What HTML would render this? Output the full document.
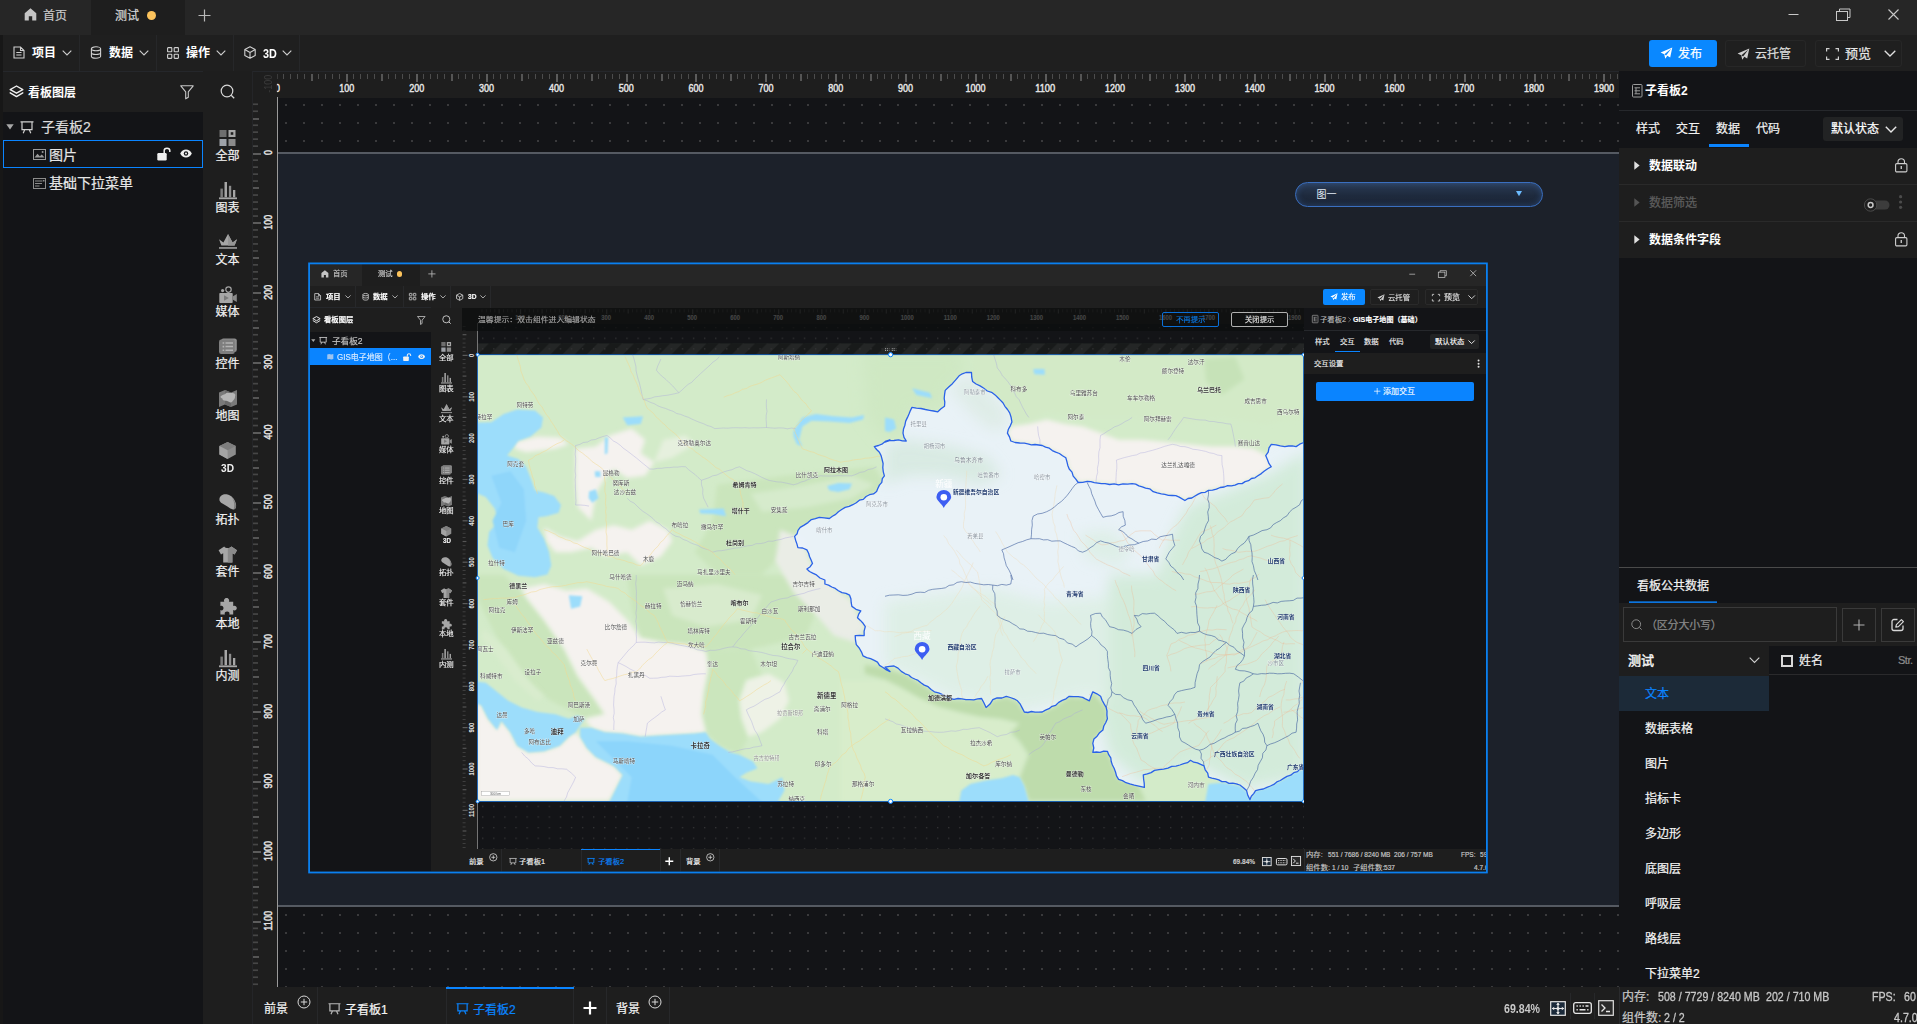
<!DOCTYPE html>
<html lang="zh-CN">
<head>
<meta charset="utf-8">
<title>测试</title>
<style>
*{box-sizing:border-box;margin:0;padding:0}
html,body{width:1917px;height:1024px;overflow:hidden;background:#131417}
body{font-family:"Liberation Sans","Noto Sans CJK SC",sans-serif;font-size:12px;color:#fff;position:relative;line-height:1}
.abs{position:absolute}
.t{position:absolute;white-space:nowrap;line-height:1;-webkit-text-stroke:.22px currentColor}
.b{font-weight:bold;-webkit-text-stroke:0 !important}
svg{position:absolute;overflow:visible}
.num{font-family:"Liberation Sans",sans-serif;font-weight:bold;transform-origin:0 50%;}
/* ---------- app chrome (shared by outer and nested) ---------- */
.tabbar{position:absolute;left:0;top:0;height:35px;background:#262626}
.toolbar{position:absolute;left:0;top:35px;height:36px;background:#1f1f1f}
.sep{position:absolute;top:35px;width:1px;height:36px;background:#262729}
</style>
</head>
<body>
<!-- ===== title/tab bar ===== -->
<div class="tabbar" style="width:1917px"></div>
<div class="abs" style="left:91px;top:0;width:94px;height:35px;background:#1e1e1e"></div>
<svg style="left:24px;top:8px" width="13" height="13" viewBox="0 0 13 13"><path d="M6.5 0.3 L12.3 5.2 V12.6 H8.2 V8.2 H4.8 V12.6 H0.7 V5.2 Z" fill="#c4c4c4"/></svg>
<div class="t" style="left:43px;top:10px;color:#c9c9c9">首页</div>
<div class="t" style="left:115px;top:10px;color:#d6d6d6">测试</div>
<div class="abs" style="left:147px;top:11px;width:9px;height:9px;border-radius:50%;background:#fcc35c"></div>
<svg style="left:198px;top:9px" width="13" height="13" viewBox="0 0 13 13"><path d="M6.5 0.5V12.5M0.5 6.5H12.5" stroke="#b8b8b8" stroke-width="1.2" fill="none"/></svg>
<!-- window controls -->
<svg style="left:1788px;top:9px" width="12" height="12" viewBox="0 0 12 12"><path d="M0.5 5.5H10.5" stroke="#c8c8c8" stroke-width="1"/></svg>
<svg style="left:1836px;top:8px" width="15" height="14" viewBox="0 0 15 14"><path d="M3.5 3.5V1H14V9.5H11.5" stroke="#c8c8c8" stroke-width="1" fill="none"/><rect x="0.5" y="3.5" width="11" height="9" stroke="#c8c8c8" stroke-width="1" fill="none"/></svg>
<svg style="left:1888px;top:9px" width="12" height="12" viewBox="0 0 12 12"><path d="M0.5 0.5L10.5 10.5M10.5 0.5L0.5 10.5" stroke="#c8c8c8" stroke-width="1.1"/></svg>

<!-- ===== toolbar ===== -->
<div class="toolbar" style="width:1917px"></div>
<div class="abs" style="left:0;top:35px;width:3px;height:989px;background:#171717"></div>
<div class="sep" style="left:79px"></div><div class="sep" style="left:156px"></div><div class="sep" style="left:233px"></div><div class="sep" style="left:299px"></div>
<div class="abs" style="left:3px;top:71px;width:200px;height:1px;background:#25272b"></div>
<!-- 项目 -->
<svg style="left:13px;top:46px" width="12" height="13" viewBox="0 0 12 13"><path d="M1 1H7.5L11 4.5V12H1Z M7.5 1V4.5H11" stroke="#d0d0d0" stroke-width="1.1" fill="none"/><path d="M3.3 6.5H8.5M3.3 9H8.5" stroke="#d0d0d0" stroke-width="1"/></svg>
<div class="t b" style="left:32px;top:47px">项目</div>
<svg style="left:62px;top:50px" width="10" height="6" viewBox="0 0 10 6"><path d="M0.7 0.7L5 5L9.3 0.7" stroke="#cfcfcf" stroke-width="1.1" fill="none"/></svg>
<!-- 数据 -->
<svg style="left:90px;top:46px" width="12" height="13" viewBox="0 0 12 13"><ellipse cx="6" cy="2.8" rx="4.6" ry="2" stroke="#d0d0d0" stroke-width="1.1" fill="none"/><path d="M1.4 2.8V10.2C1.4 11.3 3.5 12.2 6 12.2S10.6 11.3 10.6 10.2V2.8M1.4 6.5C1.4 7.6 3.5 8.5 6 8.5S10.6 7.6 10.6 6.5" stroke="#d0d0d0" stroke-width="1.1" fill="none"/></svg>
<div class="t b" style="left:109px;top:47px">数据</div>
<svg style="left:139px;top:50px" width="10" height="6" viewBox="0 0 10 6"><path d="M0.7 0.7L5 5L9.3 0.7" stroke="#cfcfcf" stroke-width="1.1" fill="none"/></svg>
<!-- 操作 -->
<svg style="left:167px;top:47px" width="12" height="12" viewBox="0 0 12 12"><g stroke="#d0d0d0" stroke-width="1.1" fill="none"><rect x="0.6" y="0.6" width="4.2" height="4.2" rx="0.6"/><rect x="7.2" y="0.6" width="4.2" height="4.2" rx="0.6"/><rect x="0.6" y="7.2" width="4.2" height="4.2" rx="0.6"/><rect x="7.2" y="7.2" width="4.2" height="4.2" rx="0.6"/></g></svg>
<div class="t b" style="left:186px;top:47px">操作</div>
<svg style="left:216px;top:50px" width="10" height="6" viewBox="0 0 10 6"><path d="M0.7 0.7L5 5L9.3 0.7" stroke="#cfcfcf" stroke-width="1.1" fill="none"/></svg>
<!-- 3D -->
<svg style="left:244px;top:46px" width="12" height="13" viewBox="0 0 12 13"><path d="M6 0.8L11.2 3.6V9.4L6 12.2L0.8 9.4V3.6Z M0.8 3.6L6 6.5L11.2 3.6 M6 6.5V12.2" stroke="#d0d0d0" stroke-width="1.1" fill="none" stroke-linejoin="round"/></svg>
<div class="t b" style="left:263px;top:48px;font-size:12px;transform:scaleX(.9);transform-origin:0 0">3D</div>
<svg style="left:282px;top:50px" width="10" height="6" viewBox="0 0 10 6"><path d="M0.7 0.7L5 5L9.3 0.7" stroke="#cfcfcf" stroke-width="1.1" fill="none"/></svg>
<!-- right buttons -->
<div class="abs" style="left:1649px;top:40px;width:68px;height:27px;border-radius:3px;background:#0a88ff"></div>
<svg style="left:1660px;top:47px" width="13" height="13" viewBox="0 0 13 13"><path d="M12.3 0.6L0.6 5.6L4.2 7.2L5.3 11.8L7.3 8.8L10.2 10.4Z" fill="#fff"/><path d="M4.4 7.2L11.4 1.6L6.1 8.4" fill="#0a88ff"/></svg>
<div class="t" style="left:1678px;top:48px;color:#fff">发布</div>
<div class="abs" style="left:1725px;top:40px;width:81px;height:27px;border-radius:3px;border:1px solid #272727"></div>
<svg style="left:1737px;top:48px" width="13" height="13" viewBox="0 0 13 13"><path d="M12.3 0.6L0.6 5.6L4.2 7.2L5.3 11.8L7.3 8.8L10.2 10.4Z" fill="#d0d0d0"/><path d="M4.4 7.2L11.4 1.6L6.1 8.4" fill="#1f1f1f"/></svg>
<div class="t" style="left:1755px;top:48px;color:#dcdcdc">云托管</div>
<div class="abs" style="left:1815px;top:40px;width:87px;height:27px;border-radius:3px;border:1px solid #272727"></div>
<svg style="left:1826px;top:48px" width="13" height="12" viewBox="0 0 13 12"><path d="M0.6 3.5V0.6H3.5M9.5 0.6H12.4V3.5M12.4 8.5V11.4H9.5M3.5 11.4H0.6V8.5" stroke="#d0d0d0" stroke-width="1.2" fill="none"/></svg>
<div class="t" style="left:1845px;top:47px;color:#e8e8e8;font-size:13px">预览</div>
<svg style="left:1884px;top:50px" width="12" height="7" viewBox="0 0 12 7"><path d="M0.7 0.7L6 6L11.3 0.7" stroke="#e0e0e0" stroke-width="1.3" fill="none"/></svg>
<!-- ===== left: layer panel ===== -->
<div class="abs" style="left:3px;top:72px;width:200px;height:40px;background:#1e1e1e"></div>
<div class="abs" style="left:3px;top:112px;width:200px;height:912px;background:#131417"></div>
<svg style="left:9px;top:85px" width="15" height="13" viewBox="0 0 15 13"><path d="M7.5 1L13.8 4.6L7.5 8.2L1.2 4.6Z" stroke="#f0f0f0" stroke-width="1.4" fill="none" stroke-linejoin="round"/><path d="M1.2 7.8L7.5 11.6L13.8 7.8" stroke="#f0f0f0" stroke-width="1.4" fill="none" stroke-linejoin="round" stroke-linecap="round"/></svg>
<div class="t b" style="left:28px;top:87px">看板图层</div>
<svg style="left:180px;top:85px" width="14" height="15" viewBox="0 0 14 15"><path d="M0.8 0.8H13.2L8.3 6.8V12.2L5.7 13.8V6.8Z" stroke="#c8c8c8" stroke-width="1.1" fill="none" stroke-linejoin="round"/></svg>
<!-- tree -->
<svg style="left:6px;top:124px" width="8" height="6" viewBox="0 0 8 6"><path d="M0.3 0.3H7.7L4 5.4Z" fill="#a8a8a8"/></svg>
<svg style="left:20px;top:121px" width="14" height="13" viewBox="0 0 14 13"><path d="M0.5 0.8H13.5M2 0.8V8.6H12V0.8M4.8 8.6L3.2 12.2M9.2 8.6L10.8 12.2" stroke="#cfcfcf" stroke-width="1.2" fill="none"/></svg>
<div class="t" style="left:41px;top:120px;font-size:14px;color:#dcdcdc">子看板2</div>
<div class="abs" style="left:3px;top:140px;width:200px;height:28px;border:1px solid #0a84ff"></div>
<svg style="left:33px;top:149px" width="13" height="11" viewBox="0 0 13 11"><rect x="0.5" y="0.5" width="12" height="10" stroke="#9a9a9a" fill="none"/><path d="M1.5 8.5L4.5 4.8L6.8 7.2L8.8 5.4L11.5 8.5Z" fill="#9a9a9a"/><circle cx="9.6" cy="3" r="1" fill="#9a9a9a"/></svg>
<div class="t" style="left:49px;top:148px;font-size:14px;color:#e6e6e6">图片</div>
<svg style="left:157px;top:147px" width="15" height="14" viewBox="0 0 15 14"><rect x="0.3" y="6" width="9.4" height="7.4" rx="1.2" fill="#f0f0f0"/><path d="M7.2 6V3.6C7.2 0.4 12.8 0.4 12.8 3.6V5" stroke="#f0f0f0" stroke-width="1.5" fill="none"/></svg>
<svg style="left:180px;top:149px" width="12" height="9" viewBox="0 0 12 9"><path d="M0.2 4.5C2.5 -0.9 9.5 -0.9 11.8 4.5C9.5 9.9 2.5 9.9 0.2 4.5Z" fill="#f0f0f0"/><circle cx="6" cy="4.5" r="2.2" fill="#131417"/><circle cx="6" cy="4.5" r="1" fill="#f0f0f0"/></svg>
<svg style="left:33px;top:178px" width="13" height="11" viewBox="0 0 13 11"><rect x="0.5" y="0.5" width="12" height="10" stroke="#8c8c8c" fill="none"/><path d="M2 3H9.5M2 5.5H9M2 8H6.5" stroke="#8c8c8c"/><rect x="10" y="2" width="1.5" height="1.5" fill="#8c8c8c"/></svg>
<div class="t" style="left:49px;top:176px;font-size:14px;color:#e6e6e6">基础下拉菜单</div>

<!-- ===== component column ===== -->
<div class="abs" style="left:203px;top:71px;width:49px;height:953px;background:#1e1e1e"></div>
<svg style="left:220px;top:84px" width="16" height="16" viewBox="0 0 16 16"><circle cx="7" cy="7" r="5.8" stroke="#d8d8d8" stroke-width="1.2" fill="none"/><path d="M11.2 11.2L14.2 14.2" stroke="#d8d8d8" stroke-width="1.3"/></svg>
<!-- component icons -->
<svg style="left:218.8px;top:130px" width="18" height="17" viewBox="0 0 18 17"><rect x="0.5" y="0" width="7" height="7" fill="#6e6e6e"/><rect x="9.5" y="0" width="7" height="7" fill="#a6a6a6"/><rect x="11.7" y="2.2" width="2.6" height="2.6" fill="#1e1e1e"/><rect x="0.5" y="9" width="7" height="7" fill="#9ea2a8"/><rect x="9.5" y="9" width="7" height="7" fill="#8a8a8a"/></svg>
<div class="t" style="left:215.5px;top:150px;color:#f0f0f0">全部</div>
<svg style="left:218.8px;top:182px" width="18" height="17" viewBox="0 0 18 17"><rect x="1.4" y="6.6" width="2.5" height="8.6" fill="#7c7c7c"/><rect x="5.5" y="0" width="2.5" height="15.2" fill="#a6a6a6"/><rect x="9.9" y="3.8" width="2.3" height="11.4" fill="#8e8e8e"/><rect x="14" y="8" width="2.3" height="7.2" fill="#a6a6a6"/><rect x="0" y="15.4" width="18" height="1.8" fill="#a6a6a6"/></svg>
<div class="t" style="left:215.5px;top:202px;color:#f0f0f0">图表</div>
<svg style="left:218.8px;top:234px" width="18" height="17" viewBox="0 0 18 17"><path d="M0 5.2L4.4 8.4L9 0L13.6 8.4L18 5.2L15.6 11.6H2.4Z" fill="#a6a6a6"/><path d="M9 0L13.6 8.4L18 5.2L15.6 11.6H9Z" fill="#959595"/><rect x="0" y="13" width="18" height="1.9" fill="#8a8a8a"/></svg>
<div class="t" style="left:215.5px;top:254px;color:#f0f0f0">文本</div>
<svg style="left:218.8px;top:286px" width="18" height="17" viewBox="0 0 18 17"><circle cx="3.6" cy="4.6" r="1.6" fill="#a6a6a6"/><circle cx="9.5" cy="3.6" r="2.7" fill="none" stroke="#a6a6a6" stroke-width="1.2"/><rect x="0.3" y="7" width="13.4" height="10" rx="0.8" fill="#a6a6a6"/><path d="M14 10.2L17.8 8V16L14 13.8Z" fill="#8a8a8a"/><path d="M5 9.2L9.8 12L5 14.8Z" fill="#7a7a7a"/></svg>
<div class="t" style="left:215.5px;top:306px;color:#f0f0f0">媒体</div>
<svg style="left:218.8px;top:338px" width="18" height="17" viewBox="0 0 18 17"><rect x="2.2" y="0.4" width="15.6" height="13.6" rx="2.2" fill="#8e8e8e"/><rect x="0" y="1.6" width="15.8" height="14.4" rx="2.2" fill="#7e7e7e"/><path d="M6.5 5H14M6.5 8.6H14M6.5 12.2H14" stroke="#b4b4b4" stroke-width="1.5"/><path d="M3.6 5H5.2M3.6 8.6H5.2M3.6 12.2H5.2" stroke="#b4b4b4" stroke-width="1.6"/></svg>
<div class="t" style="left:215.5px;top:358px;color:#f0f0f0">控件</div>
<svg style="left:218.8px;top:390px" width="18" height="17" viewBox="0 0 18 17"><path d="M0 2.4L6 0L12 2.4L18 0V14.6L12 17L6 14.6L0 17Z" fill="#7a7a7a"/><path d="M6 0L12 2.4V17L6 14.6Z" fill="#6a6a6a"/><path d="M1.5 6.5C3 4.5 5.5 4.8 7 3.2C9 2 11 3.4 13 3C14.5 2.6 16 3.6 16.4 5C15.6 6.4 16.6 8 15 9.4C13.6 10.4 13.4 12.4 11.4 12.4C9.6 12.2 8.6 10.6 6.8 10.8C5 11 3.4 10.2 3.4 8.6C2.4 8.2 1.4 7.6 1.5 6.5Z" fill="#b6b6b6"/></svg>
<div class="t" style="left:215.5px;top:410px;color:#f0f0f0">地图</div>
<svg style="left:218.8px;top:442px" width="18" height="17" viewBox="0 0 18 17"><path d="M8.6 0L16.8 4V12.6L8.6 17L0.4 12.6V4Z" fill="#8c8c8c"/><path d="M8.6 0L16.8 4L8.6 8.2L0.4 4Z" fill="#7e7e7e"/><path d="M0.4 4L8.6 8.2V17L0.4 12.6Z" fill="#a4a4a4"/></svg>
<div class="t b" style="left:221px;top:462.5px;font-size:11px;color:#f0f0f0;transform:scaleX(.92);transform-origin:0 0">3D</div>
<svg style="left:218.8px;top:494px" width="18" height="17" viewBox="0 0 18 17"><path d="M0.4 5C0.8 1.6 4.6 -0.4 8.6 0.6C12.6 1.6 15.6 5 16.8 9.4C17.6 12.4 17 15 14.6 15.4C12.4 15.6 10.6 14 8.4 12.6L3.4 9.6C1.4 8.4 0.2 7 0.4 5Z" fill="#a6a6a6"/><path d="M12.6 3.6C14.8 5.6 16.2 8 16.8 10.4C17.4 13 16.8 15 14.6 15.4C16 12 15.4 7 12.6 3.6Z" fill="#7c7c7c"/></svg>
<div class="t" style="left:215.5px;top:514px;color:#f0f0f0">拓扑</div>
<svg style="left:218.8px;top:546px" width="18" height="17" viewBox="0 0 18 17"><path d="M5.2 0.4C6.6 2.4 11 2.4 12.4 0.4L18 4.2L15.6 8.4L13.4 7.2V16.4H4.2V7.2L2 8.4L-0.4 4.2Z" fill="#a6a6a6"/><path d="M8.8 1.9C10.4 1.9 11.8 1.3 12.4 0.4L18 4.2L15.6 8.4L13.4 7.2V16.4H8.8Z" fill="#8a8a8a"/></svg>
<div class="t" style="left:215.5px;top:566px;color:#f0f0f0">套件</div>
<svg style="left:218.8px;top:598px" width="18" height="17" viewBox="0 0 18 17"><path d="M5.3 3.8C4.3 1.8 5.8 0 7.6 0S10.9 1.8 9.9 3.8H14.2V8.1C16 7.1 17.8 8.4 17.8 10.1S16 13.1 14.2 12.1V16.6H10.3C11.1 14.9 9.8 13.6 8.1 13.6S5.1 14.9 5.9 16.6H1.4V12.1C3.1 13.1 4.5 11.8 4.5 10.1S3.1 7.1 1.4 8.1V3.8Z" fill="#a6a6a6"/></svg>
<div class="t" style="left:215.5px;top:618px;color:#f0f0f0">本地</div>
<svg style="left:218.8px;top:650px" width="18" height="17" viewBox="0 0 18 17"><rect x="1.4" y="6.6" width="2.5" height="8.6" fill="#7c7c7c"/><rect x="5.5" y="0" width="2.5" height="15.2" fill="#a6a6a6"/><rect x="9.9" y="3.8" width="2.3" height="11.4" fill="#8e8e8e"/><rect x="14" y="8" width="2.3" height="7.2" fill="#a6a6a6"/><rect x="0" y="15.4" width="18" height="1.8" fill="#a6a6a6"/></svg>
<div class="t" style="left:215.5px;top:670px;color:#f0f0f0">内测</div>
<!-- ===== canvas + rulers ===== -->
<div class="abs" style="left:278px;top:98px;width:1341px;height:889px;background:#131417"></div>
<svg style="left:278px;top:98px" width="1341" height="889"><defs><pattern id="dots" x="7" y="6" width="18" height="18" patternUnits="userSpaceOnUse"><rect x="0" y="0" width="2" height="2" fill="#3a3a3c"/></pattern></defs><rect x="0" y="0" width="1341" height="54" fill="url(#dots)"/><rect x="0" y="810" width="1341" height="79" fill="url(#dots)"/></svg>
<div class="abs" style="left:278px;top:152px;width:1341px;height:755px;background:#1c212a;border-top:2px solid #555a62;border-bottom:2px solid #555a62"></div>
<div class="abs" style="left:252px;top:72px;width:1367px;height:26px;background:#1e1e1e"></div>
<div class="abs" style="left:252px;top:72px;width:26px;height:915px;background:#1e1e1e"></div>
<div class="abs" style="left:252px;top:71px;width:1367px;height:1px;background:#25272b"></div>
<div class="abs" style="left:252px;top:71px;width:1px;height:916px;background:#242528"></div>
<svg style="left:0;top:0" width="1917" height="1024"><rect x="283" y="74" width="1" height="5" fill="#4c4c4c"/><rect x="290" y="74" width="1" height="5" fill="#4c4c4c"/><rect x="297" y="74" width="1" height="5" fill="#4c4c4c"/><rect x="304" y="74" width="1" height="5" fill="#4c4c4c"/><rect x="311" y="74" width="2" height="7" fill="#555"/><rect x="318" y="74" width="1" height="5" fill="#4c4c4c"/><rect x="325" y="74" width="1" height="5" fill="#4c4c4c"/><rect x="332" y="74" width="1" height="5" fill="#4c4c4c"/><rect x="339" y="74" width="1" height="5" fill="#4c4c4c"/><rect x="346" y="74" width="2" height="8" fill="#5c5c5c"/><rect x="353" y="74" width="1" height="5" fill="#4c4c4c"/><rect x="360" y="74" width="1" height="5" fill="#4c4c4c"/><rect x="367" y="74" width="1" height="5" fill="#4c4c4c"/><rect x="374" y="74" width="1" height="5" fill="#4c4c4c"/><rect x="381" y="74" width="2" height="7" fill="#555"/><rect x="388" y="74" width="1" height="5" fill="#4c4c4c"/><rect x="395" y="74" width="1" height="5" fill="#4c4c4c"/><rect x="402" y="74" width="1" height="5" fill="#4c4c4c"/><rect x="409" y="74" width="1" height="5" fill="#4c4c4c"/><rect x="416" y="74" width="2" height="8" fill="#5c5c5c"/><rect x="423" y="74" width="1" height="5" fill="#4c4c4c"/><rect x="430" y="74" width="1" height="5" fill="#4c4c4c"/><rect x="437" y="74" width="1" height="5" fill="#4c4c4c"/><rect x="444" y="74" width="1" height="5" fill="#4c4c4c"/><rect x="451" y="74" width="2" height="7" fill="#555"/><rect x="458" y="74" width="1" height="5" fill="#4c4c4c"/><rect x="465" y="74" width="1" height="5" fill="#4c4c4c"/><rect x="472" y="74" width="1" height="5" fill="#4c4c4c"/><rect x="479" y="74" width="1" height="5" fill="#4c4c4c"/><rect x="486" y="74" width="2" height="8" fill="#5c5c5c"/><rect x="493" y="74" width="1" height="5" fill="#4c4c4c"/><rect x="500" y="74" width="1" height="5" fill="#4c4c4c"/><rect x="507" y="74" width="1" height="5" fill="#4c4c4c"/><rect x="514" y="74" width="1" height="5" fill="#4c4c4c"/><rect x="521" y="74" width="2" height="7" fill="#555"/><rect x="528" y="74" width="1" height="5" fill="#4c4c4c"/><rect x="535" y="74" width="1" height="5" fill="#4c4c4c"/><rect x="542" y="74" width="1" height="5" fill="#4c4c4c"/><rect x="549" y="74" width="1" height="5" fill="#4c4c4c"/><rect x="556" y="74" width="2" height="8" fill="#5c5c5c"/><rect x="563" y="74" width="1" height="5" fill="#4c4c4c"/><rect x="570" y="74" width="1" height="5" fill="#4c4c4c"/><rect x="577" y="74" width="1" height="5" fill="#4c4c4c"/><rect x="584" y="74" width="1" height="5" fill="#4c4c4c"/><rect x="591" y="74" width="2" height="7" fill="#555"/><rect x="598" y="74" width="1" height="5" fill="#4c4c4c"/><rect x="605" y="74" width="1" height="5" fill="#4c4c4c"/><rect x="612" y="74" width="1" height="5" fill="#4c4c4c"/><rect x="619" y="74" width="1" height="5" fill="#4c4c4c"/><rect x="626" y="74" width="2" height="8" fill="#5c5c5c"/><rect x="633" y="74" width="1" height="5" fill="#4c4c4c"/><rect x="640" y="74" width="1" height="5" fill="#4c4c4c"/><rect x="647" y="74" width="1" height="5" fill="#4c4c4c"/><rect x="654" y="74" width="1" height="5" fill="#4c4c4c"/><rect x="661" y="74" width="2" height="7" fill="#555"/><rect x="668" y="74" width="1" height="5" fill="#4c4c4c"/><rect x="674" y="74" width="1" height="5" fill="#4c4c4c"/><rect x="681" y="74" width="1" height="5" fill="#4c4c4c"/><rect x="688" y="74" width="1" height="5" fill="#4c4c4c"/><rect x="695" y="74" width="2" height="8" fill="#5c5c5c"/><rect x="702" y="74" width="1" height="5" fill="#4c4c4c"/><rect x="709" y="74" width="1" height="5" fill="#4c4c4c"/><rect x="716" y="74" width="1" height="5" fill="#4c4c4c"/><rect x="723" y="74" width="1" height="5" fill="#4c4c4c"/><rect x="730" y="74" width="2" height="7" fill="#555"/><rect x="737" y="74" width="1" height="5" fill="#4c4c4c"/><rect x="744" y="74" width="1" height="5" fill="#4c4c4c"/><rect x="751" y="74" width="1" height="5" fill="#4c4c4c"/><rect x="758" y="74" width="1" height="5" fill="#4c4c4c"/><rect x="765" y="74" width="2" height="8" fill="#5c5c5c"/><rect x="772" y="74" width="1" height="5" fill="#4c4c4c"/><rect x="779" y="74" width="1" height="5" fill="#4c4c4c"/><rect x="786" y="74" width="1" height="5" fill="#4c4c4c"/><rect x="793" y="74" width="1" height="5" fill="#4c4c4c"/><rect x="800" y="74" width="2" height="7" fill="#555"/><rect x="807" y="74" width="1" height="5" fill="#4c4c4c"/><rect x="814" y="74" width="1" height="5" fill="#4c4c4c"/><rect x="821" y="74" width="1" height="5" fill="#4c4c4c"/><rect x="828" y="74" width="1" height="5" fill="#4c4c4c"/><rect x="835" y="74" width="2" height="8" fill="#5c5c5c"/><rect x="842" y="74" width="1" height="5" fill="#4c4c4c"/><rect x="849" y="74" width="1" height="5" fill="#4c4c4c"/><rect x="856" y="74" width="1" height="5" fill="#4c4c4c"/><rect x="863" y="74" width="1" height="5" fill="#4c4c4c"/><rect x="870" y="74" width="2" height="7" fill="#555"/><rect x="877" y="74" width="1" height="5" fill="#4c4c4c"/><rect x="884" y="74" width="1" height="5" fill="#4c4c4c"/><rect x="891" y="74" width="1" height="5" fill="#4c4c4c"/><rect x="898" y="74" width="1" height="5" fill="#4c4c4c"/><rect x="905" y="74" width="2" height="8" fill="#5c5c5c"/><rect x="912" y="74" width="1" height="5" fill="#4c4c4c"/><rect x="919" y="74" width="1" height="5" fill="#4c4c4c"/><rect x="926" y="74" width="1" height="5" fill="#4c4c4c"/><rect x="933" y="74" width="1" height="5" fill="#4c4c4c"/><rect x="940" y="74" width="2" height="7" fill="#555"/><rect x="947" y="74" width="1" height="5" fill="#4c4c4c"/><rect x="954" y="74" width="1" height="5" fill="#4c4c4c"/><rect x="961" y="74" width="1" height="5" fill="#4c4c4c"/><rect x="968" y="74" width="1" height="5" fill="#4c4c4c"/><rect x="975" y="74" width="2" height="8" fill="#5c5c5c"/><rect x="982" y="74" width="1" height="5" fill="#4c4c4c"/><rect x="989" y="74" width="1" height="5" fill="#4c4c4c"/><rect x="996" y="74" width="1" height="5" fill="#4c4c4c"/><rect x="1003" y="74" width="1" height="5" fill="#4c4c4c"/><rect x="1010" y="74" width="2" height="7" fill="#555"/><rect x="1017" y="74" width="1" height="5" fill="#4c4c4c"/><rect x="1024" y="74" width="1" height="5" fill="#4c4c4c"/><rect x="1031" y="74" width="1" height="5" fill="#4c4c4c"/><rect x="1038" y="74" width="1" height="5" fill="#4c4c4c"/><rect x="1045" y="74" width="2" height="8" fill="#5c5c5c"/><rect x="1052" y="74" width="1" height="5" fill="#4c4c4c"/><rect x="1059" y="74" width="1" height="5" fill="#4c4c4c"/><rect x="1066" y="74" width="1" height="5" fill="#4c4c4c"/><rect x="1073" y="74" width="1" height="5" fill="#4c4c4c"/><rect x="1080" y="74" width="2" height="7" fill="#555"/><rect x="1087" y="74" width="1" height="5" fill="#4c4c4c"/><rect x="1094" y="74" width="1" height="5" fill="#4c4c4c"/><rect x="1101" y="74" width="1" height="5" fill="#4c4c4c"/><rect x="1107" y="74" width="1" height="5" fill="#4c4c4c"/><rect x="1114" y="74" width="2" height="8" fill="#5c5c5c"/><rect x="1121" y="74" width="1" height="5" fill="#4c4c4c"/><rect x="1128" y="74" width="1" height="5" fill="#4c4c4c"/><rect x="1135" y="74" width="1" height="5" fill="#4c4c4c"/><rect x="1142" y="74" width="1" height="5" fill="#4c4c4c"/><rect x="1149" y="74" width="2" height="7" fill="#555"/><rect x="1156" y="74" width="1" height="5" fill="#4c4c4c"/><rect x="1163" y="74" width="1" height="5" fill="#4c4c4c"/><rect x="1170" y="74" width="1" height="5" fill="#4c4c4c"/><rect x="1177" y="74" width="1" height="5" fill="#4c4c4c"/><rect x="1184" y="74" width="2" height="8" fill="#5c5c5c"/><rect x="1191" y="74" width="1" height="5" fill="#4c4c4c"/><rect x="1198" y="74" width="1" height="5" fill="#4c4c4c"/><rect x="1205" y="74" width="1" height="5" fill="#4c4c4c"/><rect x="1212" y="74" width="1" height="5" fill="#4c4c4c"/><rect x="1219" y="74" width="2" height="7" fill="#555"/><rect x="1226" y="74" width="1" height="5" fill="#4c4c4c"/><rect x="1233" y="74" width="1" height="5" fill="#4c4c4c"/><rect x="1240" y="74" width="1" height="5" fill="#4c4c4c"/><rect x="1247" y="74" width="1" height="5" fill="#4c4c4c"/><rect x="1254" y="74" width="2" height="8" fill="#5c5c5c"/><rect x="1261" y="74" width="1" height="5" fill="#4c4c4c"/><rect x="1268" y="74" width="1" height="5" fill="#4c4c4c"/><rect x="1275" y="74" width="1" height="5" fill="#4c4c4c"/><rect x="1282" y="74" width="1" height="5" fill="#4c4c4c"/><rect x="1289" y="74" width="2" height="7" fill="#555"/><rect x="1296" y="74" width="1" height="5" fill="#4c4c4c"/><rect x="1303" y="74" width="1" height="5" fill="#4c4c4c"/><rect x="1310" y="74" width="1" height="5" fill="#4c4c4c"/><rect x="1317" y="74" width="1" height="5" fill="#4c4c4c"/><rect x="1324" y="74" width="2" height="8" fill="#5c5c5c"/><rect x="1331" y="74" width="1" height="5" fill="#4c4c4c"/><rect x="1338" y="74" width="1" height="5" fill="#4c4c4c"/><rect x="1345" y="74" width="1" height="5" fill="#4c4c4c"/><rect x="1352" y="74" width="1" height="5" fill="#4c4c4c"/><rect x="1359" y="74" width="2" height="7" fill="#555"/><rect x="1366" y="74" width="1" height="5" fill="#4c4c4c"/><rect x="1373" y="74" width="1" height="5" fill="#4c4c4c"/><rect x="1380" y="74" width="1" height="5" fill="#4c4c4c"/><rect x="1387" y="74" width="1" height="5" fill="#4c4c4c"/><rect x="1394" y="74" width="2" height="8" fill="#5c5c5c"/><rect x="1401" y="74" width="1" height="5" fill="#4c4c4c"/><rect x="1408" y="74" width="1" height="5" fill="#4c4c4c"/><rect x="1415" y="74" width="1" height="5" fill="#4c4c4c"/><rect x="1422" y="74" width="1" height="5" fill="#4c4c4c"/><rect x="1429" y="74" width="2" height="7" fill="#555"/><rect x="1436" y="74" width="1" height="5" fill="#4c4c4c"/><rect x="1443" y="74" width="1" height="5" fill="#4c4c4c"/><rect x="1450" y="74" width="1" height="5" fill="#4c4c4c"/><rect x="1457" y="74" width="1" height="5" fill="#4c4c4c"/><rect x="1464" y="74" width="2" height="8" fill="#5c5c5c"/><rect x="1471" y="74" width="1" height="5" fill="#4c4c4c"/><rect x="1478" y="74" width="1" height="5" fill="#4c4c4c"/><rect x="1485" y="74" width="1" height="5" fill="#4c4c4c"/><rect x="1492" y="74" width="1" height="5" fill="#4c4c4c"/><rect x="1499" y="74" width="2" height="7" fill="#555"/><rect x="1506" y="74" width="1" height="5" fill="#4c4c4c"/><rect x="1513" y="74" width="1" height="5" fill="#4c4c4c"/><rect x="1520" y="74" width="1" height="5" fill="#4c4c4c"/><rect x="1527" y="74" width="1" height="5" fill="#4c4c4c"/><rect x="1534" y="74" width="2" height="8" fill="#5c5c5c"/><rect x="1541" y="74" width="1" height="5" fill="#4c4c4c"/><rect x="1547" y="74" width="1" height="5" fill="#4c4c4c"/><rect x="1554" y="74" width="1" height="5" fill="#4c4c4c"/><rect x="1561" y="74" width="1" height="5" fill="#4c4c4c"/><rect x="1568" y="74" width="2" height="7" fill="#555"/><rect x="1575" y="74" width="1" height="5" fill="#4c4c4c"/><rect x="1582" y="74" width="1" height="5" fill="#4c4c4c"/><rect x="1589" y="74" width="1" height="5" fill="#4c4c4c"/><rect x="1596" y="74" width="1" height="5" fill="#4c4c4c"/><rect x="1603" y="74" width="2" height="8" fill="#5c5c5c"/><rect x="1610" y="74" width="1" height="5" fill="#4c4c4c"/><rect x="1617" y="74" width="1" height="5" fill="#4c4c4c"/><rect x="277" y="74" width="1" height="5" fill="#3a3a3a"/><rect x="253" y="103.4" width="5" height="1.7" fill="#464646"/><rect x="253" y="110.4" width="5" height="1.7" fill="#464646"/><rect x="253" y="118" width="6" height="2" fill="#555"/><rect x="253" y="124.4" width="5" height="1.7" fill="#464646"/><rect x="253" y="131.3" width="5" height="1.7" fill="#464646"/><rect x="253" y="138.3" width="5" height="1.7" fill="#464646"/><rect x="253" y="145.3" width="5" height="1.7" fill="#464646"/><rect x="253" y="153" width="8" height="2" fill="#5c5c5c"/><rect x="253" y="159.3" width="5" height="1.7" fill="#464646"/><rect x="253" y="166.3" width="5" height="1.7" fill="#464646"/><rect x="253" y="173.3" width="5" height="1.7" fill="#464646"/><rect x="253" y="180.2" width="5" height="1.7" fill="#464646"/><rect x="253" y="187" width="6" height="2" fill="#555"/><rect x="253" y="194.2" width="5" height="1.7" fill="#464646"/><rect x="253" y="201.2" width="5" height="1.7" fill="#464646"/><rect x="253" y="208.2" width="5" height="1.7" fill="#464646"/><rect x="253" y="215.2" width="5" height="1.7" fill="#464646"/><rect x="253" y="222" width="8" height="2" fill="#5c5c5c"/><rect x="253" y="229.1" width="5" height="1.7" fill="#464646"/><rect x="253" y="236.1" width="5" height="1.7" fill="#464646"/><rect x="253" y="243.1" width="5" height="1.7" fill="#464646"/><rect x="253" y="250.1" width="5" height="1.7" fill="#464646"/><rect x="253" y="257" width="6" height="2" fill="#555"/><rect x="253" y="264.0" width="5" height="1.7" fill="#464646"/><rect x="253" y="271.0" width="5" height="1.7" fill="#464646"/><rect x="253" y="278.0" width="5" height="1.7" fill="#464646"/><rect x="253" y="285.0" width="5" height="1.7" fill="#464646"/><rect x="253" y="292" width="8" height="2" fill="#5c5c5c"/><rect x="253" y="299.0" width="5" height="1.7" fill="#464646"/><rect x="253" y="305.9" width="5" height="1.7" fill="#464646"/><rect x="253" y="312.9" width="5" height="1.7" fill="#464646"/><rect x="253" y="319.9" width="5" height="1.7" fill="#464646"/><rect x="253" y="327" width="6" height="2" fill="#555"/><rect x="253" y="333.9" width="5" height="1.7" fill="#464646"/><rect x="253" y="340.9" width="5" height="1.7" fill="#464646"/><rect x="253" y="347.9" width="5" height="1.7" fill="#464646"/><rect x="253" y="354.8" width="5" height="1.7" fill="#464646"/><rect x="253" y="362" width="8" height="2" fill="#5c5c5c"/><rect x="253" y="368.8" width="5" height="1.7" fill="#464646"/><rect x="253" y="375.8" width="5" height="1.7" fill="#464646"/><rect x="253" y="382.8" width="5" height="1.7" fill="#464646"/><rect x="253" y="389.8" width="5" height="1.7" fill="#464646"/><rect x="253" y="397" width="6" height="2" fill="#555"/><rect x="253" y="403.7" width="5" height="1.7" fill="#464646"/><rect x="253" y="410.7" width="5" height="1.7" fill="#464646"/><rect x="253" y="417.7" width="5" height="1.7" fill="#464646"/><rect x="253" y="424.7" width="5" height="1.7" fill="#464646"/><rect x="253" y="432" width="8" height="2" fill="#5c5c5c"/><rect x="253" y="438.6" width="5" height="1.7" fill="#464646"/><rect x="253" y="445.6" width="5" height="1.7" fill="#464646"/><rect x="253" y="452.6" width="5" height="1.7" fill="#464646"/><rect x="253" y="459.6" width="5" height="1.7" fill="#464646"/><rect x="253" y="467" width="6" height="2" fill="#555"/><rect x="253" y="473.6" width="5" height="1.7" fill="#464646"/><rect x="253" y="480.5" width="5" height="1.7" fill="#464646"/><rect x="253" y="487.5" width="5" height="1.7" fill="#464646"/><rect x="253" y="494.5" width="5" height="1.7" fill="#464646"/><rect x="253" y="502" width="8" height="2" fill="#5c5c5c"/><rect x="253" y="508.5" width="5" height="1.7" fill="#464646"/><rect x="253" y="515.5" width="5" height="1.7" fill="#464646"/><rect x="253" y="522.5" width="5" height="1.7" fill="#464646"/><rect x="253" y="529.4" width="5" height="1.7" fill="#464646"/><rect x="253" y="537" width="6" height="2" fill="#555"/><rect x="253" y="543.4" width="5" height="1.7" fill="#464646"/><rect x="253" y="550.4" width="5" height="1.7" fill="#464646"/><rect x="253" y="557.4" width="5" height="1.7" fill="#464646"/><rect x="253" y="564.4" width="5" height="1.7" fill="#464646"/><rect x="253" y="572" width="8" height="2" fill="#5c5c5c"/><rect x="253" y="578.3" width="5" height="1.7" fill="#464646"/><rect x="253" y="585.3" width="5" height="1.7" fill="#464646"/><rect x="253" y="592.3" width="5" height="1.7" fill="#464646"/><rect x="253" y="599.3" width="5" height="1.7" fill="#464646"/><rect x="253" y="606" width="6" height="2" fill="#555"/><rect x="253" y="613.2" width="5" height="1.7" fill="#464646"/><rect x="253" y="620.2" width="5" height="1.7" fill="#464646"/><rect x="253" y="627.2" width="5" height="1.7" fill="#464646"/><rect x="253" y="634.2" width="5" height="1.7" fill="#464646"/><rect x="253" y="641" width="8" height="2" fill="#5c5c5c"/><rect x="253" y="648.2" width="5" height="1.7" fill="#464646"/><rect x="253" y="655.1" width="5" height="1.7" fill="#464646"/><rect x="253" y="662.1" width="5" height="1.7" fill="#464646"/><rect x="253" y="669.1" width="5" height="1.7" fill="#464646"/><rect x="253" y="676" width="6" height="2" fill="#555"/><rect x="253" y="683.1" width="5" height="1.7" fill="#464646"/><rect x="253" y="690.1" width="5" height="1.7" fill="#464646"/><rect x="253" y="697.1" width="5" height="1.7" fill="#464646"/><rect x="253" y="704.0" width="5" height="1.7" fill="#464646"/><rect x="253" y="711" width="8" height="2" fill="#5c5c5c"/><rect x="253" y="718.0" width="5" height="1.7" fill="#464646"/><rect x="253" y="725.0" width="5" height="1.7" fill="#464646"/><rect x="253" y="732.0" width="5" height="1.7" fill="#464646"/><rect x="253" y="739.0" width="5" height="1.7" fill="#464646"/><rect x="253" y="746" width="6" height="2" fill="#555"/><rect x="253" y="752.9" width="5" height="1.7" fill="#464646"/><rect x="253" y="759.9" width="5" height="1.7" fill="#464646"/><rect x="253" y="766.9" width="5" height="1.7" fill="#464646"/><rect x="253" y="773.9" width="5" height="1.7" fill="#464646"/><rect x="253" y="781" width="8" height="2" fill="#5c5c5c"/><rect x="253" y="787.8" width="5" height="1.7" fill="#464646"/><rect x="253" y="794.8" width="5" height="1.7" fill="#464646"/><rect x="253" y="801.8" width="5" height="1.7" fill="#464646"/><rect x="253" y="808.8" width="5" height="1.7" fill="#464646"/><rect x="253" y="816" width="6" height="2" fill="#555"/><rect x="253" y="822.8" width="5" height="1.7" fill="#464646"/><rect x="253" y="829.7" width="5" height="1.7" fill="#464646"/><rect x="253" y="836.7" width="5" height="1.7" fill="#464646"/><rect x="253" y="843.7" width="5" height="1.7" fill="#464646"/><rect x="253" y="851" width="8" height="2" fill="#5c5c5c"/><rect x="253" y="857.7" width="5" height="1.7" fill="#464646"/><rect x="253" y="864.7" width="5" height="1.7" fill="#464646"/><rect x="253" y="871.7" width="5" height="1.7" fill="#464646"/><rect x="253" y="878.6" width="5" height="1.7" fill="#464646"/><rect x="253" y="886" width="6" height="2" fill="#555"/><rect x="253" y="892.6" width="5" height="1.7" fill="#464646"/><rect x="253" y="899.6" width="5" height="1.7" fill="#464646"/><rect x="253" y="906.6" width="5" height="1.7" fill="#464646"/><rect x="253" y="913.6" width="5" height="1.7" fill="#464646"/><rect x="253" y="921" width="8" height="2" fill="#5c5c5c"/><rect x="253" y="927.5" width="5" height="1.7" fill="#464646"/><rect x="253" y="934.5" width="5" height="1.7" fill="#464646"/><rect x="253" y="941.5" width="5" height="1.7" fill="#464646"/><rect x="253" y="948.5" width="5" height="1.7" fill="#464646"/><rect x="253" y="956" width="6" height="2" fill="#555"/><rect x="253" y="962.4" width="5" height="1.7" fill="#464646"/><rect x="253" y="969.4" width="5" height="1.7" fill="#464646"/><rect x="253" y="976.4" width="5" height="1.7" fill="#464646"/><rect x="253" y="983.4" width="5" height="1.7" fill="#464646"/><rect x="277" y="97" width="1" height="890" fill="#9a9a9a"/><g font-family="Liberation Sans, sans-serif" font-weight="normal" font-size="11.3" fill="#e6e6e6" stroke="#e6e6e6" stroke-width="0.45" text-anchor="middle"><text x="346.8" y="92" textLength="15.0" lengthAdjust="spacingAndGlyphs">100</text><text x="416.7" y="92" textLength="15.0" lengthAdjust="spacingAndGlyphs">200</text><text x="486.5" y="92" textLength="15.0" lengthAdjust="spacingAndGlyphs">300</text><text x="556.4" y="92" textLength="15.0" lengthAdjust="spacingAndGlyphs">400</text><text x="626.2" y="92" textLength="15.0" lengthAdjust="spacingAndGlyphs">500</text><text x="696.0" y="92" textLength="15.0" lengthAdjust="spacingAndGlyphs">600</text><text x="765.9" y="92" textLength="15.0" lengthAdjust="spacingAndGlyphs">700</text><text x="835.7" y="92" textLength="15.0" lengthAdjust="spacingAndGlyphs">800</text><text x="905.6" y="92" textLength="15.0" lengthAdjust="spacingAndGlyphs">900</text><text x="975.4" y="92" textLength="20.0" lengthAdjust="spacingAndGlyphs">1000</text><text x="1045.2" y="92" textLength="20.0" lengthAdjust="spacingAndGlyphs">1100</text><text x="1115.1" y="92" textLength="20.0" lengthAdjust="spacingAndGlyphs">1200</text><text x="1184.9" y="92" textLength="20.0" lengthAdjust="spacingAndGlyphs">1300</text><text x="1254.8" y="92" textLength="20.0" lengthAdjust="spacingAndGlyphs">1400</text><text x="1324.6" y="92" textLength="20.0" lengthAdjust="spacingAndGlyphs">1500</text><text x="1394.4" y="92" textLength="20.0" lengthAdjust="spacingAndGlyphs">1600</text><text x="1464.3" y="92" textLength="20.0" lengthAdjust="spacingAndGlyphs">1700</text><text x="1534.1" y="92" textLength="20.0" lengthAdjust="spacingAndGlyphs">1800</text><text x="1604.0" y="92" textLength="20.0" lengthAdjust="spacingAndGlyphs">1900</text><text x="277.5" y="92" textLength="5.3" lengthAdjust="spacingAndGlyphs" style="clip-path:inset(0 0 0 2.5px)">0</text><text transform="translate(272.3,152.5) rotate(-90)" textLength="5.0" lengthAdjust="spacingAndGlyphs">0</text><text transform="translate(272.3,222.3) rotate(-90)" textLength="15.0" lengthAdjust="spacingAndGlyphs">100</text><text transform="translate(272.3,292.2) rotate(-90)" textLength="15.0" lengthAdjust="spacingAndGlyphs">200</text><text transform="translate(272.3,362.0) rotate(-90)" textLength="15.0" lengthAdjust="spacingAndGlyphs">300</text><text transform="translate(272.3,431.9) rotate(-90)" textLength="15.0" lengthAdjust="spacingAndGlyphs">400</text><text transform="translate(272.3,501.7) rotate(-90)" textLength="15.0" lengthAdjust="spacingAndGlyphs">500</text><text transform="translate(272.3,571.5) rotate(-90)" textLength="15.0" lengthAdjust="spacingAndGlyphs">600</text><text transform="translate(272.3,641.4) rotate(-90)" textLength="15.0" lengthAdjust="spacingAndGlyphs">700</text><text transform="translate(272.3,711.2) rotate(-90)" textLength="15.0" lengthAdjust="spacingAndGlyphs">800</text><text transform="translate(272.3,781.1) rotate(-90)" textLength="15.0" lengthAdjust="spacingAndGlyphs">900</text><text transform="translate(272.3,850.9) rotate(-90)" textLength="20.0" lengthAdjust="spacingAndGlyphs">1000</text><text transform="translate(272.3,920.7) rotate(-90)" textLength="20.0" lengthAdjust="spacingAndGlyphs">1100</text><text transform="translate(272,83.7) rotate(-90)" fill="#555" stroke="none" textLength="18" lengthAdjust="spacingAndGlyphs" opacity=".5">-100</text></g></svg>
<!-- ===== board content: dropdown component ===== -->
<div class="abs" style="left:1295px;top:182px;width:248px;height:25px;border-radius:13px;border:1px solid #3a6fc0;background:linear-gradient(180deg,#2a3b55 0%,#1e2a3d 55%,#1b2535 100%);box-shadow:inset 0 0 6px rgba(70,130,220,.35)"></div>
<div class="t" style="left:1316.5px;top:190px;font-size:10px;color:#e4ecf6;-webkit-text-stroke:0">图一</div>
<svg style="left:1516.3px;top:191.4px" width="6" height="5.2" viewBox="0 0 7 6"><path d="M0 0H7L3.5 6Z" fill="#6cbcff"/></svg>
<!-- ===== right panel ===== -->
<div class="abs" style="left:1619px;top:72px;width:298px;height:952px;background:#131417"></div>
<div class="abs" style="left:1619px;top:110px;width:298px;height:1px;background:#26282c"></div>
<svg style="left:1632px;top:84px" width="11" height="14" viewBox="0 0 11 14"><rect x="0.5" y="0.5" width="9.5" height="12.5" rx="1" stroke="#9c9c9c" fill="none"/><path d="M2.5 3.8H8M2.5 6.8H8M2.5 9.8H8M4 3.8V9.8" stroke="#9c9c9c" stroke-width="1"/></svg>
<div class="t b" style="left:1645px;top:85px">子看板2</div>
<div class="t" style="left:1636px;top:123px;color:#f2f2f2">样式</div>
<div class="t" style="left:1676px;top:123px;color:#f2f2f2">交互</div>
<div class="t" style="left:1716px;top:123px;color:#f2f2f2">数据</div>
<div class="t" style="left:1756px;top:123px;color:#f2f2f2">代码</div>
<div class="abs" style="left:1709px;top:144px;width:40px;height:3px;background:#0a84ff"></div>
<div class="abs" style="left:1823px;top:117px;width:80px;height:24px;border-radius:3px;background:#222324"></div>
<div class="t" style="left:1831px;top:123px;color:#fff">默认状态</div>
<svg style="left:1885px;top:126px" width="12" height="7" viewBox="0 0 12 7"><path d="M0.8 0.8L6 6L11.2 0.8" stroke="#e8e8e8" stroke-width="1.4" fill="none"/></svg>
<!-- sections -->
<div class="abs" style="left:1619px;top:148px;width:298px;height:110px;background:#1e1e1e"></div>
<div class="abs" style="left:1619px;top:184px;width:298px;height:1px;background:#2a2a2a"></div>
<div class="abs" style="left:1619px;top:221px;width:298px;height:1px;background:#2a2a2a"></div>
<svg style="left:1634px;top:161px" width="6" height="9" viewBox="0 0 6 9"><path d="M0.3 0.3V8.7L5.6 4.5Z" fill="#e0e0e0"/></svg>
<div class="t b" style="left:1649px;top:160px">数据联动</div>
<svg style="left:1634px;top:198px" width="6" height="9" viewBox="0 0 6 9"><path d="M0.3 0.3V8.7L5.6 4.5Z" fill="#555"/></svg>
<div class="t" style="left:1649px;top:197px;color:#5e5e5e">数据筛选</div>
<svg style="left:1634px;top:235px" width="6" height="9" viewBox="0 0 6 9"><path d="M0.3 0.3V8.7L5.6 4.5Z" fill="#e0e0e0"/></svg>
<div class="t b" style="left:1649px;top:234px">数据条件字段</div>
<svg style="left:1895px;top:158px" width="13" height="15" viewBox="0 0 13 15"><rect x="0.6" y="5.6" width="11.3" height="8.3" rx="1.2" stroke="#cfcfcf" stroke-width="1.1" fill="none"/><path d="M3 5.6V3.8C3 -0.3 9.5 -0.3 9.5 3.8V5.6" stroke="#cfcfcf" stroke-width="1.1" fill="none"/><rect x="5.6" y="8" width="1.3" height="3" fill="#cfcfcf"/></svg>
<svg style="left:1895px;top:232px" width="13" height="15" viewBox="0 0 13 15"><rect x="0.6" y="5.6" width="11.3" height="8.3" rx="1.2" stroke="#cfcfcf" stroke-width="1.1" fill="none"/><path d="M3 5.6V3.8C3 -0.3 9.5 -0.3 9.5 3.8V5.6" stroke="#cfcfcf" stroke-width="1.1" fill="none"/><rect x="5.6" y="8" width="1.3" height="3" fill="#cfcfcf"/></svg>
<svg style="left:1863px;top:197px" width="28" height="16" viewBox="0 0 28 16"><rect x="6" y="3.5" width="20.5" height="9" rx="4.5" fill="#3c3c3c"/><circle cx="7.6" cy="8" r="6.2" fill="#1e1e1e" stroke="#4a4a4a" stroke-width="1"/><circle cx="7.6" cy="8" r="2.4" fill="none" stroke="#c8c8c8" stroke-width="1.5"/></svg>

<svg style="left:1898px;top:194px" width="5" height="16" viewBox="0 0 5 16"><circle cx="2.6" cy="2.7" r="1.6" fill="#4c4c4c"/><circle cx="2.6" cy="8" r="1.6" fill="#4c4c4c"/><circle cx="2.6" cy="13.3" r="1.6" fill="#4c4c4c"/></svg>

<!-- lower: public data -->
<div class="abs" style="left:1619px;top:567px;width:298px;height:1px;background:#4a4a4a"></div>
<div class="t" style="left:1637px;top:580px;color:#f2f2f2">看板公共数据</div>
<div class="abs" style="left:1629px;top:601px;width:88px;height:2px;background:linear-gradient(rgba(10,132,255,.45),#0a84ff)"></div>
<div class="abs" style="left:1619px;top:603px;width:298px;height:43px;background:#1e1e1e"></div>
<div class="abs" style="left:1623px;top:607px;width:214px;height:35px;border:1px solid #3a3a3a;background:#1e1e1e"></div>
<svg style="left:1631px;top:619px" width="12" height="12" viewBox="0 0 12 12"><circle cx="5.2" cy="5.2" r="4.4" stroke="#8a8a8a" stroke-width="1" fill="none"/><path d="M8.4 8.4L10.6 10.6" stroke="#8a8a8a" stroke-width="1"/></svg>
<div class="t" style="left:1646px;top:620px;color:#8a8a8a;font-size:11px;letter-spacing:-.2px">（区分大小写）</div>
<div class="abs" style="left:1842px;top:608px;width:34px;height:34px;border:1px solid #3a3a3a"></div>
<svg style="left:1853px;top:619px" width="12" height="12" viewBox="0 0 12 12"><path d="M6 0.5V11.5M0.5 6H11.5" stroke="#b0b0b0" stroke-width="1.1"/></svg>
<div class="abs" style="left:1881px;top:608px;width:34px;height:34px;border:1px solid #3a3a3a"></div>
<svg style="left:1891px;top:618px" width="14" height="14" viewBox="0 0 14 14"><path d="M6.5 1.5H3C1.9 1.5 1 2.4 1 3.5V10.5C1 11.6 1.9 12.5 3 12.5H10C11.1 12.5 12 11.6 12 10.5V7.5" stroke="#d8d8d8" stroke-width="1.3" fill="none"/><path d="M4.8 9.2L5.4 6.6L10.4 1.6L12.4 3.6L7.4 8.6Z" stroke="#d8d8d8" stroke-width="1.2" fill="none" stroke-linejoin="round"/></svg>
<div class="abs" style="left:1619px;top:646px;width:150px;height:30px;background:#1e1e1e"></div>
<div class="t" style="left:1628px;top:654px;font-size:13px;color:#f4f4f4;-webkit-text-stroke:.45px #f4f4f4">测试</div>
<svg style="left:1749px;top:657px" width="11" height="7" viewBox="0 0 11 7"><path d="M0.7 0.7L5.5 5.5L10.3 0.7" stroke="#d0d0d0" stroke-width="1.1" fill="none"/></svg>
<div class="abs" style="left:1769px;top:674px;width:148px;height:1px;background:#2a2a2c"></div>
<div class="abs" style="left:1781px;top:655px;width:12px;height:12px;border:2px solid #d8d8d8"></div>
<div class="t" style="left:1799px;top:655px;color:#eee">姓名</div>
<div class="t" style="left:1898px;top:655px;color:#8c8c8c;font-size:11px;letter-spacing:-.5px">Str.</div>
<div class="abs" style="left:1619px;top:676px;width:150px;height:35px;background:#1c2a38"></div>
<div class="t" style="left:1645px;top:688px;color:#0a84ff">文本</div>
<div class="t" style="left:1645px;top:723px;color:#f4f4f4">数据表格</div>
<div class="t" style="left:1645px;top:758px;color:#f4f4f4">图片</div>
<div class="t" style="left:1645px;top:793px;color:#f4f4f4">指标卡</div>
<div class="t" style="left:1645px;top:828px;color:#f4f4f4">多边形</div>
<div class="t" style="left:1645px;top:863px;color:#f4f4f4">底图层</div>
<div class="t" style="left:1645px;top:898px;color:#f4f4f4">呼吸层</div>
<div class="t" style="left:1645px;top:933px;color:#f4f4f4">路线层</div>
<div class="t" style="left:1645px;top:968px;color:#f4f4f4">下拉菜单2</div>
<!-- ===== bottom bar ===== -->
<div class="abs" style="left:253px;top:987px;width:1664px;height:37px;background:#1e1e1e"></div>
<div class="abs" style="left:252px;top:987px;width:1px;height:37px;background:#242528"></div>
<div class="abs" style="left:317px;top:987px;width:1px;height:37px;background:#27282a"></div>
<div class="abs" style="left:446px;top:987px;width:1px;height:37px;background:#27282a"></div>
<div class="abs" style="left:573px;top:987px;width:1px;height:37px;background:#27282a"></div>
<div class="abs" style="left:606px;top:987px;width:1px;height:37px;background:#27282a"></div>
<div class="abs" style="left:669px;top:987px;width:1px;height:37px;background:#27282a"></div>
<div class="abs" style="left:446px;top:987px;width:128px;height:2px;background:#0a84ff"></div>
<div class="t" style="left:264px;top:1003px;color:#f4f4f4">前景</div>
<svg style="left:297px;top:995px" width="14" height="14" viewBox="0 0 14 14"><circle cx="7" cy="7" r="6" stroke="#d8d8d8" stroke-width="1" fill="none"/><path d="M7 3.8V10.2M3.8 7H10.2" stroke="#d8d8d8" stroke-width="1"/></svg>
<svg style="left:328px;top:1003px" width="13" height="12" viewBox="0 0 14 13"><path d="M0.5 0.8H13.5M2 0.8V8.6H12V0.8M4.8 8.6L3.2 12.2M9.2 8.6L10.8 12.2" stroke="#b8b8b8" stroke-width="1.3" fill="none"/></svg>
<div class="t" style="left:345px;top:1004px;color:#f4f4f4">子看板1</div>
<svg style="left:456px;top:1003px" width="13" height="12" viewBox="0 0 14 13"><path d="M0.5 0.8H13.5M2 0.8V8.6H12V0.8M4.8 8.6L3.2 12.2M9.2 8.6L10.8 12.2" stroke="#0a84ff" stroke-width="1.3" fill="none"/></svg>
<div class="t" style="left:473px;top:1004px;color:#0a84ff">子看板2</div>
<svg style="left:583px;top:1001px" width="14" height="14" viewBox="0 0 14 14"><path d="M7 0.5V13.5M0.5 7H13.5" stroke="#fff" stroke-width="2.2"/></svg>
<div class="t" style="left:616px;top:1003px;color:#f4f4f4">背景</div>
<svg style="left:648px;top:995px" width="14" height="14" viewBox="0 0 14 14"><circle cx="7" cy="7" r="6" stroke="#d8d8d8" stroke-width="1" fill="none"/><path d="M7 3.8V10.2M3.8 7H10.2" stroke="#d8d8d8" stroke-width="1"/></svg>
<!-- zoom / tools -->
<div class="t b" style="left:1504px;top:1003px;color:#c8c8c8;transform:scaleX(.885);transform-origin:0 0">69.84%</div>
<div class="abs" style="left:1570px;top:993px;width:1px;height:26px;background:#27282a"></div>
<div class="abs" style="left:1594px;top:993px;width:1px;height:26px;background:#27282a"></div>
<svg style="left:1550px;top:1001px" width="16" height="15" viewBox="0 0 16 15"><rect x="0.7" y="0.7" width="14.6" height="13.6" stroke="#e8e8e8" stroke-width="1.2" fill="#1b2a3a"/><path d="M8 2V13M2.2 7.5H13.8" stroke="#e8e8e8" stroke-width="1.2"/><path d="M8 1.6L9.8 4H6.2ZM8 13.4L9.8 11H6.2ZM1.8 7.5L4.2 5.7V9.3ZM14.2 7.5L11.8 5.7V9.3Z" fill="#e8e8e8"/><circle cx="8" cy="7.5" r="1.6" fill="#e8e8e8"/></svg>
<svg style="left:1573px;top:1002px" width="19" height="12" viewBox="0 0 19 12"><rect x="0.7" y="0.7" width="17.6" height="10.6" rx="2" stroke="#e8e8e8" stroke-width="1.3" fill="none"/><path d="M3.5 4H4.8M6.5 4H7.8M9.5 4H10.8M12.5 4H15.5M3.5 7.8H4.8M6.5 7.8H12.5M14.2 7.8H15.5" stroke="#e8e8e8" stroke-width="1.4"/></svg>
<svg style="left:1598px;top:1000px" width="16" height="16" viewBox="0 0 16 16"><rect x="0.7" y="0.7" width="14.6" height="14.6" stroke="#e0e0e0" stroke-width="1.2" fill="#2a2a2a"/><path d="M3.5 4.5L7 8L3.5 11.5M8 11.5H12" stroke="#e8e8e8" stroke-width="1.3" fill="none"/></svg>
<!-- status -->
<div class="abs" style="left:1619px;top:987px;width:1px;height:37px;background:#2a2b2d"></div>
<div class="t" style="left:1622px;top:991px;color:#c8c8c8">内存:</div>
<div class="t st" style="left:1658px;top:991px;color:#c8c8c8;transform:scaleX(.887);transform-origin:0 0;-webkit-text-stroke:.3px #c8c8c8">508 / 7729 / 8240 MB</div>
<div class="t st" style="left:1765.5px;top:991px;color:#c8c8c8;transform:scaleX(.887);transform-origin:0 0;-webkit-text-stroke:.3px #c8c8c8">202 / 710 MB</div>
<div class="t st" style="left:1872px;top:991px;color:#c8c8c8;transform:scaleX(.887);transform-origin:0 0;-webkit-text-stroke:.3px #c8c8c8">FPS:</div>
<div class="t st" style="left:1904px;top:991px;color:#c8c8c8;transform:scaleX(.887);transform-origin:0 0;-webkit-text-stroke:.3px #c8c8c8">60</div>
<div class="t" style="left:1622px;top:1012px;color:#c8c8c8">组件数:</div>
<div class="t st" style="left:1664px;top:1012px;color:#c8c8c8;transform:scaleX(.887);transform-origin:0 0;-webkit-text-stroke:.3px #c8c8c8">2 / 2</div>
<div class="t st" style="left:1894px;top:1012px;color:#c8c8c8;transform:scaleX(.887);transform-origin:0 0;-webkit-text-stroke:.3px #c8c8c8">4.7.0</div>
<!-- ===== nested screenshot (picture component) ===== -->
<div class="abs" style="left:0;top:0;width:1917px;height:1024px;clip-path:inset(264px 431px 152.5px 310px)">
<div class="abs" style="left:310.0px;top:264.0px;width:1176.0px;height:608.0px;background:#131417;"></div>
<div class="abs" style="left:310.0px;top:264.0px;width:1176.0px;height:21.9px;background:#262626;"></div>
<div class="abs" style="left:362.0px;top:264.0px;width:58.0px;height:21.9px;background:#1e1e1e;"></div>
<div class="abs" style="left:310.0px;top:285.9px;width:1176.0px;height:21.8px;background:#1f1f1f;"></div>
<div class="abs" style="left:310.0px;top:307.7px;width:121.2px;height:24.1px;background:#1e1e1e;"></div>
<div class="abs" style="left:431.2px;top:307.7px;width:30.7px;height:564.3px;background:#1e1e1e;"></div>
<svg style="left:321.3px;top:270.0px" width="7.8" height="7.8" viewBox="0 0 13 13"><path d="M6.5 0.3 L12.3 5.2 V12.6 H8.2 V8.2 H4.8 V12.6 H0.7 V5.2 Z" fill="#c4c4c4"/></svg>
<div class="t" style="left:333.0px;top:270.4px;font-size:12px;color:#c9c9c9;transform:scale(0.6135,0.597);transform-origin:0 0;">首页</div>
<div class="t" style="left:377.6px;top:270.4px;font-size:12px;color:#d6d6d6;transform:scale(0.6135,0.597);transform-origin:0 0;">测试</div>
<div class="abs" style="left:396.9px;top:271.4px;width:5.6px;height:5.6px;border-radius:50%;background:#fcc35c"></div>
<svg style="left:428.4px;top:270.3px" width="7.8" height="7.8" viewBox="0 0 13 13"><path d="M6.5 0.5V12.5M0.5 6.5H12.5" stroke="#b8b8b8" stroke-width="1.4" fill="none"/></svg>
<svg style="left:1408.5px;top:271.0px" width="7.0" height="7.0" viewBox="0 0 12 12"><path d="M0.5 5.5H10.5" stroke="#c8c8c8" stroke-width="1.2"/></svg>
<svg style="left:1438.0px;top:269.6px" width="9.0" height="8.5" viewBox="0 0 15 14"><path d="M3.5 3.5V1H14V9.5H11.5" stroke="#c8c8c8" stroke-width="1.2" fill="none"/><rect x="0.5" y="3.5" width="11" height="9" stroke="#c8c8c8" stroke-width="1.2" fill="none"/></svg>
<svg style="left:1470.0px;top:270.3px" width="7.0" height="7.0" viewBox="0 0 12 12"><path d="M0.5 0.5L10.5 10.5M10.5 0.5L0.5 10.5" stroke="#c8c8c8" stroke-width="1.3"/></svg>
<div class="abs" style="left:355.0px;top:285.9px;width:0.7px;height:21.8px;background:#27282a;"></div>
<div class="abs" style="left:402.5px;top:285.9px;width:0.7px;height:21.8px;background:#27282a;"></div>
<div class="abs" style="left:450.0px;top:285.9px;width:0.7px;height:21.8px;background:#27282a;"></div>
<div class="abs" style="left:490.4px;top:285.9px;width:0.7px;height:21.8px;background:#27282a;"></div>
<div class="abs" style="left:310.0px;top:307.4px;width:121.2px;height:0.6px;background:#25272b;"></div>
<svg style="left:314.2px;top:293.0px" width="7.3" height="7.6" viewBox="0 0 12 13"><path d="M1 1H7.5L11 4.5V12H1Z M7.5 1V4.5H11" stroke="#d0d0d0" stroke-width="1.4" fill="none"/><path d="M3.3 6.5H8.5M3.3 9H8.5" stroke="#d0d0d0" stroke-width="1.2"/></svg>
<div class="t" style="left:326.3px;top:293.2px;font-size:12px;color:#fff;font-weight:bold;transform:scale(0.6135,0.597);transform-origin:0 0;">项目</div>
<svg style="left:345.0px;top:295.2px" width="6.0" height="3.6" viewBox="0 0 10 6"><path d="M0.7 0.7L5 5L9.3 0.7" stroke="#cfcfcf" stroke-width="1.3" fill="none"/></svg>
<svg style="left:362.0px;top:293.0px" width="7.2" height="7.6" viewBox="0 0 12 13"><ellipse cx="6" cy="2.8" rx="4.6" ry="2" stroke="#d0d0d0" stroke-width="1.4" fill="none"/><path d="M1.4 2.8V10.2C1.4 11.3 3.5 12.2 6 12.2S10.6 11.3 10.6 10.2V2.8M1.4 6.5C1.4 7.6 3.5 8.5 6 8.5S10.6 7.6 10.6 6.5" stroke="#d0d0d0" stroke-width="1.4" fill="none"/></svg>
<div class="t" style="left:373.3px;top:293.2px;font-size:12px;color:#fff;font-weight:bold;transform:scale(0.6135,0.597);transform-origin:0 0;">数据</div>
<svg style="left:392.0px;top:295.2px" width="6.0" height="3.6" viewBox="0 0 10 6"><path d="M0.7 0.7L5 5L9.3 0.7" stroke="#cfcfcf" stroke-width="1.3" fill="none"/></svg>
<svg style="left:409.2px;top:293.3px" width="7.2" height="7.2" viewBox="0 0 12 12"><g stroke="#d0d0d0" stroke-width="1.4" fill="none"><rect x="0.6" y="0.6" width="4.2" height="4.2" rx="0.6"/><rect x="7.2" y="0.6" width="4.2" height="4.2" rx="0.6"/><rect x="0.6" y="7.2" width="4.2" height="4.2" rx="0.6"/><rect x="7.2" y="7.2" width="4.2" height="4.2" rx="0.6"/></g></svg>
<div class="t" style="left:420.8px;top:293.2px;font-size:12px;color:#fff;font-weight:bold;transform:scale(0.6135,0.597);transform-origin:0 0;">操作</div>
<svg style="left:440.0px;top:295.2px" width="6.0" height="3.6" viewBox="0 0 10 6"><path d="M0.7 0.7L5 5L9.3 0.7" stroke="#cfcfcf" stroke-width="1.3" fill="none"/></svg>
<svg style="left:456.0px;top:293.0px" width="7.3" height="7.8" viewBox="0 0 12 13"><path d="M6 0.8L11.2 3.6V9.4L6 12.2L0.8 9.4V3.6Z M0.8 3.6L6 6.5L11.2 3.6 M6 6.5V12.2" stroke="#d0d0d0" stroke-width="1.4" fill="none" stroke-linejoin="round"/></svg>
<div class="t" style="left:468.3px;top:293.2px;font-size:12px;color:#fff;font-weight:bold;transform:scale(0.5522,0.597);transform-origin:0 0;">3D</div>
<svg style="left:480.0px;top:295.2px" width="6.0" height="3.6" viewBox="0 0 10 6"><path d="M0.7 0.7L5 5L9.3 0.7" stroke="#cfcfcf" stroke-width="1.3" fill="none"/></svg>
<div class="abs" style="left:1322.8px;top:289.0px;width:41.8px;height:15.8px;background:#0a88ff;border-radius:2px"></div>
<svg style="left:1329.5px;top:293.0px" width="8.0" height="8.0" viewBox="0 0 13 13"><path d="M12.3 0.6L0.6 5.6L4.2 7.2L5.3 11.8L7.3 8.8L10.2 10.4Z" fill="#fff"/><path d="M4.4 7.2L11.4 1.6L6.1 8.4" fill="#0a88ff"/></svg>
<div class="t" style="left:1340.5px;top:293.4px;font-size:12px;color:#fff;transform:scale(0.6135,0.597);transform-origin:0 0;">发布</div>
<div class="abs" style="left:1369.7px;top:289px;width:49.8px;height:15.8px;border:0.7px solid #2a2a2a;border-radius:2px"></div>
<svg style="left:1377.0px;top:293.5px" width="8.0" height="8.0" viewBox="0 0 13 13"><path d="M12.3 0.6L0.6 5.6L4.2 7.2L5.3 11.8L7.3 8.8L10.2 10.4Z" fill="#d0d0d0"/><path d="M4.4 7.2L11.4 1.6L6.1 8.4" fill="#1f1f1f"/></svg>
<div class="t" style="left:1388.0px;top:293.7px;font-size:12px;color:#dcdcdc;transform:scale(0.6135,0.597);transform-origin:0 0;">云托管</div>
<div class="abs" style="left:1425.4px;top:289px;width:52.9px;height:15.8px;border:0.7px solid #2a2a2a;border-radius:2px"></div>
<svg style="left:1432.0px;top:293.6px" width="8.0" height="7.4" viewBox="0 0 13 12"><path d="M0.6 3.5V0.6H3.5M9.5 0.6H12.4V3.5M12.4 8.5V11.4H9.5M3.5 11.4H0.6V8.5" stroke="#d0d0d0" stroke-width="1.4" fill="none"/></svg>
<div class="t" style="left:1443.5px;top:293.4px;font-size:13px;color:#e8e8e8;transform:scale(0.6135,0.597);transform-origin:0 0;">预览</div>
<svg style="left:1467.5px;top:295.0px" width="7.4" height="4.3" viewBox="0 0 12 7"><path d="M0.7 0.7L6 6L11.3 0.7" stroke="#e0e0e0" stroke-width="1.5" fill="none"/></svg>
<svg style="left:311.6px;top:315.6px" width="9.0" height="7.6" viewBox="0 0 15 13"><path d="M7.5 1L13.8 4.6L7.5 8.2L1.2 4.6Z" stroke="#f0f0f0" stroke-width="1.6" fill="none" stroke-linejoin="round"/><path d="M1.2 7.8L7.5 11.6L13.8 7.8" stroke="#f0f0f0" stroke-width="1.6" fill="none" stroke-linejoin="round"/></svg>
<div class="t" style="left:323.5px;top:316.0px;font-size:12px;color:#fff;font-weight:bold;transform:scale(0.6135,0.597);transform-origin:0 0;">看板图层</div>
<svg style="left:417.0px;top:315.6px" width="8.6" height="9.2" viewBox="0 0 14 15"><path d="M0.8 0.8H13.2L8.3 6.8V12.2L5.7 13.8V6.8Z" stroke="#c8c8c8" stroke-width="1.3" fill="none" stroke-linejoin="round"/></svg>
<svg style="left:442.2px;top:314.6px" width="9.8" height="9.8" viewBox="0 0 16 16"><circle cx="7" cy="7" r="5.8" stroke="#d8d8d8" stroke-width="1.4" fill="none"/><path d="M11.2 11.2L14.2 14.2" stroke="#d8d8d8" stroke-width="1.5"/></svg>
<svg style="left:310.6px;top:338.6px" width="4.6" height="3.4" viewBox="0 0 8 6"><path d="M0.3 0.3H7.7L4 5.4Z" fill="#a8a8a8"/></svg>
<svg style="left:318.6px;top:337.0px" width="8.4" height="7.8" viewBox="0 0 14 13"><path d="M0.5 0.8H13.5M2 0.8V8.6H12V0.8M4.8 8.6L3.2 12.2M9.2 8.6L10.8 12.2" stroke="#cfcfcf" stroke-width="1.4" fill="none"/></svg>
<div class="t" style="left:332.0px;top:336.8px;font-size:14px;color:#c8c8c8;transform:scale(0.6135,0.597);transform-origin:0 0;">子看板2</div>
<div class="abs" style="left:310.0px;top:347.8px;width:121.2px;height:16.8px;background:#0a84ff;"></div>
<svg style="left:326.5px;top:354.3px" width="6.6" height="5.6" viewBox="0 0 13 11"><path d="M0.5 1L4.5 0L8.5 1L12.5 0V10L8.5 11L4.5 10L0.5 11Z" fill="#9ec4f0"/></svg>
<div class="t" style="left:337.0px;top:353.1px;font-size:14px;color:#dcecff;transform:scale(0.5706,0.597);transform-origin:0 0;">GIS电子地图（...</div>
<svg style="left:403.0px;top:352.8px" width="9.0" height="8.4" viewBox="0 0 15 14"><rect x="0.3" y="6" width="9.4" height="7.4" rx="1.2" fill="#f0f0f0"/><path d="M7.2 6V3.6C7.2 0.4 12.8 0.4 12.8 3.6V5" stroke="#f0f0f0" stroke-width="1.7" fill="none"/></svg>
<svg style="left:417.6px;top:354.2px" width="7.2" height="5.4" viewBox="0 0 12 9"><path d="M0.2 4.5C2.5 -0.9 9.5 -0.9 11.8 4.5C9.5 9.9 2.5 9.9 0.2 4.5Z" fill="#f0f0f0"/><circle cx="6" cy="4.5" r="2.2" fill="#0a84ff"/><circle cx="6" cy="4.5" r="1" fill="#f0f0f0"/></svg>
<svg style="left:441.2px;top:342.2px" width="11.0" height="10.4" viewBox="0 0 18 17"><rect x="0.5" y="0" width="7" height="7" fill="#6e6e6e"/><rect x="9.5" y="0" width="7" height="7" fill="#a6a6a6"/><rect x="11.7" y="2.2" width="2.6" height="2.6" fill="#1e1e1e"/><rect x="0.5" y="9" width="7" height="7" fill="#9ea2a8"/><rect x="9.5" y="9" width="7" height="7" fill="#8a8a8a"/></svg>
<div class="t" style="left:439.0px;top:353.8px;font-size:12px;color:#f0f0f0;transform:scale(0.6135,0.597);transform-origin:0 0;">全部</div>
<svg style="left:441.2px;top:372.9px" width="11.0" height="10.4" viewBox="0 0 18 17"><rect x="1.4" y="6.6" width="2.5" height="8.6" fill="#7c7c7c"/><rect x="5.5" y="0" width="2.5" height="15.2" fill="#a6a6a6"/><rect x="9.9" y="3.8" width="2.3" height="11.4" fill="#8e8e8e"/><rect x="14" y="8" width="2.3" height="7.2" fill="#a6a6a6"/><rect x="0" y="15.4" width="18" height="1.8" fill="#a6a6a6"/></svg>
<div class="t" style="left:439.0px;top:384.5px;font-size:12px;color:#f0f0f0;transform:scale(0.6135,0.597);transform-origin:0 0;">图表</div>
<svg style="left:441.2px;top:403.6px" width="11.0" height="10.4" viewBox="0 0 18 17"><path d="M0 5.2L4.4 8.4L9 0L13.6 8.4L18 5.2L15.6 11.6H2.4Z" fill="#a6a6a6"/><path d="M9 0L13.6 8.4L18 5.2L15.6 11.6H9Z" fill="#959595"/><rect x="0" y="13" width="18" height="1.9" fill="#8a8a8a"/></svg>
<div class="t" style="left:439.0px;top:415.2px;font-size:12px;color:#f0f0f0;transform:scale(0.6135,0.597);transform-origin:0 0;">文本</div>
<svg style="left:441.2px;top:434.3px" width="11.0" height="10.4" viewBox="0 0 18 17"><circle cx="3.6" cy="4.6" r="1.6" fill="#a6a6a6"/><circle cx="9.5" cy="3.6" r="2.7" fill="none" stroke="#a6a6a6" stroke-width="1.2"/><rect x="0.3" y="7" width="13.4" height="10" rx="0.8" fill="#a6a6a6"/><path d="M14 10.2L17.8 8V16L14 13.8Z" fill="#8a8a8a"/><path d="M5 9.2L9.8 12L5 14.8Z" fill="#7a7a7a"/></svg>
<div class="t" style="left:439.0px;top:445.9px;font-size:12px;color:#f0f0f0;transform:scale(0.6135,0.597);transform-origin:0 0;">媒体</div>
<svg style="left:441.2px;top:465.0px" width="11.0" height="10.4" viewBox="0 0 18 17"><rect x="2.2" y="0.4" width="15.6" height="13.6" rx="2.2" fill="#8e8e8e"/><rect x="0" y="1.6" width="15.8" height="14.4" rx="2.2" fill="#7e7e7e"/><path d="M6.5 5H14M6.5 8.6H14M6.5 12.2H14" stroke="#b4b4b4" stroke-width="1.5"/><path d="M3.6 5H5.2M3.6 8.6H5.2M3.6 12.2H5.2" stroke="#b4b4b4" stroke-width="1.6"/></svg>
<div class="t" style="left:439.0px;top:476.6px;font-size:12px;color:#f0f0f0;transform:scale(0.6135,0.597);transform-origin:0 0;">控件</div>
<svg style="left:441.2px;top:495.7px" width="11.0" height="10.4" viewBox="0 0 18 17"><path d="M0 2.4L6 0L12 2.4L18 0V14.6L12 17L6 14.6L0 17Z" fill="#7a7a7a"/><path d="M6 0L12 2.4V17L6 14.6Z" fill="#6a6a6a"/><path d="M1.5 6.5C3 4.5 5.5 4.8 7 3.2C9 2 11 3.4 13 3C14.5 2.6 16 3.6 16.4 5C15.6 6.4 16.6 8 15 9.4C13.6 10.4 13.4 12.4 11.4 12.4C9.6 12.2 8.6 10.6 6.8 10.8C5 11 3.4 10.2 3.4 8.6C2.4 8.2 1.4 7.6 1.5 6.5Z" fill="#b6b6b6"/></svg>
<div class="t" style="left:439.0px;top:507.3px;font-size:12px;color:#f0f0f0;transform:scale(0.6135,0.597);transform-origin:0 0;">地图</div>
<svg style="left:441.2px;top:526.4px" width="11.0" height="10.4" viewBox="0 0 18 17"><path d="M8.6 0L16.8 4V12.6L8.6 17L0.4 12.6V4Z" fill="#8c8c8c"/><path d="M8.6 0L16.8 4L8.6 8.2L0.4 4Z" fill="#7e7e7e"/><path d="M0.4 4L8.6 8.2V17L0.4 12.6Z" fill="#a4a4a4"/></svg>
<div class="t" style="left:442.6px;top:538.3px;font-size:11px;color:#f0f0f0;font-weight:bold;transform:scale(0.5644,0.597);transform-origin:0 0;">3D</div>
<svg style="left:441.2px;top:557.1px" width="11.0" height="10.4" viewBox="0 0 18 17"><path d="M0.4 5C0.8 1.6 4.6 -0.4 8.6 0.6C12.6 1.6 15.6 5 16.8 9.4C17.6 12.4 17 15 14.6 15.4C12.4 15.6 10.6 14 8.4 12.6L3.4 9.6C1.4 8.4 0.2 7 0.4 5Z" fill="#a6a6a6"/><path d="M12.6 3.6C14.8 5.6 16.2 8 16.8 10.4C17.4 13 16.8 15 14.6 15.4C16 12 15.4 7 12.6 3.6Z" fill="#7c7c7c"/></svg>
<div class="t" style="left:439.0px;top:568.7px;font-size:12px;color:#f0f0f0;transform:scale(0.6135,0.597);transform-origin:0 0;">拓扑</div>
<svg style="left:441.2px;top:587.8px" width="11.0" height="10.4" viewBox="0 0 18 17"><path d="M5.2 0.4C6.6 2.4 11 2.4 12.4 0.4L18 4.2L15.6 8.4L13.4 7.2V16.4H4.2V7.2L2 8.4L-0.4 4.2Z" fill="#a6a6a6"/><path d="M8.8 1.9C10.4 1.9 11.8 1.3 12.4 0.4L18 4.2L15.6 8.4L13.4 7.2V16.4H8.8Z" fill="#8a8a8a"/></svg>
<div class="t" style="left:439.0px;top:599.4px;font-size:12px;color:#f0f0f0;transform:scale(0.6135,0.597);transform-origin:0 0;">套件</div>
<svg style="left:441.2px;top:618.5px" width="11.0" height="10.4" viewBox="0 0 18 17"><path d="M5.3 3.8C4.3 1.8 5.8 0 7.6 0S10.9 1.8 9.9 3.8H14.2V8.1C16 7.1 17.8 8.4 17.8 10.1S16 13.1 14.2 12.1V16.6H10.3C11.1 14.9 9.8 13.6 8.1 13.6S5.1 14.9 5.9 16.6H1.4V12.1C3.1 13.1 4.5 11.8 4.5 10.1S3.1 7.1 1.4 8.1V3.8Z" fill="#a6a6a6"/></svg>
<div class="t" style="left:439.0px;top:630.1px;font-size:12px;color:#f0f0f0;transform:scale(0.6135,0.597);transform-origin:0 0;">本地</div>
<svg style="left:441.2px;top:649.2px" width="11.0" height="10.4" viewBox="0 0 18 17"><rect x="1.4" y="6.6" width="2.5" height="8.6" fill="#7c7c7c"/><rect x="5.5" y="0" width="2.5" height="15.2" fill="#a6a6a6"/><rect x="9.9" y="3.8" width="2.3" height="11.4" fill="#8e8e8e"/><rect x="14" y="8" width="2.3" height="7.2" fill="#a6a6a6"/><rect x="0" y="15.4" width="18" height="1.8" fill="#a6a6a6"/></svg>
<div class="t" style="left:439.0px;top:660.8px;font-size:12px;color:#f0f0f0;transform:scale(0.6135,0.597);transform-origin:0 0;">内测</div>
<div class="abs" style="left:461.9px;top:307.7px;width:842.1px;height:541.5px;background:#131417;"></div>
<svg style="left:477.6px;top:307.7px" width="826.4" height="541.5"><defs><pattern id="dots2" x="4.07" y="8.34" width="11.095" height="10.638" patternUnits="userSpaceOnUse"><rect x="0" y="0" width="1.3" height="1.3" fill="#343436"/></pattern><pattern id="strp" x="11.4" y="35.3" width="24.2" height="11.6" patternUnits="userSpaceOnUse"><path d="M0 11.6L11.6 0H23.7L12.1 11.6Z" fill="#242626"/><path d="M-12.1 11.6L-0.5 0H0V11.6Z" fill="#242626"/><path d="M24.2 11.6V11.1L24.2 11.6Z" fill="#242626"/></pattern></defs><rect x="0" y="35.3" width="826.4" height="11.6" fill="#181a1a"/><rect x="0" y="35.3" width="826.4" height="11.6" fill="url(#strp)"/><rect x="0" y="0" width="826.4" height="541.5" fill="url(#dots2)"/></svg>
<div class="abs" style="left:461.9px;top:307.7px;width:842.1px;height:15.9px;background:#1e1e1e;"></div>
<div class="abs" style="left:461.9px;top:307.7px;width:15.7px;height:541.5px;background:#1e1e1e;"></div>
<svg style="left:0;top:0" width="1917" height="1024"><rect x="481.6" y="309.3" width="0.7" height="3" fill="#4c4c4c"/><rect x="485.9" y="309.3" width="0.7" height="3" fill="#4c4c4c"/><rect x="490.2" y="309.3" width="0.7" height="3" fill="#4c4c4c"/><rect x="494.5" y="309.3" width="0.7" height="3" fill="#4c4c4c"/><rect x="498.5" y="309.3" width="1.2" height="4.2" fill="#555"/><rect x="503.1" y="309.3" width="0.7" height="3" fill="#4c4c4c"/><rect x="507.4" y="309.3" width="0.7" height="3" fill="#4c4c4c"/><rect x="511.7" y="309.3" width="0.7" height="3" fill="#4c4c4c"/><rect x="516.0" y="309.3" width="0.7" height="3" fill="#4c4c4c"/><rect x="520.0" y="309.3" width="1.2" height="4.8" fill="#5c5c5c"/><rect x="524.6" y="309.3" width="0.7" height="3" fill="#4c4c4c"/><rect x="528.9" y="309.3" width="0.7" height="3" fill="#4c4c4c"/><rect x="533.2" y="309.3" width="0.7" height="3" fill="#4c4c4c"/><rect x="537.5" y="309.3" width="0.7" height="3" fill="#4c4c4c"/><rect x="541.5" y="309.3" width="1.2" height="4.2" fill="#555"/><rect x="546.1" y="309.3" width="0.7" height="3" fill="#4c4c4c"/><rect x="550.4" y="309.3" width="0.7" height="3" fill="#4c4c4c"/><rect x="554.7" y="309.3" width="0.7" height="3" fill="#4c4c4c"/><rect x="559.0" y="309.3" width="0.7" height="3" fill="#4c4c4c"/><rect x="563.0" y="309.3" width="1.2" height="4.8" fill="#5c5c5c"/><rect x="567.6" y="309.3" width="0.7" height="3" fill="#4c4c4c"/><rect x="571.9" y="309.3" width="0.7" height="3" fill="#4c4c4c"/><rect x="576.2" y="309.3" width="0.7" height="3" fill="#4c4c4c"/><rect x="580.5" y="309.3" width="0.7" height="3" fill="#4c4c4c"/><rect x="584.6" y="309.3" width="1.2" height="4.2" fill="#555"/><rect x="589.2" y="309.3" width="0.7" height="3" fill="#4c4c4c"/><rect x="593.5" y="309.3" width="0.7" height="3" fill="#4c4c4c"/><rect x="597.8" y="309.3" width="0.7" height="3" fill="#4c4c4c"/><rect x="602.1" y="309.3" width="0.7" height="3" fill="#4c4c4c"/><rect x="606.1" y="309.3" width="1.2" height="4.8" fill="#5c5c5c"/><rect x="610.7" y="309.3" width="0.7" height="3" fill="#4c4c4c"/><rect x="615.0" y="309.3" width="0.7" height="3" fill="#4c4c4c"/><rect x="619.3" y="309.3" width="0.7" height="3" fill="#4c4c4c"/><rect x="623.6" y="309.3" width="0.7" height="3" fill="#4c4c4c"/><rect x="627.6" y="309.3" width="1.2" height="4.2" fill="#555"/><rect x="632.2" y="309.3" width="0.7" height="3" fill="#4c4c4c"/><rect x="636.5" y="309.3" width="0.7" height="3" fill="#4c4c4c"/><rect x="640.8" y="309.3" width="0.7" height="3" fill="#4c4c4c"/><rect x="645.1" y="309.3" width="0.7" height="3" fill="#4c4c4c"/><rect x="649.1" y="309.3" width="1.2" height="4.8" fill="#5c5c5c"/><rect x="653.7" y="309.3" width="0.7" height="3" fill="#4c4c4c"/><rect x="658.0" y="309.3" width="0.7" height="3" fill="#4c4c4c"/><rect x="662.3" y="309.3" width="0.7" height="3" fill="#4c4c4c"/><rect x="666.6" y="309.3" width="0.7" height="3" fill="#4c4c4c"/><rect x="670.6" y="309.3" width="1.2" height="4.2" fill="#555"/><rect x="675.2" y="309.3" width="0.7" height="3" fill="#4c4c4c"/><rect x="679.5" y="309.3" width="0.7" height="3" fill="#4c4c4c"/><rect x="683.8" y="309.3" width="0.7" height="3" fill="#4c4c4c"/><rect x="688.1" y="309.3" width="0.7" height="3" fill="#4c4c4c"/><rect x="692.1" y="309.3" width="1.2" height="4.8" fill="#5c5c5c"/><rect x="696.7" y="309.3" width="0.7" height="3" fill="#4c4c4c"/><rect x="701.0" y="309.3" width="0.7" height="3" fill="#4c4c4c"/><rect x="705.3" y="309.3" width="0.7" height="3" fill="#4c4c4c"/><rect x="709.6" y="309.3" width="0.7" height="3" fill="#4c4c4c"/><rect x="713.6" y="309.3" width="1.2" height="4.2" fill="#555"/><rect x="718.2" y="309.3" width="0.7" height="3" fill="#4c4c4c"/><rect x="722.5" y="309.3" width="0.7" height="3" fill="#4c4c4c"/><rect x="726.8" y="309.3" width="0.7" height="3" fill="#4c4c4c"/><rect x="731.1" y="309.3" width="0.7" height="3" fill="#4c4c4c"/><rect x="735.1" y="309.3" width="1.2" height="4.8" fill="#5c5c5c"/><rect x="739.7" y="309.3" width="0.7" height="3" fill="#4c4c4c"/><rect x="744.0" y="309.3" width="0.7" height="3" fill="#4c4c4c"/><rect x="748.3" y="309.3" width="0.7" height="3" fill="#4c4c4c"/><rect x="752.6" y="309.3" width="0.7" height="3" fill="#4c4c4c"/><rect x="756.6" y="309.3" width="1.2" height="4.2" fill="#555"/><rect x="761.2" y="309.3" width="0.7" height="3" fill="#4c4c4c"/><rect x="765.5" y="309.3" width="0.7" height="3" fill="#4c4c4c"/><rect x="769.8" y="309.3" width="0.7" height="3" fill="#4c4c4c"/><rect x="774.1" y="309.3" width="0.7" height="3" fill="#4c4c4c"/><rect x="778.1" y="309.3" width="1.2" height="4.8" fill="#5c5c5c"/><rect x="782.7" y="309.3" width="0.7" height="3" fill="#4c4c4c"/><rect x="787.0" y="309.3" width="0.7" height="3" fill="#4c4c4c"/><rect x="791.3" y="309.3" width="0.7" height="3" fill="#4c4c4c"/><rect x="795.6" y="309.3" width="0.7" height="3" fill="#4c4c4c"/><rect x="799.6" y="309.3" width="1.2" height="4.2" fill="#555"/><rect x="804.3" y="309.3" width="0.7" height="3" fill="#4c4c4c"/><rect x="808.6" y="309.3" width="0.7" height="3" fill="#4c4c4c"/><rect x="812.9" y="309.3" width="0.7" height="3" fill="#4c4c4c"/><rect x="817.2" y="309.3" width="0.7" height="3" fill="#4c4c4c"/><rect x="821.2" y="309.3" width="1.2" height="4.8" fill="#5c5c5c"/><rect x="825.8" y="309.3" width="0.7" height="3" fill="#4c4c4c"/><rect x="830.1" y="309.3" width="0.7" height="3" fill="#4c4c4c"/><rect x="834.4" y="309.3" width="0.7" height="3" fill="#4c4c4c"/><rect x="838.7" y="309.3" width="0.7" height="3" fill="#4c4c4c"/><rect x="842.7" y="309.3" width="1.2" height="4.2" fill="#555"/><rect x="847.3" y="309.3" width="0.7" height="3" fill="#4c4c4c"/><rect x="851.6" y="309.3" width="0.7" height="3" fill="#4c4c4c"/><rect x="855.9" y="309.3" width="0.7" height="3" fill="#4c4c4c"/><rect x="860.2" y="309.3" width="0.7" height="3" fill="#4c4c4c"/><rect x="864.2" y="309.3" width="1.2" height="4.8" fill="#5c5c5c"/><rect x="868.8" y="309.3" width="0.7" height="3" fill="#4c4c4c"/><rect x="873.1" y="309.3" width="0.7" height="3" fill="#4c4c4c"/><rect x="877.4" y="309.3" width="0.7" height="3" fill="#4c4c4c"/><rect x="881.7" y="309.3" width="0.7" height="3" fill="#4c4c4c"/><rect x="885.7" y="309.3" width="1.2" height="4.2" fill="#555"/><rect x="890.3" y="309.3" width="0.7" height="3" fill="#4c4c4c"/><rect x="894.6" y="309.3" width="0.7" height="3" fill="#4c4c4c"/><rect x="898.9" y="309.3" width="0.7" height="3" fill="#4c4c4c"/><rect x="903.2" y="309.3" width="0.7" height="3" fill="#4c4c4c"/><rect x="907.2" y="309.3" width="1.2" height="4.8" fill="#5c5c5c"/><rect x="911.8" y="309.3" width="0.7" height="3" fill="#4c4c4c"/><rect x="916.1" y="309.3" width="0.7" height="3" fill="#4c4c4c"/><rect x="920.4" y="309.3" width="0.7" height="3" fill="#4c4c4c"/><rect x="924.7" y="309.3" width="0.7" height="3" fill="#4c4c4c"/><rect x="928.7" y="309.3" width="1.2" height="4.2" fill="#555"/><rect x="933.3" y="309.3" width="0.7" height="3" fill="#4c4c4c"/><rect x="937.6" y="309.3" width="0.7" height="3" fill="#4c4c4c"/><rect x="941.9" y="309.3" width="0.7" height="3" fill="#4c4c4c"/><rect x="946.2" y="309.3" width="0.7" height="3" fill="#4c4c4c"/><rect x="950.2" y="309.3" width="1.2" height="4.8" fill="#5c5c5c"/><rect x="954.8" y="309.3" width="0.7" height="3" fill="#4c4c4c"/><rect x="959.1" y="309.3" width="0.7" height="3" fill="#4c4c4c"/><rect x="963.4" y="309.3" width="0.7" height="3" fill="#4c4c4c"/><rect x="967.7" y="309.3" width="0.7" height="3" fill="#4c4c4c"/><rect x="971.7" y="309.3" width="1.2" height="4.2" fill="#555"/><rect x="976.3" y="309.3" width="0.7" height="3" fill="#4c4c4c"/><rect x="980.6" y="309.3" width="0.7" height="3" fill="#4c4c4c"/><rect x="984.9" y="309.3" width="0.7" height="3" fill="#4c4c4c"/><rect x="989.2" y="309.3" width="0.7" height="3" fill="#4c4c4c"/><rect x="993.2" y="309.3" width="1.2" height="4.8" fill="#5c5c5c"/><rect x="997.8" y="309.3" width="0.7" height="3" fill="#4c4c4c"/><rect x="1002.1" y="309.3" width="0.7" height="3" fill="#4c4c4c"/><rect x="1006.4" y="309.3" width="0.7" height="3" fill="#4c4c4c"/><rect x="1010.7" y="309.3" width="0.7" height="3" fill="#4c4c4c"/><rect x="1014.8" y="309.3" width="1.2" height="4.2" fill="#555"/><rect x="1019.4" y="309.3" width="0.7" height="3" fill="#4c4c4c"/><rect x="1023.7" y="309.3" width="0.7" height="3" fill="#4c4c4c"/><rect x="1028.0" y="309.3" width="0.7" height="3" fill="#4c4c4c"/><rect x="1032.3" y="309.3" width="0.7" height="3" fill="#4c4c4c"/><rect x="1036.3" y="309.3" width="1.2" height="4.8" fill="#5c5c5c"/><rect x="1040.9" y="309.3" width="0.7" height="3" fill="#4c4c4c"/><rect x="1045.2" y="309.3" width="0.7" height="3" fill="#4c4c4c"/><rect x="1049.5" y="309.3" width="0.7" height="3" fill="#4c4c4c"/><rect x="1053.8" y="309.3" width="0.7" height="3" fill="#4c4c4c"/><rect x="1057.8" y="309.3" width="1.2" height="4.2" fill="#555"/><rect x="1062.4" y="309.3" width="0.7" height="3" fill="#4c4c4c"/><rect x="1066.7" y="309.3" width="0.7" height="3" fill="#4c4c4c"/><rect x="1071.0" y="309.3" width="0.7" height="3" fill="#4c4c4c"/><rect x="1075.3" y="309.3" width="0.7" height="3" fill="#4c4c4c"/><rect x="1079.3" y="309.3" width="1.2" height="4.8" fill="#5c5c5c"/><rect x="1083.9" y="309.3" width="0.7" height="3" fill="#4c4c4c"/><rect x="1088.2" y="309.3" width="0.7" height="3" fill="#4c4c4c"/><rect x="1092.5" y="309.3" width="0.7" height="3" fill="#4c4c4c"/><rect x="1096.8" y="309.3" width="0.7" height="3" fill="#4c4c4c"/><rect x="1100.8" y="309.3" width="1.2" height="4.2" fill="#555"/><rect x="1105.4" y="309.3" width="0.7" height="3" fill="#4c4c4c"/><rect x="1109.7" y="309.3" width="0.7" height="3" fill="#4c4c4c"/><rect x="1114.0" y="309.3" width="0.7" height="3" fill="#4c4c4c"/><rect x="1118.3" y="309.3" width="0.7" height="3" fill="#4c4c4c"/><rect x="1122.3" y="309.3" width="1.2" height="4.8" fill="#5c5c5c"/><rect x="1126.9" y="309.3" width="0.7" height="3" fill="#4c4c4c"/><rect x="1131.2" y="309.3" width="0.7" height="3" fill="#4c4c4c"/><rect x="1135.5" y="309.3" width="0.7" height="3" fill="#4c4c4c"/><rect x="1139.8" y="309.3" width="0.7" height="3" fill="#4c4c4c"/><rect x="1143.8" y="309.3" width="1.2" height="4.2" fill="#555"/><rect x="1148.4" y="309.3" width="0.7" height="3" fill="#4c4c4c"/><rect x="1152.7" y="309.3" width="0.7" height="3" fill="#4c4c4c"/><rect x="1157.0" y="309.3" width="0.7" height="3" fill="#4c4c4c"/><rect x="1161.3" y="309.3" width="0.7" height="3" fill="#4c4c4c"/><rect x="1165.3" y="309.3" width="1.2" height="4.8" fill="#5c5c5c"/><rect x="1169.9" y="309.3" width="0.7" height="3" fill="#4c4c4c"/><rect x="1174.2" y="309.3" width="0.7" height="3" fill="#4c4c4c"/><rect x="1178.5" y="309.3" width="0.7" height="3" fill="#4c4c4c"/><rect x="1182.8" y="309.3" width="0.7" height="3" fill="#4c4c4c"/><rect x="1186.8" y="309.3" width="1.2" height="4.2" fill="#555"/><rect x="1191.4" y="309.3" width="0.7" height="3" fill="#4c4c4c"/><rect x="1195.7" y="309.3" width="0.7" height="3" fill="#4c4c4c"/><rect x="1200.0" y="309.3" width="0.7" height="3" fill="#4c4c4c"/><rect x="1204.3" y="309.3" width="0.7" height="3" fill="#4c4c4c"/><rect x="1208.3" y="309.3" width="1.2" height="4.8" fill="#5c5c5c"/><rect x="1212.9" y="309.3" width="0.7" height="3" fill="#4c4c4c"/><rect x="1217.2" y="309.3" width="0.7" height="3" fill="#4c4c4c"/><rect x="1221.5" y="309.3" width="0.7" height="3" fill="#4c4c4c"/><rect x="1225.8" y="309.3" width="0.7" height="3" fill="#4c4c4c"/><rect x="1229.9" y="309.3" width="1.2" height="4.2" fill="#555"/><rect x="1234.5" y="309.3" width="0.7" height="3" fill="#4c4c4c"/><rect x="1238.8" y="309.3" width="0.7" height="3" fill="#4c4c4c"/><rect x="1243.1" y="309.3" width="0.7" height="3" fill="#4c4c4c"/><rect x="1247.4" y="309.3" width="0.7" height="3" fill="#4c4c4c"/><rect x="1251.4" y="309.3" width="1.2" height="4.8" fill="#5c5c5c"/><rect x="1256.0" y="309.3" width="0.7" height="3" fill="#4c4c4c"/><rect x="1260.3" y="309.3" width="0.7" height="3" fill="#4c4c4c"/><rect x="1264.6" y="309.3" width="0.7" height="3" fill="#4c4c4c"/><rect x="1268.9" y="309.3" width="0.7" height="3" fill="#4c4c4c"/><rect x="1272.9" y="309.3" width="1.2" height="4.2" fill="#555"/><rect x="1277.5" y="309.3" width="0.7" height="3" fill="#4c4c4c"/><rect x="1281.8" y="309.3" width="0.7" height="3" fill="#4c4c4c"/><rect x="1286.1" y="309.3" width="0.7" height="3" fill="#4c4c4c"/><rect x="1290.4" y="309.3" width="0.7" height="3" fill="#4c4c4c"/><rect x="1294.4" y="309.3" width="1.2" height="4.8" fill="#5c5c5c"/><rect x="1299.0" y="309.3" width="0.7" height="3" fill="#4c4c4c"/><rect x="462.6" y="326.1" width="3" height="0.7" fill="#4c4c4c"/><rect x="462.6" y="330.3" width="3" height="0.7" fill="#4c4c4c"/><rect x="462.6" y="334.1" width="3.8" height="1.2" fill="#555"/><rect x="462.6" y="338.6" width="3" height="0.7" fill="#4c4c4c"/><rect x="462.6" y="342.7" width="3" height="0.7" fill="#4c4c4c"/><rect x="462.6" y="346.8" width="3" height="0.7" fill="#4c4c4c"/><rect x="462.6" y="351.0" width="3" height="0.7" fill="#4c4c4c"/><rect x="462.6" y="354.8" width="5" height="1.2" fill="#5c5c5c"/><rect x="462.6" y="359.2" width="3" height="0.7" fill="#4c4c4c"/><rect x="462.6" y="363.4" width="3" height="0.7" fill="#4c4c4c"/><rect x="462.6" y="367.5" width="3" height="0.7" fill="#4c4c4c"/><rect x="462.6" y="371.6" width="3" height="0.7" fill="#4c4c4c"/><rect x="462.6" y="375.5" width="3.8" height="1.2" fill="#555"/><rect x="462.6" y="379.9" width="3" height="0.7" fill="#4c4c4c"/><rect x="462.6" y="384.1" width="3" height="0.7" fill="#4c4c4c"/><rect x="462.6" y="388.2" width="3" height="0.7" fill="#4c4c4c"/><rect x="462.6" y="392.3" width="3" height="0.7" fill="#4c4c4c"/><rect x="462.6" y="396.2" width="5" height="1.2" fill="#5c5c5c"/><rect x="462.6" y="400.6" width="3" height="0.7" fill="#4c4c4c"/><rect x="462.6" y="404.7" width="3" height="0.7" fill="#4c4c4c"/><rect x="462.6" y="408.9" width="3" height="0.7" fill="#4c4c4c"/><rect x="462.6" y="413.0" width="3" height="0.7" fill="#4c4c4c"/><rect x="462.6" y="416.8" width="3.8" height="1.2" fill="#555"/><rect x="462.6" y="421.3" width="3" height="0.7" fill="#4c4c4c"/><rect x="462.6" y="425.4" width="3" height="0.7" fill="#4c4c4c"/><rect x="462.6" y="429.5" width="3" height="0.7" fill="#4c4c4c"/><rect x="462.6" y="433.7" width="3" height="0.7" fill="#4c4c4c"/><rect x="462.6" y="437.5" width="5" height="1.2" fill="#5c5c5c"/><rect x="462.6" y="442.0" width="3" height="0.7" fill="#4c4c4c"/><rect x="462.6" y="446.1" width="3" height="0.7" fill="#4c4c4c"/><rect x="462.6" y="450.2" width="3" height="0.7" fill="#4c4c4c"/><rect x="462.6" y="454.4" width="3" height="0.7" fill="#4c4c4c"/><rect x="462.6" y="458.2" width="3.8" height="1.2" fill="#555"/><rect x="462.6" y="462.6" width="3" height="0.7" fill="#4c4c4c"/><rect x="462.6" y="466.8" width="3" height="0.7" fill="#4c4c4c"/><rect x="462.6" y="470.9" width="3" height="0.7" fill="#4c4c4c"/><rect x="462.6" y="475.0" width="3" height="0.7" fill="#4c4c4c"/><rect x="462.6" y="478.9" width="5" height="1.2" fill="#5c5c5c"/><rect x="462.6" y="483.3" width="3" height="0.7" fill="#4c4c4c"/><rect x="462.6" y="487.5" width="3" height="0.7" fill="#4c4c4c"/><rect x="462.6" y="491.6" width="3" height="0.7" fill="#4c4c4c"/><rect x="462.6" y="495.7" width="3" height="0.7" fill="#4c4c4c"/><rect x="462.6" y="499.6" width="3.8" height="1.2" fill="#555"/><rect x="462.6" y="504.0" width="3" height="0.7" fill="#4c4c4c"/><rect x="462.6" y="508.1" width="3" height="0.7" fill="#4c4c4c"/><rect x="462.6" y="512.3" width="3" height="0.7" fill="#4c4c4c"/><rect x="462.6" y="516.4" width="3" height="0.7" fill="#4c4c4c"/><rect x="462.6" y="520.2" width="5" height="1.2" fill="#5c5c5c"/><rect x="462.6" y="524.7" width="3" height="0.7" fill="#4c4c4c"/><rect x="462.6" y="528.8" width="3" height="0.7" fill="#4c4c4c"/><rect x="462.6" y="532.9" width="3" height="0.7" fill="#4c4c4c"/><rect x="462.6" y="537.1" width="3" height="0.7" fill="#4c4c4c"/><rect x="462.6" y="540.9" width="3.8" height="1.2" fill="#555"/><rect x="462.6" y="545.4" width="3" height="0.7" fill="#4c4c4c"/><rect x="462.6" y="549.5" width="3" height="0.7" fill="#4c4c4c"/><rect x="462.6" y="553.6" width="3" height="0.7" fill="#4c4c4c"/><rect x="462.6" y="557.8" width="3" height="0.7" fill="#4c4c4c"/><rect x="462.6" y="561.6" width="5" height="1.2" fill="#5c5c5c"/><rect x="462.6" y="566.0" width="3" height="0.7" fill="#4c4c4c"/><rect x="462.6" y="570.2" width="3" height="0.7" fill="#4c4c4c"/><rect x="462.6" y="574.3" width="3" height="0.7" fill="#4c4c4c"/><rect x="462.6" y="578.4" width="3" height="0.7" fill="#4c4c4c"/><rect x="462.6" y="582.3" width="3.8" height="1.2" fill="#555"/><rect x="462.6" y="586.7" width="3" height="0.7" fill="#4c4c4c"/><rect x="462.6" y="590.9" width="3" height="0.7" fill="#4c4c4c"/><rect x="462.6" y="595.0" width="3" height="0.7" fill="#4c4c4c"/><rect x="462.6" y="599.1" width="3" height="0.7" fill="#4c4c4c"/><rect x="462.6" y="603.0" width="5" height="1.2" fill="#5c5c5c"/><rect x="462.6" y="607.4" width="3" height="0.7" fill="#4c4c4c"/><rect x="462.6" y="611.5" width="3" height="0.7" fill="#4c4c4c"/><rect x="462.6" y="615.7" width="3" height="0.7" fill="#4c4c4c"/><rect x="462.6" y="619.8" width="3" height="0.7" fill="#4c4c4c"/><rect x="462.6" y="623.6" width="3.8" height="1.2" fill="#555"/><rect x="462.6" y="628.1" width="3" height="0.7" fill="#4c4c4c"/><rect x="462.6" y="632.2" width="3" height="0.7" fill="#4c4c4c"/><rect x="462.6" y="636.3" width="3" height="0.7" fill="#4c4c4c"/><rect x="462.6" y="640.5" width="3" height="0.7" fill="#4c4c4c"/><rect x="462.6" y="644.3" width="5" height="1.2" fill="#5c5c5c"/><rect x="462.6" y="648.8" width="3" height="0.7" fill="#4c4c4c"/><rect x="462.6" y="652.9" width="3" height="0.7" fill="#4c4c4c"/><rect x="462.6" y="657.0" width="3" height="0.7" fill="#4c4c4c"/><rect x="462.6" y="661.2" width="3" height="0.7" fill="#4c4c4c"/><rect x="462.6" y="665.0" width="3.8" height="1.2" fill="#555"/><rect x="462.6" y="669.4" width="3" height="0.7" fill="#4c4c4c"/><rect x="462.6" y="673.6" width="3" height="0.7" fill="#4c4c4c"/><rect x="462.6" y="677.7" width="3" height="0.7" fill="#4c4c4c"/><rect x="462.6" y="681.8" width="3" height="0.7" fill="#4c4c4c"/><rect x="462.6" y="685.7" width="5" height="1.2" fill="#5c5c5c"/><rect x="462.6" y="690.1" width="3" height="0.7" fill="#4c4c4c"/><rect x="462.6" y="694.3" width="3" height="0.7" fill="#4c4c4c"/><rect x="462.6" y="698.4" width="3" height="0.7" fill="#4c4c4c"/><rect x="462.6" y="702.5" width="3" height="0.7" fill="#4c4c4c"/><rect x="462.6" y="706.4" width="3.8" height="1.2" fill="#555"/><rect x="462.6" y="710.8" width="3" height="0.7" fill="#4c4c4c"/><rect x="462.6" y="714.9" width="3" height="0.7" fill="#4c4c4c"/><rect x="462.6" y="719.1" width="3" height="0.7" fill="#4c4c4c"/><rect x="462.6" y="723.2" width="3" height="0.7" fill="#4c4c4c"/><rect x="462.6" y="727.0" width="5" height="1.2" fill="#5c5c5c"/><rect x="462.6" y="731.5" width="3" height="0.7" fill="#4c4c4c"/><rect x="462.6" y="735.6" width="3" height="0.7" fill="#4c4c4c"/><rect x="462.6" y="739.7" width="3" height="0.7" fill="#4c4c4c"/><rect x="462.6" y="743.9" width="3" height="0.7" fill="#4c4c4c"/><rect x="462.6" y="747.7" width="3.8" height="1.2" fill="#555"/><rect x="462.6" y="752.2" width="3" height="0.7" fill="#4c4c4c"/><rect x="462.6" y="756.3" width="3" height="0.7" fill="#4c4c4c"/><rect x="462.6" y="760.4" width="3" height="0.7" fill="#4c4c4c"/><rect x="462.6" y="764.6" width="3" height="0.7" fill="#4c4c4c"/><rect x="462.6" y="768.4" width="5" height="1.2" fill="#5c5c5c"/><rect x="462.6" y="772.8" width="3" height="0.7" fill="#4c4c4c"/><rect x="462.6" y="777.0" width="3" height="0.7" fill="#4c4c4c"/><rect x="462.6" y="781.1" width="3" height="0.7" fill="#4c4c4c"/><rect x="462.6" y="785.2" width="3" height="0.7" fill="#4c4c4c"/><rect x="462.6" y="789.1" width="3.8" height="1.2" fill="#555"/><rect x="462.6" y="793.5" width="3" height="0.7" fill="#4c4c4c"/><rect x="462.6" y="797.7" width="3" height="0.7" fill="#4c4c4c"/><rect x="462.6" y="801.8" width="3" height="0.7" fill="#4c4c4c"/><rect x="462.6" y="805.9" width="3" height="0.7" fill="#4c4c4c"/><rect x="462.6" y="809.8" width="5" height="1.2" fill="#5c5c5c"/><rect x="462.6" y="814.2" width="3" height="0.7" fill="#4c4c4c"/><rect x="462.6" y="818.3" width="3" height="0.7" fill="#4c4c4c"/><rect x="462.6" y="822.5" width="3" height="0.7" fill="#4c4c4c"/><rect x="462.6" y="826.6" width="3" height="0.7" fill="#4c4c4c"/><rect x="462.6" y="830.4" width="3.8" height="1.2" fill="#555"/><rect x="462.6" y="834.9" width="3" height="0.7" fill="#4c4c4c"/><rect x="462.6" y="839.0" width="3" height="0.7" fill="#4c4c4c"/><rect x="462.6" y="843.1" width="3" height="0.7" fill="#4c4c4c"/><rect x="462.6" y="847.3" width="3" height="0.7" fill="#4c4c4c"/><rect x="477.2" y="323" width="0.7" height="526" fill="#9a9a9a"/><g font-family="Liberation Sans, sans-serif" font-weight="bold" font-size="6.8" fill="#e6e6e6" text-anchor="middle"><text x="520.1" y="320.2" textLength="9.8" lengthAdjust="spacingAndGlyphs">100</text><text x="563.1" y="320.2" textLength="9.8" lengthAdjust="spacingAndGlyphs">200</text><text x="606.2" y="320.2" textLength="9.8" lengthAdjust="spacingAndGlyphs">300</text><text x="649.2" y="320.2" textLength="9.8" lengthAdjust="spacingAndGlyphs">400</text><text x="692.2" y="320.2" textLength="9.8" lengthAdjust="spacingAndGlyphs">500</text><text x="735.2" y="320.2" textLength="9.8" lengthAdjust="spacingAndGlyphs">600</text><text x="778.2" y="320.2" textLength="9.8" lengthAdjust="spacingAndGlyphs">700</text><text x="821.3" y="320.2" textLength="9.8" lengthAdjust="spacingAndGlyphs">800</text><text x="864.3" y="320.2" textLength="9.8" lengthAdjust="spacingAndGlyphs">900</text><text x="907.3" y="320.2" textLength="13.0" lengthAdjust="spacingAndGlyphs">1000</text><text x="950.3" y="320.2" textLength="13.0" lengthAdjust="spacingAndGlyphs">1100</text><text x="993.3" y="320.2" textLength="13.0" lengthAdjust="spacingAndGlyphs">1200</text><text x="1036.4" y="320.2" textLength="13.0" lengthAdjust="spacingAndGlyphs">1300</text><text x="1079.4" y="320.2" textLength="13.0" lengthAdjust="spacingAndGlyphs">1400</text><text x="1122.4" y="320.2" textLength="13.0" lengthAdjust="spacingAndGlyphs">1500</text><text x="1165.4" y="320.2" textLength="13.0" lengthAdjust="spacingAndGlyphs">1600</text><text x="1208.4" y="320.2" textLength="13.0" lengthAdjust="spacingAndGlyphs">1700</text><text x="1251.5" y="320.2" textLength="13.0" lengthAdjust="spacingAndGlyphs">1800</text><text x="1294.5" y="320.2" textLength="13.0" lengthAdjust="spacingAndGlyphs">1900</text><text transform="translate(474.2,355.4) rotate(-90)" textLength="3.2" lengthAdjust="spacingAndGlyphs">0</text><text transform="translate(474.2,396.8) rotate(-90)" textLength="9.8" lengthAdjust="spacingAndGlyphs">100</text><text transform="translate(474.2,438.1) rotate(-90)" textLength="9.8" lengthAdjust="spacingAndGlyphs">200</text><text transform="translate(474.2,479.5) rotate(-90)" textLength="9.8" lengthAdjust="spacingAndGlyphs">300</text><text transform="translate(474.2,520.8) rotate(-90)" textLength="9.8" lengthAdjust="spacingAndGlyphs">400</text><text transform="translate(474.2,562.2) rotate(-90)" textLength="9.8" lengthAdjust="spacingAndGlyphs">500</text><text transform="translate(474.2,603.6) rotate(-90)" textLength="9.8" lengthAdjust="spacingAndGlyphs">600</text><text transform="translate(474.2,644.9) rotate(-90)" textLength="9.8" lengthAdjust="spacingAndGlyphs">700</text><text transform="translate(474.2,686.3) rotate(-90)" textLength="9.8" lengthAdjust="spacingAndGlyphs">800</text><text transform="translate(474.2,727.6) rotate(-90)" textLength="9.8" lengthAdjust="spacingAndGlyphs">900</text><text transform="translate(474.2,769.0) rotate(-90)" textLength="13.0" lengthAdjust="spacingAndGlyphs">1000</text><text transform="translate(474.2,810.4) rotate(-90)" textLength="13.0" lengthAdjust="spacingAndGlyphs">1100</text></g></svg>
<svg style="left:0;top:0" width="1917" height="1024"><defs><clipPath id="mclip"><rect x="477.6" y="354.7" width="826.0" height="446.7"/></clipPath><filter id="b2" x="-10%" y="-10%" width="120%" height="120%"><feGaussianBlur stdDeviation="2.2"/></filter><filter id="b4" x="-20%" y="-20%" width="140%" height="140%"><feGaussianBlur stdDeviation="7"/></filter><filter id="b1" x="-10%" y="-10%" width="120%" height="120%"><feGaussianBlur stdDeviation="0.8"/></filter>
<clipPath id="cclip"><path d="M885.0 667.1 L889.5 666.3 L894.0 666.0 L898.0 668.1 L901.3 671.4 L905.2 673.8 L908.7 675.0 L911.5 677.5 L914.8 679.0 L918.1 680.4 L920.9 682.8 L924.3 685.1 L928.1 686.7 L931.1 689.5 L934.4 691.8 L938.6 692.9 L942.5 694.6 L946.3 696.7 L950.1 698.5 L954.0 699.3 L958.0 698.5 L962.0 698.9 L965.9 699.7 L969.8 699.6 L973.8 699.8 L977.7 698.9 L981.6 698.5 L984.0 703.0 L986.1 707.5 L990.0 704.1 L992.8 699.7 L997.1 697.8 L1001.9 698.0 L1006.3 696.3 L1010.2 697.5 L1014.0 698.8 L1017.5 700.8 L1020.3 704.2 L1022.3 708.1 L1024.3 712.0 L1027.9 712.5 L1031.5 711.5 L1035.0 712.1 L1038.6 712.2 L1042.2 712.0 L1045.5 710.1 L1049.0 708.7 L1052.0 706.3 L1055.7 705.3 L1058.7 702.4 L1062.2 700.4 L1066.0 698.8 L1069.2 696.3 L1073.7 696.6 L1078.2 696.7 L1082.7 697.4 L1086.0 699.2 L1089.4 700.8 L1091.0 696.3 L1092.8 691.8 L1096.9 693.8 L1100.6 696.3 L1102.1 700.2 L1104.1 703.9 L1106.2 707.5 L1107.0 711.2 L1106.9 715.0 L1107.4 718.8 L1105.8 722.5 L1103.8 726.0 L1102.9 730.0 L1099.6 732.7 L1097.1 736.2 L1093.9 739.0 L1092.8 743.4 L1093.8 748.0 L1092.8 752.4 L1096.4 752.0 L1100.1 752.3 L1103.7 751.1 L1107.4 751.3 L1108.7 754.7 L1110.8 757.8 L1111.2 761.5 L1112.4 765.0 L1114.1 768.2 L1115.5 772.0 L1116.5 775.9 L1118.6 779.4 L1122.5 780.6 L1126.0 782.7 L1129.8 783.9 L1134.3 785.2 L1138.8 786.1 L1144.4 787.3 L1144.2 783.1 L1143.6 779.0 L1143.3 774.9 L1147.3 773.9 L1151.1 772.6 L1154.5 770.4 L1159.0 769.6 L1163.6 769.2 L1168.0 768.2 L1171.8 766.4 L1176.0 766.2 L1179.9 765.0 L1183.7 763.7 L1187.5 762.7 L1190.5 760.3 L1193.7 762.2 L1197.4 762.8 L1200.7 764.4 L1204.0 765.9 L1205.2 769.8 L1207.7 773.1 L1208.5 777.2 L1211.8 778.2 L1215.4 778.9 L1218.8 779.9 L1221.9 781.6 L1225.7 781.6 L1229.0 783.4 L1232.8 783.1 L1236.4 783.9 L1239.9 785.0 L1243.4 787.7 L1246.6 790.6 L1247.8 795.3 L1250.0 799.6 L1251.3 796.3 L1253.7 793.6 L1255.6 790.6 L1259.4 789.6 L1263.3 789.0 L1266.9 787.3 L1270.4 786.0 L1273.8 784.4 L1276.8 781.9 L1280.3 780.5 L1283.6 778.4 L1287.0 776.4 L1290.7 775.2 L1293.8 772.7 L1297.5 771.6 L1300.3 768.8 L1303.7 767.1 L1307.3 765.9 L1306.9 762.4 L1306.9 758.9 L1307.3 755.4 L1307.4 751.9 L1306.9 748.4 L1306.5 744.9 L1307.2 741.4 L1307.1 737.9 L1307.4 734.4 L1308.0 730.9 L1307.6 727.4 L1307.3 723.9 L1307.5 720.3 L1307.6 716.8 L1306.6 713.3 L1307.9 709.8 L1307.7 706.3 L1307.9 702.8 L1307.8 699.3 L1307.1 695.8 L1307.1 692.3 L1306.6 688.8 L1307.5 685.3 L1306.6 681.8 L1306.6 678.3 L1306.8 674.8 L1306.7 671.3 L1307.0 667.8 L1306.6 664.2 L1306.5 660.7 L1306.7 657.2 L1306.6 653.7 L1307.1 650.2 L1306.5 646.7 L1307.9 643.2 L1307.5 639.7 L1306.7 636.2 L1306.9 632.7 L1307.0 629.2 L1307.1 625.7 L1306.7 622.2 L1307.8 618.7 L1308.1 615.2 L1307.2 611.7 L1307.3 608.1 L1306.6 604.6 L1306.6 601.1 L1307.0 597.6 L1306.9 594.1 L1307.8 590.6 L1306.7 587.1 L1306.5 583.6 L1308.0 580.1 L1307.3 576.6 L1306.7 573.1 L1307.4 569.6 L1306.5 566.1 L1307.3 562.6 L1308.0 559.1 L1307.9 555.6 L1307.6 552.0 L1306.9 548.5 L1307.1 545.0 L1306.7 541.5 L1307.7 538.0 L1307.3 534.5 L1307.7 531.0 L1307.0 527.5 L1306.8 524.0 L1307.8 520.5 L1308.1 517.0 L1307.8 513.5 L1307.8 510.0 L1307.8 506.5 L1307.7 503.0 L1306.8 499.5 L1307.3 495.9 L1307.1 492.4 L1306.5 488.9 L1306.5 485.4 L1306.9 481.9 L1306.9 478.4 L1307.6 474.9 L1308.0 471.4 L1307.2 467.9 L1308.0 464.4 L1308.1 460.9 L1308.0 457.4 L1307.1 453.9 L1306.8 450.4 L1306.8 446.9 L1306.8 443.4 L1307.3 439.8 L1303.8 442.5 L1299.7 444.2 L1296.1 446.6 L1292.3 445.9 L1288.6 446.0 L1284.8 446.6 L1280.3 445.9 L1275.9 444.8 L1271.3 444.3 L1269.0 447.9 L1268.2 452.1 L1265.7 455.6 L1267.4 459.4 L1268.9 463.4 L1271.3 466.8 L1267.7 468.7 L1264.4 471.0 L1261.3 473.6 L1257.9 475.8 L1255.0 477.8 L1251.4 478.5 L1248.6 480.7 L1245.1 481.6 L1242.1 483.6 L1238.4 483.6 L1235.0 485.2 L1231.4 485.8 L1227.6 485.6 L1224.2 487.0 L1220.2 487.5 L1216.4 489.2 L1212.5 490.1 L1208.5 490.4 L1205.3 492.3 L1201.5 492.6 L1198.2 494.1 L1195.0 496.0 L1191.8 498.0 L1188.0 498.5 L1184.9 500.5 L1179.2 497.1 L1175.8 495.7 L1172.1 495.5 L1168.4 495.3 L1164.9 494.4 L1161.3 493.8 L1157.2 492.9 L1153.2 491.7 L1149.7 488.8 L1145.6 488.1 L1142.3 486.8 L1138.8 485.9 L1135.7 484.1 L1132.1 483.6 L1127.6 484.1 L1123.0 483.8 L1118.6 484.8 L1114.2 483.9 L1109.6 484.5 L1105.1 483.6 L1101.5 483.6 L1097.9 483.1 L1094.3 482.7 L1090.8 481.7 L1087.2 481.4 L1082.7 482.3 L1078.2 482.5 L1075.8 479.2 L1073.2 476.1 L1072.0 472.1 L1069.2 469.0 L1067.8 465.4 L1066.9 461.6 L1065.8 457.8 L1062.5 455.8 L1059.4 453.5 L1055.7 452.2 L1052.3 450.6 L1049.3 448.2 L1045.6 447.1 L1042.2 445.5 L1038.6 445.0 L1035.0 444.5 L1031.4 444.9 L1027.8 443.8 L1024.3 443.2 L1019.7 443.0 L1015.1 442.5 L1010.8 441.0 L1009.5 436.9 L1007.4 433.1 L1008.4 429.2 L1010.4 425.6 L1011.9 421.9 L1011.1 417.3 L1009.7 412.9 L1007.5 409.5 L1004.9 406.3 L1002.9 402.8 L1000.3 400.1 L997.7 397.5 L995.1 394.9 L991.6 392.3 L987.3 391.0 L983.8 388.2 L980.1 385.9 L976.1 384.0 L972.6 381.4 L971.7 377.0 L971.5 372.5 L965.9 372.5 L962.3 373.8 L959.1 375.8 L955.7 379.8 L952.4 383.7 L948.7 387.0 L945.2 390.4 L944.6 394.3 L944.2 398.3 L944.8 402.2 L944.5 406.2 L941.0 408.8 L937.8 411.8 L933.7 411.0 L929.6 410.3 L925.4 409.5 L921.0 408.5 L916.4 408.1 L912.0 407.3 L910.4 410.6 L909.0 414.0 L907.5 417.4 L905.7 421.1 L904.9 425.2 L903.5 429.0 L903.0 433.1 L904.0 437.3 L906.3 441.0 L902.4 440.8 L898.5 439.8 L894.0 440.5 L889.4 440.6 L885.0 442.1 L890.0 439.8 L885.9 441.0 L882.4 443.8 L878.5 445.5 L874.3 446.6 L876.6 449.5 L879.4 452.2 L881.1 455.6 L882.1 459.5 L883.1 463.5 L882.8 467.7 L883.3 471.8 L884.4 475.8 L882.3 478.6 L881.8 482.3 L879.4 485.1 L877.9 488.3 L876.6 491.5 L873.5 493.9 L869.5 494.7 L866.1 496.5 L863.3 499.4 L859.4 500.2 L856.3 502.7 L852.8 504.7 L849.2 506.4 L845.2 507.4 L841.7 509.5 L838.4 511.7 L835.7 514.4 L832.4 516.3 L829.4 518.5 L824.3 517.9 L819.3 517.3 L815.4 518.7 L811.4 519.6 L808.0 522.6 L804.1 525.1 L800.2 527.4 L798.0 530.3 L797.1 533.8 L794.6 536.4 L795.6 540.2 L796.9 543.9 L797.9 547.7 L802.6 548.0 L806.9 549.9 L808.6 553.2 L809.6 556.7 L811.1 560.0 L812.5 563.4 L810.2 566.7 L806.9 569.0 L809.5 571.5 L812.7 573.1 L815.9 574.6 L820.0 578.0 L824.9 580.0 L824.9 584.0 L828.5 585.1 L831.8 587.0 L835.3 588.4 L838.4 590.7 L842.0 592.6 L846.0 593.4 L849.6 595.2 L850.9 598.8 L851.2 602.7 L851.9 606.4 L856.0 609.3 L860.8 610.9 L858.7 614.1 L857.5 617.7 L860.4 620.4 L863.1 623.3 L865.3 626.7 L864.1 631.1 L864.2 635.6 L859.7 635.5 L855.2 635.6 L855.5 640.2 L856.3 644.6 L859.2 648.0 L861.4 651.8 L863.1 655.9 L866.7 657.6 L870.6 658.7 L874.3 660.4 L877.5 662.1 L879.5 665.4 L882.6 667.3 L885.5 669.3 L890.0 671.6Z"/></clipPath></defs>
<g clip-path="url(#mclip)">
<rect x="477.6" y="354.7" width="826.0" height="446.7" fill="#d3ebc9"/>
<g filter="url(#b2)">
<path d="M476.7 575.0 L503.7 575.0 L526.2 597.5 L544.1 619.9 L564.3 649.1 L577.8 676.1 L595.8 700.8 L604.8 714.3 L586.8 718.8 L568.8 709.8 L550.9 700.8 L532.9 687.3 L514.9 664.8 L497.0 637.9 L483.5 610.9 L476.7 597.5Z" fill="#cae5bc" />
<path d="M627.2 575.0 L806.9 575.0 L820.4 602.0 L806.9 633.4 L780.0 642.4 L750.8 649.1 L728.3 649.1 L705.8 651.4 L685.6 644.6 L663.2 642.4 L640.7 637.9 L631.7 608.7Z" fill="#cae5bc" />
<path d="M705.8 651.4 L750.8 649.1 L762.0 676.1 L746.3 680.6 L739.5 700.8 L741.8 718.8 L748.5 736.7 L739.5 754.7 L719.3 745.7 L705.8 732.2 L701.4 714.3 L703.6 691.8 L708.1 669.3Z" fill="#cbe6bd" />
<path d="M864.8 664.8 L885.0 668.2 L905.2 675.0 L920.9 683.9 L934.4 692.9 L950.1 699.7 L965.9 700.8 L981.6 699.7 L986.1 708.6 L992.8 700.8 L1006.3 697.4 L1017.5 701.9 L1024.3 713.1 L1042.2 713.1 L1055.7 706.4 L1069.2 697.4 L1082.7 698.5 L1092.8 692.9 L1106.2 707.5 L1107.4 718.8 L1102.9 730.0 L1093.9 739.0 L1092.8 752.4 L1107.4 751.3 L1118.6 779.4 L1138.8 786.1 L1145.6 800.7 L1028.8 800.7 L1024.3 786.1 L1019.8 777.2 L1028.8 754.7 L1019.8 741.2 L1010.8 732.2 L1019.8 723.2 L1001.8 718.8 L979.3 716.5 L959.1 712.0 L938.9 706.4 L918.7 697.4 L900.7 687.3 L885.0 679.4 L864.8 673.8Z" fill="#bedcac" />
<path d="M840.1 680.6 L885.0 680.6 L900.7 688.4 L918.7 698.5 L938.9 707.5 L959.1 713.1 L979.3 717.6 L1001.8 719.9 L1017.5 724.4 L1008.5 733.4 L1017.5 742.3 L1026.5 754.7 L1019.8 777.2 L1001.8 778.3 L986.1 780.5 L970.4 783.9 L961.4 790.6 L959.1 801.9 L840.1 801.9Z" fill="#d8edcb" />
<path d="M717.1 484.8 L784.5 475.8 L874.3 466.8 L885.5 484.8 L856.3 502.7 L829.4 518.5 L800.2 527.4 L794.6 536.4 L784.5 552.2 L762.0 574.6 L717.1 574.6 L694.6 552.2 L712.6 520.7Z" fill="#cae5bc" />
<path d="M974.8 350.0 L1305.0 350.0 L1305.0 417.4 L1266.9 424.1 L1221.9 417.4 L1177.0 424.1 L1132.1 417.4 L1087.2 417.4 L1046.7 412.9 L1019.8 424.1 L1010.8 412.9 L995.1 394.9 L983.8 388.2 L972.6 381.4 L971.5 372.5Z" fill="#d3eac7" />
<path d="M862.5 350.0 L959.1 350.0 L965.9 372.5 L952.4 383.7 L945.2 390.4 L944.5 406.2 L925.4 409.5 L912.0 407.3 L903.0 433.1 L885.0 439.8 L867.0 417.4Z" fill="#cfe8c3" filter="url(#b4)"/>
<path d="M1204.0 359.0 L1235.4 356.7 L1244.4 379.2 L1221.9 394.9 L1206.2 381.4Z" fill="#c6e2b8" />
</g>
<g filter="url(#b2)">
<path d="M521.7 588.5 L544.1 584.0 L566.6 590.7 L586.8 588.5 L609.3 602.0 L627.2 619.9 L640.7 637.9 L663.2 642.4 L685.6 644.6 L705.8 651.4 L708.1 669.3 L703.6 691.8 L701.4 714.3 L705.8 732.2 L694.6 733.4 L676.6 734.5 L658.7 735.6 L640.7 736.7 L622.7 733.4 L604.8 732.2 L591.3 727.7 L584.6 718.8 L604.8 714.3 L595.8 700.8 L577.8 676.1 L564.3 649.1 L544.1 619.9 L526.2 597.5Z" fill="#f5f2ef" />
<path d="M476.7 700.8 L481.2 705.3 L488.0 718.8 L497.0 730.0 L501.4 721.0 L510.4 732.2 L517.2 745.7 L528.4 752.4 L544.1 751.3 L559.8 745.7 L568.8 736.7 L575.6 732.2 L580.1 736.7 L586.8 748.0 L595.8 756.9 L613.8 765.9 L622.7 774.9 L616.0 788.4 L609.3 800.7 L476.7 800.7Z" fill="#f5f2ef" />
<path d="M746.3 680.6 L768.7 673.8 L784.5 682.8 L789.0 700.8 L780.0 718.8 L762.0 732.2 L748.5 736.7 L741.8 718.8 L739.5 700.8Z" fill="#eef2e6" />
<path d="M575.6 448.8 L595.8 446.6 L609.3 435.4 L631.7 428.6 L645.2 439.8 L640.7 453.3 L654.2 462.3 L645.2 475.8 L627.2 478.0 L613.8 469.0 L604.8 478.0 L595.8 493.8 L591.3 520.7 L577.8 507.2 L575.6 484.8Z" fill="#f5f2ef" />
<path d="M514.9 442.1 L537.4 436.5 L559.8 437.6 L568.8 444.3 L555.4 448.8 L526.2 452.2 L514.9 448.8Z" fill="#f5f2ef" />
<path d="M544.1 527.4 L559.8 536.4 L577.8 540.9 L595.8 529.7 L613.8 525.2 L631.7 529.7 L649.7 520.7 L667.7 529.7 L672.2 540.9 L660.9 556.6 L640.7 565.6 L627.2 552.2 L604.8 556.6 L591.3 547.7 L571.1 552.2 L555.4 552.2 L546.4 540.9Z" fill="#f5f2ef" />
<path d="M663.2 439.8 L685.6 435.4 L694.6 444.3 L672.2 457.8 L654.2 462.3Z" fill="#e6f0de" />
<path d="M1010.8 426.4 L1028.8 424.1 L1046.7 419.6 L1064.7 424.1 L1082.7 426.4 L1100.6 433.1 L1118.6 439.8 L1143.3 439.8 L1165.8 442.1 L1188.2 444.3 L1210.7 446.6 L1235.4 446.6 L1253.4 448.8 L1266.9 455.6 L1271.3 466.8 L1257.9 475.8 L1242.1 483.6 L1224.2 487.0 L1208.5 490.4 L1195.0 496.0 L1184.9 500.5 L1179.2 497.1 L1161.3 493.8 L1145.6 488.1 L1132.1 483.6 L1118.6 484.8 L1105.1 483.6 L1087.2 481.4 L1078.2 482.5 L1069.2 469.0 L1065.8 457.8 L1055.7 452.2 L1042.2 445.5 L1024.3 443.2 L1010.8 441.0 L1007.4 433.1Z" fill="#f5f2ef" />
</g>
<g filter="url(#b2)">
<path d="M820.4 599.7 L849.6 604.2 L865.3 626.7 L855.2 642.4 L833.9 635.6 L820.4 619.9Z" fill="#e9ece6" />
<path d="M780.0 540.9 L794.6 537.6 L800.2 552.2 L811.4 565.6 L806.9 576.9 L784.5 574.6 L775.5 558.9Z" fill="#e6ece2" />
<path d="M750.8 493.8 L806.9 484.8 L851.9 475.8 L874.3 484.8 L851.9 498.2 L806.9 507.2 L762.0 511.7Z" fill="#d6ebcc" />
<path d="M483.5 628.9 L505.9 649.1 L528.4 680.6 L544.1 696.3 L537.4 700.8 L514.9 680.6 L494.7 653.6 L481.2 637.9Z" fill="#d9ecce" />
<path d="M663.2 588.5 L717.1 584.0 L762.0 595.2 L750.8 619.9 L705.8 626.7 L672.2 615.4Z" fill="#d8ebcd" />
<path d="M780.0 529.7 L802.4 538.7 L811.4 565.6 L829.4 583.6 L851.9 601.6 L860.8 624.0 L847.4 637.5 L820.4 619.5 L793.5 592.6 L775.5 561.1Z" fill="#eaede6" />
</g>
<g filter="url(#b1)">
<path d="M470.0 423.0 L491.3 422.3 L503.7 414.0 L517.2 409.5 L535.1 410.6 L543.0 417.4 L541.4 427.5 L530.6 436.5 L518.3 441.0 L512.7 448.8 L507.1 455.6 L518.3 458.9 L526.2 466.8 L530.6 478.0 L535.1 490.4 L544.1 492.6 L554.2 496.0 L561.0 505.0 L558.7 512.8 L546.4 516.2 L538.5 517.3 L537.4 527.4 L544.1 538.7 L549.1 552.2 L551.3 565.6 L547.5 574.6 L535.1 577.3 L518.3 575.7 L503.7 569.0 L492.5 557.8 L487.5 545.4 L489.1 531.9 L498.1 521.8 L494.7 508.4 L485.7 497.1 L470.0 490.4Z" fill="#9cddfb" />
<path d="M491.3 475.8 L510.4 471.3 L523.9 489.3 L526.2 520.7 L514.9 552.2 L499.2 547.7 L492.5 520.7 L501.4 502.7Z" fill="#8fd6fa" />
<path d="M793.5 430.9 L802.4 417.4 L815.9 414.0 L833.9 416.3 L851.9 417.4 L864.2 415.1 L863.1 419.6 L849.6 423.0 L829.4 421.4 L811.4 420.8 L802.4 426.4 L799.1 439.8 L802.4 446.6 L796.8 444.3 L793.5 436.5Z" fill="#9cddfb" />
<path d="M827.1 485.9 L838.4 483.0 L851.9 483.6 L849.6 489.3 L838.4 492.0 L829.4 490.4Z" fill="#9cddfb" />
<path d="M604.8 437.6 L608.1 437.6 L607.5 453.3 L604.8 454.4Z" fill="#9cddfb" />
<path d="M622.7 417.4 L643.0 416.3 L640.7 424.1 L627.2 425.2Z" fill="#9cddfb" />
<path d="M589.0 491.5 L595.8 489.3 L598.5 498.2 L592.4 502.7 L588.6 498.2Z" fill="#9cddfb" />
<path d="M594.7 471.3 L600.3 471.3 L600.7 476.9 L595.3 476.9Z" fill="#9cddfb" />
<path d="M699.1 509.5 L723.8 508.4 L726.1 516.2 L712.6 514.0 L700.2 513.5Z" fill="#9cddfb" />
<path d="M470.0 680.6 L485.7 682.8 L497.0 691.8 L508.2 700.8 L521.7 707.5 L537.4 712.0 L555.4 714.3 L568.8 718.8 L577.8 715.4 L584.6 718.8 L580.1 725.5 L575.6 732.2 L568.8 736.7 L559.8 745.7 L544.1 751.3 L528.4 752.4 L517.2 745.7 L510.4 732.2 L501.4 721.0 L497.0 730.0 L488.0 718.8 L481.2 705.3 L470.0 700.8Z" fill="#9cddfb" />
<path d="M580.1 727.7 L591.3 727.7 L604.8 732.2 L622.7 733.4 L640.7 736.7 L658.7 735.6 L676.6 734.5 L694.6 733.4 L705.8 732.2 L710.3 739.0 L719.3 745.7 L730.6 752.4 L739.5 754.7 L753.0 761.4 L757.5 768.2 L746.3 772.7 L739.5 777.2 L750.8 781.6 L768.7 783.9 L782.2 777.2 L784.5 790.6 L777.7 801.9 L609.3 801.9 L616.0 788.4 L622.7 774.9 L613.8 765.9 L595.8 756.9 L586.8 748.0 L580.1 736.7Z" fill="#9cddfb" />
<path d="M595.8 741.2 L627.2 741.2 L672.2 745.7 L712.6 754.7 L735.0 777.2 L762.0 801.9 L627.2 801.9 L631.7 777.2 L613.8 759.2Z" fill="#8cd5fb" />
<path d="M568.8 595.2 L582.3 596.3 L580.1 606.4 L571.1 608.7Z" fill="#9cddfb" />
<path d="M959.1 801.9 L961.4 790.6 L970.4 783.9 L986.1 780.5 L1001.8 778.3 L1013.0 774.9 L1019.8 777.2 L1024.3 786.1 L1028.8 801.9Z" fill="#9cddfb" />
<path d="M1205.1 801.9 L1208.5 783.9 L1221.9 782.8 L1239.9 786.1 L1246.6 791.8 L1250.0 800.3 L1255.6 791.1 L1266.9 787.9 L1280.3 781.2 L1293.8 773.6 L1307.3 767.0 L1307.3 801.9Z" fill="#9cddfb" />
<path d="M912.0 388.2 L929.9 392.7 L932.2 398.3 L916.4 394.9Z" fill="#9cddfb" />
<path d="M1033.2 369.1 L1044.5 369.1 L1044.9 374.7 L1034.4 374.3Z" fill="#9cddfb" />
<path d="M885.0 417.4 L894.0 419.6 L896.2 428.6 L889.5 432.0 L885.0 430.9Z" fill="#9cddfb" />
</g>
<path d="M575.6 445.5 L579.6 444.5 L583.3 442.5 L587.5 442.0 L591.2 440.0 L595.3 439.5 L599.1 437.8 L603.0 436.5 L607.0 435.4 L610.3 438.0 L613.3 440.9 L617.0 442.9 L620.4 445.4 L623.4 448.3 L626.9 450.7 L630.2 453.2 L633.5 455.8 L636.8 458.3 L640.0 461.0 L643.2 463.7 L646.5 466.3 L649.7 469.0 L653.7 469.1 L657.7 468.3 L661.7 468.3 L665.6 467.7 L669.7 467.6 L673.6 467.1 L677.6 467.1 L681.6 466.6 L685.6 466.8 L688.6 469.7 L691.9 472.2 L695.3 474.7 L698.2 477.6 L701.4 480.3 L701.5 484.8 L702.9 489.2 L702.7 493.8 L703.6 498.2 L705.9 502.7 L708.1 507.2" fill="none" stroke="#a9a7dc" stroke-width="0.5" stroke-linejoin="round" opacity=".8"/>
<path d="M575.6 445.5 L575.6 449.7 L575.2 454.0 L575.7 458.2 L575.6 462.5 L575.4 466.7 L575.1 471.0 L575.7 475.2 L575.2 479.5 L575.4 483.7 L575.4 488.0 L575.7 492.2 L575.7 496.5 L576.0 500.7 L575.6 505.0 L580.1 505.0 L584.6 505.3 L589.0 506.1" fill="none" stroke="#a9a7dc" stroke-width="0.5" stroke-linejoin="round" opacity=".8"/>
<path d="M631.7 350.0 L632.4 354.2 L633.8 358.2 L634.9 362.3 L635.9 366.4 L636.1 370.7 L637.0 374.8 L638.1 378.9 L639.4 382.9 L640.4 387.0 L641.3 391.1 L642.1 395.3 L643.0 399.4 L646.8 400.6 L650.5 402.4 L654.3 403.7 L657.8 405.8 L661.5 407.3 L665.4 408.4 L669.2 410.0 L673.1 411.3 L676.6 413.5 L680.7 414.4 L684.5 416.0 L688.4 417.3 L692.1 419.2 L695.8 420.8 L699.6 422.4 L703.5 423.7 L707.2 425.5 L711.2 426.6 L714.8 428.6 L719.1 428.3 L723.4 428.0 L727.7 428.2 L732.0 427.8 L736.3 427.7 L740.7 427.9 L745.0 427.7 L749.3 428.0 L753.6 427.8 L757.9 427.9 L762.2 427.7 L766.5 427.5 L770.7 427.9 L774.8 428.2 L779.0 427.9 L783.2 428.0 L787.3 428.8 L791.5 428.1 L795.7 428.6" fill="none" stroke="#a9a7dc" stroke-width="0.5" stroke-linejoin="round" opacity=".8"/>
<path d="M766.5 399.4 L766.3 403.4 L766.4 407.4 L767.0 411.4 L766.2 415.5 L766.1 419.5 L766.4 423.5 L766.5 427.5" fill="none" stroke="#a9a7dc" stroke-width="0.5" stroke-linejoin="round" opacity=".8"/>
<path d="M643.0 399.4 L647.0 398.9 L651.0 398.2 L654.9 396.8 L658.9 396.4 L662.9 395.7 L667.0 395.3 L671.0 394.5 L675.0 393.7 L678.9 392.7 L675.7 389.4 L672.8 386.0 L669.4 382.9 L666.2 379.7 L662.7 376.8 L659.3 373.8 L656.4 370.2 L657.6 366.3 L659.3 362.7 L660.9 359.0" fill="none" stroke="#a9a7dc" stroke-width="0.5" stroke-linejoin="round" opacity=".8"/>
<path d="M719.3 356.7 L716.5 359.8 L712.9 362.1 L710.0 365.1 L706.9 367.9 L703.8 370.7 L700.7 373.5 L697.7 376.4 L694.6 379.2 L691.8 382.3 L688.1 384.4 L685.0 387.1 L682.0 390.0 L678.9 392.7" fill="none" stroke="#a9a7dc" stroke-width="0.5" stroke-linejoin="round" opacity=".8"/>
<path d="M701.4 480.3 L705.2 479.0 L709.0 477.7 L712.7 475.8 L716.7 475.1 L720.4 473.3 L724.1 471.8 L728.0 470.6 L732.0 469.7 L735.6 467.9 L739.5 466.8 L743.1 468.7 L746.6 470.6 L750.5 471.8 L754.2 473.4 L757.8 475.2 L761.4 477.1 L765.0 478.8 L768.7 480.3 L772.8 481.1 L777.0 481.9 L781.2 482.1 L785.3 482.9 L789.4 483.8 L793.5 484.8 L797.4 483.7 L801.1 482.0 L805.0 481.0 L808.7 479.2 L812.6 477.9 L816.5 476.9 L820.4 475.8 L824.9 476.0 L829.4 476.0 L833.9 476.0 L838.4 475.6 L842.9 475.8 L847.4 475.8 L851.9 475.8 L856.0 474.3 L860.0 472.4 L864.3 471.7 L868.2 469.5 L872.6 468.7 L876.6 466.8" fill="none" stroke="#a9a7dc" stroke-width="0.5" stroke-linejoin="round" opacity=".8"/>
<path d="M627.2 498.2 L630.2 501.2 L634.0 503.0 L636.9 505.9 L639.9 508.8 L643.0 511.4 L646.5 513.6 L649.8 516.0 L653.1 518.6 L655.8 521.7 L659.5 523.7 L662.5 526.5 L666.0 528.8 L668.9 531.6 L672.2 534.2 L675.6 536.2 L679.7 537.1 L683.1 539.4 L686.9 540.7 L690.4 542.7 L694.1 544.2 L698.0 545.4 L701.4 547.6 L705.2 548.9 L709.1 550.1 L712.6 552.2 L717.0 550.9 L721.6 550.7 L726.1 549.9 L730.5 549.0 L735.0 548.1 L739.5 547.7 L743.7 546.6 L747.8 545.8 L752.1 545.4 L756.0 543.7 L760.3 543.6 L764.5 542.8 L768.5 541.2 L772.8 541.2 L776.9 540.1 L781.1 539.4 L785.1 538.0 L789.3 537.2 L793.5 536.4" fill="none" stroke="#a9a7dc" stroke-width="0.5" stroke-linejoin="round" opacity=".8"/>
<path d="M636.2 575.0 L636.3 579.2 L635.7 583.4 L636.1 587.6 L636.4 591.8 L636.3 596.1 L636.4 600.3 L636.7 604.5 L636.6 608.7 L635.9 612.9 L636.4 617.1 L635.8 621.3 L636.5 625.5 L636.5 629.8 L636.2 634.0 L636.5 638.2 L636.2 642.4 L633.3 645.8 L629.9 648.8 L626.9 652.2 L624.0 655.7 L621.1 659.1 L618.2 662.6 L617.3 666.8 L616.8 671.0 L616.7 675.3 L616.0 679.5 L616.2 683.9 L615.0 688.0 L614.8 692.3 L614.0 696.5 L613.8 700.8 L613.6 705.0 L614.0 709.1 L614.2 713.3 L613.3 717.5 L614.1 721.6 L613.8 725.8 L613.8 730.0" fill="none" stroke="#a9a7dc" stroke-width="0.5" stroke-linejoin="round" opacity=".8"/>
<path d="M636.2 642.4 L640.7 642.2 L645.2 642.2 L649.7 642.6 L654.2 642.9 L658.7 642.1 L663.2 642.5 L667.7 642.4 L672.0 643.2 L676.1 644.4 L680.4 645.3 L684.7 646.1 L689.0 647.0 L693.2 648.1 L697.3 649.8 L701.6 650.4 L705.8 651.4 L710.3 650.3 L714.9 650.3 L719.4 649.6 L723.8 648.3 L728.3 647.3 L732.8 646.9 L735.3 643.5 L737.9 640.2 L740.9 637.1 L743.4 633.8 L746.2 630.7 L749.0 627.5 L751.9 624.5 L754.9 621.5 L757.5 618.2 L760.0 614.7 L762.7 611.5 L765.6 608.4 L768.2 605.1 L771.0 602.0 L775.1 600.7 L779.1 599.3 L783.3 598.4 L787.6 597.9 L791.5 596.0 L795.7 595.2 L799.8 594.2 L804.0 593.3 L808.0 591.6 L812.1 590.5 L816.2 589.4 L820.4 588.5" fill="none" stroke="#a9a7dc" stroke-width="0.5" stroke-linejoin="round" opacity=".8"/>
<path d="M618.2 662.6 L622.2 664.5 L626.1 666.5 L629.8 668.9 L633.8 670.8 L637.7 672.8 L642.0 674.0 L646.0 675.9 L649.7 678.3 L653.7 678.2 L657.7 678.1 L661.7 677.3 L665.7 677.1 L669.7 676.2 L673.8 676.3 L677.8 676.5 L681.8 676.1 L685.8 675.8 L689.8 675.6 L693.8 674.5 L697.8 674.1 L701.8 673.8 L705.8 673.8" fill="none" stroke="#a9a7dc" stroke-width="0.5" stroke-linejoin="round" opacity=".8"/>
<path d="M660.9 696.3 L662.4 700.8 L663.7 705.3 L665.4 709.8 L661.6 712.1 L658.1 715.0 L654.5 717.7 L650.9 720.3 L647.4 723.2 L646.7 727.7 L645.9 732.2 L645.2 736.7" fill="none" stroke="#a9a7dc" stroke-width="0.5" stroke-linejoin="round" opacity=".8"/>
<path d="M732.8 646.9 L737.0 647.3 L740.9 648.8 L745.1 649.1 L749.0 650.7 L753.1 651.2 L757.3 651.7 L761.4 652.4 L765.4 653.4 L769.4 654.6 L773.5 655.5 L777.7 655.8 L781.7 656.6 L785.7 657.9 L789.8 658.8 L793.9 659.4 L797.9 660.4 L796.2 664.0 L793.9 667.3 L792.4 671.1 L790.1 674.4 L788.0 677.8 L785.6 681.1 L783.8 684.7 L781.6 688.1 L780.0 691.8 L776.2 693.8 L772.6 696.0 L768.9 698.0 L764.8 699.4 L761.2 701.6 L757.6 704.0 L754.0 706.2 L750.0 707.8 L746.3 709.8 L747.9 713.8 L749.8 717.7 L751.7 721.7 L753.1 725.8 L754.6 729.9 L757.0 733.6 L758.9 737.5 L760.4 741.7 L762.0 745.7 L757.8 746.6 L753.5 747.2 L749.4 748.5 L745.1 748.8 L740.9 749.7 L736.7 750.8 L732.6 751.9 L728.3 752.4" fill="none" stroke="#a9a7dc" stroke-width="0.5" stroke-linejoin="round" opacity=".8"/>
<path d="M521.7 752.4 L524.7 756.1 L528.5 759.1 L531.5 762.8 L535.1 765.9 L539.7 766.1 L544.2 766.6 L548.6 767.6 L553.1 767.6 L557.6 768.8 L562.1 768.8 L566.6 769.3 L571.3 773.0 L575.6 777.2 L573.9 781.2 L571.9 785.1 L569.8 788.9 L567.7 792.7 L566.5 797.0 L564.3 800.7" fill="none" stroke="#a9a7dc" stroke-width="0.5" stroke-linejoin="round" opacity=".8"/>
<path d="M885.0 718.8 L888.9 720.3 L892.8 721.7 L896.4 724.0 L900.5 724.8 L904.4 726.4 L908.3 728.0 L912.0 730.0 L916.5 730.2 L920.9 731.0 L925.4 731.3 L929.9 731.5 L934.4 732.1 L938.9 732.3 L943.4 732.2 L947.4 731.6 L951.3 730.9 L955.4 731.2 L959.4 730.5 L963.3 729.3 L967.4 729.4 L971.3 728.6 L975.3 728.1 L979.3 727.7 L983.0 729.4 L986.7 731.0 L990.3 732.7 L993.8 734.7 L997.3 736.7 L1001.8 735.2 L1006.4 734.5 L1010.7 732.3 L1015.4 731.8 L1019.8 730.0" fill="none" stroke="#a9a7dc" stroke-width="0.5" stroke-linejoin="round" opacity=".8"/>
<path d="M1028.8 754.7 L1032.0 752.2 L1035.4 750.1 L1039.0 748.2 L1042.2 745.7 L1044.8 742.1 L1046.7 738.2 L1048.6 734.2 L1051.2 730.7 L1053.4 726.9 L1055.7 723.2 L1059.7 721.7 L1063.3 719.1 L1067.2 717.4 L1071.3 715.9 L1074.8 713.2 L1078.8 711.6 L1082.7 709.8" fill="none" stroke="#a9a7dc" stroke-width="0.5" stroke-linejoin="round" opacity=".8"/>
<path d="M1037.7 426.4 L1038.0 430.9 L1038.6 435.4 L1039.9 439.8 L1040.0 444.3" fill="none" stroke="#a9a7dc" stroke-width="0.5" stroke-linejoin="round" opacity=".8"/>
<path d="M1096.1 484.8 L1096.1 480.6 L1096.5 476.5 L1097.7 472.5 L1097.4 468.3 L1098.3 464.2 L1098.8 460.1 L1098.6 455.9 L1098.9 451.8 L1100.0 447.8 L1100.0 443.6 L1100.0 439.5 L1100.6 435.4 L1104.2 433.5 L1107.5 431.2 L1111.0 429.2 L1114.4 426.9 L1118.2 425.6 L1121.8 423.7 L1125.2 421.5 L1128.8 419.8 L1132.1 417.4" fill="none" stroke="#a9a7dc" stroke-width="0.5" stroke-linejoin="round" opacity=".8"/>
<path d="M1116.4 484.8 L1115.9 480.7 L1116.1 476.5 L1116.3 472.4 L1116.8 468.3 L1116.8 464.2 L1116.4 460.1 L1120.3 458.8 L1124.3 457.6 L1128.4 456.6 L1132.4 455.6 L1136.5 454.9 L1140.3 453.0 L1144.5 452.5 L1148.5 451.3 L1152.5 450.3 L1156.5 449.1 L1160.5 447.8 L1164.4 446.4 L1168.5 445.3 L1172.5 444.3 L1176.7 445.1 L1180.7 446.5 L1185.0 446.7 L1189.1 447.8 L1193.0 449.3 L1197.3 449.7 L1201.4 450.5 L1205.6 451.4 L1209.6 452.8 L1213.7 453.5 L1217.7 455.1 L1221.9 455.6 L1221.9 460.1 L1222.1 464.6 L1223.1 469.0 L1223.6 473.5 L1223.9 478.0 L1223.9 482.5 L1224.2 487.0" fill="none" stroke="#a9a7dc" stroke-width="0.5" stroke-linejoin="round" opacity=".8"/>
<path d="M1168.0 439.8 L1170.8 436.2 L1173.2 432.3 L1175.7 428.5 L1178.4 424.8 L1181.2 421.2 L1183.7 417.4 L1188.0 418.2 L1192.3 418.9 L1196.6 419.6 L1200.9 420.0 L1205.2 420.1 L1209.4 421.4 L1213.8 421.5 L1218.0 422.4 L1222.4 422.8 L1226.6 423.7 L1230.9 424.1 L1232.1 428.6 L1233.0 433.1 L1233.9 437.6 L1234.8 442.0 L1235.4 446.6" fill="none" stroke="#a9a7dc" stroke-width="0.5" stroke-linejoin="round" opacity=".8"/>
<path d="M992.8 350.0 L993.6 354.6 L995.0 359.0 L996.4 363.4 L997.3 368.0 L1000.1 371.5 L1002.3 375.5 L1005.4 378.8 L1008.3 382.2 L1010.8 385.9 L1012.5 389.6 L1014.6 393.0 L1016.3 396.7 L1019.1 399.7 L1020.8 403.4 L1022.5 407.1 L1024.5 410.6 L1026.4 414.1 L1028.8 417.4" fill="none" stroke="#a9a7dc" stroke-width="0.5" stroke-linejoin="round" opacity=".8"/>
<path d="M514.9 350.0 L516.6 354.0 L517.7 358.3 L519.1 362.4 L520.4 366.6 L520.9 371.0 L522.5 375.1 L523.9 379.2 L525.8 382.9 L528.5 386.2 L530.3 389.9 L532.9 393.2 L535.3 396.6 L537.2 400.4 L539.3 404.0 L542.2 407.1 L544.0 410.8 L546.3 414.4 L548.9 417.7 L551.0 421.2 L553.4 424.6 L555.6 428.2 L557.8 431.7 L559.8 435.4 L563.0 438.0 L566.2 440.6 L569.7 442.8 L573.0 445.2 L576.0 448.1 L579.0 450.9 L582.5 453.1 L585.6 455.7 L588.9 458.2 L591.8 461.3 L595.1 463.6 L598.6 465.8 L601.8 468.4 L604.8 471.3 L608.1 474.4 L611.2 477.7 L614.3 481.0 L617.9 483.8 L621.1 487.1 L623.9 490.7 L627.2 493.8" fill="none" stroke="#f3d98e" stroke-width="0.55" stroke-linejoin="round" opacity=".9"/>
<path d="M625.0 356.7 L626.7 360.4 L628.4 364.0 L630.0 367.7 L631.0 371.7 L633.2 375.1 L634.6 378.9 L636.3 382.5 L637.9 386.2 L639.1 390.1 L640.6 393.8 L642.8 397.3 L644.5 400.9 L645.6 404.8 L647.4 408.4 L650.6 410.9 L653.7 413.6 L656.0 417.0 L659.2 419.4 L661.9 422.5 L665.1 424.9 L667.7 428.0 L671.0 430.5 L674.1 433.0 L677.2 435.7 L679.7 438.8 L682.6 441.7 L685.6 444.3 L688.8 447.2 L692.6 449.1 L695.7 452.0 L699.2 454.3 L702.5 457.0 L706.1 459.2 L709.3 461.9 L712.6 464.6 L715.7 467.4 L719.6 469.3 L722.7 472.1 L725.9 474.9 L729.2 477.6 L733.0 479.5 L736.4 481.9 L739.5 484.8 L739.9 489.3 L740.6 493.8 L741.8 498.2 L743.0 502.7 L742.9 507.3 L744.0 511.7" fill="none" stroke="#f3d98e" stroke-width="0.55" stroke-linejoin="round" opacity=".9"/>
<path d="M723.8 397.2 L727.5 395.6 L731.5 394.6 L735.1 392.8 L738.9 391.5 L742.4 389.4 L746.4 388.5 L749.9 386.4 L753.7 385.1 L757.6 384.0 L761.4 382.5 L764.9 380.4 L768.6 378.9 L772.4 377.6 L776.2 376.2 L780.0 374.7 L782.9 377.9 L786.0 381.0 L788.7 384.3 L791.2 387.9 L794.0 391.3 L797.5 394.0 L799.9 397.6 L802.6 401.0 L806.0 403.8 L808.3 407.6 L811.4 410.6 L808.7 413.9 L805.4 416.6 L802.4 419.6 L799.4 422.5 L796.6 425.8 L793.5 428.6 L795.3 432.6 L797.0 436.7 L798.9 440.7 L800.5 444.9 L802.4 448.8 L806.3 450.1 L810.1 451.5 L814.0 452.4 L817.7 454.3 L821.5 455.6 L825.4 456.7 L829.1 458.5 L832.9 459.9 L836.8 460.9 L840.6 462.3 L844.7 461.4 L848.8 461.1 L852.8 460.1 L856.9 459.5 L861.0 459.2 L865.1 458.2 L869.2 458.0 L873.3 457.4 L877.3 456.3 L881.5 456.3 L885.5 455.6" fill="none" stroke="#f3d98e" stroke-width="0.55" stroke-linejoin="round" opacity=".9"/>
<path d="M564.3 439.8 L561.0 442.2 L557.0 443.7 L553.4 445.7 L550.0 447.9 L546.6 450.3 L542.8 452.0 L539.2 454.1 L535.4 455.6 L532.2 458.4 L528.4 460.1 L529.2 464.4 L530.2 468.6 L531.5 472.8 L532.6 477.0 L534.3 481.0 L534.7 485.5 L536.3 489.5 L537.4 493.8" fill="none" stroke="#f3d98e" stroke-width="0.55" stroke-linejoin="round" opacity=".9"/>
<path d="M604.8 471.3 L604.4 475.3 L604.6 479.4 L605.4 483.4 L604.9 487.5 L604.9 491.5 L605.9 495.5 L605.7 499.6 L605.4 503.6 L606.1 507.7 L605.5 511.7 L606.2 515.8 L605.8 519.8 L606.6 523.8 L606.3 527.9 L606.0 532.0 L606.9 536.0 L606.9 540.0 L606.8 544.1 L607.1 548.1 L607.0 552.2" fill="none" stroke="#f3d98e" stroke-width="0.55" stroke-linejoin="round" opacity=".9"/>
<path d="M544.1 529.7 L548.0 530.9 L551.6 532.6 L555.3 534.2 L558.7 536.5 L562.5 537.9 L566.1 539.7 L570.1 540.6 L573.5 542.8 L577.5 543.8 L581.0 545.8 L584.7 547.5 L588.5 548.8 L591.9 550.9 L595.8 552.2 L599.9 553.4 L603.9 554.7 L607.9 556.2 L612.2 556.7 L616.1 558.8 L620.3 559.6 L624.4 560.6 L628.4 562.2 L632.6 563.0 L636.5 564.9 L640.7 565.6 L643.6 562.4 L646.3 559.0 L649.5 556.0 L652.1 552.5 L654.8 549.1 L658.0 546.2 L660.4 542.5 L663.8 539.7 L666.3 536.1 L669.4 533.1 L672.2 529.7 L675.6 532.2 L679.5 533.9 L683.1 536.0 L686.9 537.7 L690.8 539.5 L694.4 541.5 L698.1 543.7 L701.5 546.1 L705.3 548.0 L708.9 550.1 L712.6 552.2 L715.5 555.6 L719.3 558.3 L722.4 561.6 L725.3 565.1 L729.0 567.9 L732.2 571.1 L735.0 574.6" fill="none" stroke="#f3d98e" stroke-width="0.55" stroke-linejoin="round" opacity=".9"/>
<path d="M483.5 599.7 L488.0 599.2 L492.4 598.7 L496.9 598.6 L501.4 598.1 L505.9 598.2 L510.4 597.9 L514.9 597.5 L519.0 595.9 L523.3 595.0 L527.4 593.6 L531.5 592.0 L535.9 591.5 L539.9 589.5 L544.1 588.5 L548.3 587.5 L552.6 586.7 L556.9 586.6 L561.3 586.1 L565.5 585.4 L569.7 584.3 L574.0 583.5 L578.2 582.6 L582.6 582.6 L586.8 581.7 L590.7 582.6 L594.7 583.3 L598.6 584.4 L602.5 585.1 L606.4 586.4 L610.3 587.0 L614.4 587.4 L618.2 588.5 L621.3 591.3 L625.1 593.0 L628.0 595.9 L631.4 598.2 L634.7 600.5 L638.1 602.8 L641.0 605.9 L644.7 607.7 L647.6 610.6 L650.7 613.3 L654.2 615.4 L656.4 619.1 L658.3 623.0 L659.9 627.0 L661.9 630.8 L663.7 634.7 L665.5 638.7 L667.7 642.4 L671.9 642.6 L676.2 643.2 L680.4 643.7 L684.7 643.9 L688.8 645.3 L693.1 645.7 L697.3 646.1 L701.7 645.9 L705.8 646.9 L708.7 643.9 L711.3 640.7 L713.7 637.3 L716.5 634.3 L718.9 630.9 L721.4 627.6 L723.9 624.4 L726.6 621.3 L729.1 617.9 L731.9 615.0 L734.9 612.0 L737.3 608.7" fill="none" stroke="#f3d98e" stroke-width="0.55" stroke-linejoin="round" opacity=".9"/>
<path d="M514.9 604.2 L517.3 607.8 L519.6 611.4 L522.2 614.8 L525.1 618.0 L527.4 621.7 L530.0 625.1 L532.2 628.8 L534.9 632.2 L537.4 635.6 L540.6 638.7 L543.3 642.2 L546.0 645.7 L549.6 648.4 L552.1 652.1 L555.7 654.8 L558.5 658.2 L561.5 661.4 L564.3 664.8 L565.4 668.9 L566.4 673.0 L567.8 676.9 L569.5 680.8 L570.2 684.9 L572.0 688.8 L573.3 692.7 L573.9 696.9 L575.6 700.8" fill="none" stroke="#f3d98e" stroke-width="0.55" stroke-linejoin="round" opacity=".9"/>
<path d="M586.8 649.1 L588.7 652.7 L590.6 656.2 L592.6 659.7 L594.4 663.3 L596.8 666.6 L598.5 670.3 L600.6 673.7 L602.5 677.3 L604.8 680.6 L608.7 679.4 L612.7 678.5 L616.6 677.3 L620.4 675.9 L624.3 674.7 L628.4 673.9 L632.2 672.3 L636.2 671.6 L639.6 669.0 L642.3 665.5 L645.3 662.5 L648.5 659.6 L652.2 657.3 L655.0 654.0 L658.0 650.9 L661.1 647.9 L664.2 645.0 L667.7 642.4" fill="none" stroke="#f3d98e" stroke-width="0.55" stroke-linejoin="round" opacity=".9"/>
<path d="M737.3 608.7 L741.2 609.8 L745.1 610.7 L749.0 611.7 L753.0 612.7 L757.1 612.9 L760.9 614.4 L764.8 615.1 L768.7 616.5 L772.6 617.4 L776.5 618.4 L780.6 618.6 L784.5 619.9 L786.7 623.4 L789.1 626.7 L791.6 629.9 L794.8 632.7 L797.2 636.0 L799.7 639.2 L802.3 642.4 L804.2 646.1 L806.9 649.1 L810.2 651.9 L813.8 654.2 L817.2 656.9 L820.8 659.2 L824.5 661.4 L828.1 663.8 L831.6 666.3 L834.7 669.3 L838.4 671.6 L839.7 675.8 L840.5 680.0 L841.4 684.3 L842.8 688.4 L843.6 692.7 L844.6 697.0 L845.2 701.3 L846.5 705.5 L847.4 709.8 L848.0 713.7 L847.9 717.8 L848.9 721.8 L849.0 725.8 L849.7 729.8 L850.8 733.7 L850.9 737.7 L851.4 741.7 L851.9 745.7 L853.3 749.7 L855.4 753.5 L856.7 757.6 L858.6 761.4 L860.5 765.3 L861.6 769.4 L864.0 773.1 L865.3 777.2 L864.1 781.6 L863.9 786.2 L863.1 790.7 L862.0 795.2 L860.8 799.6" fill="none" stroke="#f3d98e" stroke-width="0.55" stroke-linejoin="round" opacity=".9"/>
<path d="M703.6 714.3 L704.7 710.2 L705.7 706.2 L705.6 701.9 L706.9 697.9 L707.7 693.8 L708.8 689.8 L709.0 685.6 L710.1 681.6 L710.8 677.5 L712.1 673.5 L712.6 669.3 L715.5 672.3 L717.6 675.9 L720.8 678.6 L723.6 681.7 L725.9 685.2 L728.8 688.2 L731.8 691.1 L734.0 694.6 L737.2 697.4 L739.5 700.8 L743.2 698.8 L746.6 696.5 L750.2 694.3 L753.6 691.9 L756.9 689.4 L760.5 687.2 L763.9 685.0 L767.7 683.1 L771.0 680.6" fill="none" stroke="#f3d98e" stroke-width="0.55" stroke-linejoin="round" opacity=".9"/>
<path d="M806.9 649.1 L802.4 653.6" fill="none" stroke="#f3d98e" stroke-width="0.55" stroke-linejoin="round" opacity=".9"/>
<path d="M885.0 691.8 L888.5 694.0 L891.2 697.2 L894.9 699.1 L898.0 701.8 L901.2 704.5 L904.0 707.5 L907.5 709.8 L910.5 712.8 L913.5 715.7 L916.2 719.0 L919.6 721.6 L922.5 724.7 L925.4 727.8 L928.2 730.9 L931.2 733.9 L934.3 736.8 L937.5 739.6 L940.5 742.6 L943.4 745.7 L947.2 747.2 L950.6 749.7 L954.4 751.4 L958.0 753.3 L961.9 754.6 L965.5 756.7 L969.0 758.8 L972.8 760.5 L976.6 761.9 L980.2 764.1 L983.8 765.9 L987.8 764.7 L991.4 762.5 L995.3 760.8 L999.2 759.3 L1003.2 758.1 L1007.1 756.6 L1010.8 754.7" fill="none" stroke="#f3d98e" stroke-width="0.55" stroke-linejoin="round" opacity=".9"/>
<path d="M820.4 799.6 L821.2 795.6 L822.3 791.7 L823.5 787.8 L824.7 783.8 L826.0 780.0 L826.8 775.9 L828.1 772.1 L829.4 768.2 L832.4 764.7 L836.1 762.1 L839.2 758.7 L841.9 755.1 L845.8 752.5 L848.4 748.6 L851.9 745.7 L855.3 743.2 L859.1 741.2 L862.4 738.6 L865.9 736.1 L869.2 733.4 L872.5 730.8 L876.2 728.7 L879.4 725.8 L882.9 723.4 L886.5 721.1 L890.0 718.8" fill="none" stroke="#f3d98e" stroke-width="0.55" stroke-linejoin="round" opacity=".9"/>
<path d="M885.0 667.1 L889.5 666.3 L894.0 666.0 L898.0 668.1 L901.3 671.4 L905.2 673.8 L908.7 675.0 L911.5 677.5 L914.8 679.0 L918.1 680.4 L920.9 682.8 L924.3 685.1 L928.1 686.7 L931.1 689.5 L934.4 691.8 L938.6 692.9 L942.5 694.6 L946.3 696.7 L950.1 698.5 L954.0 699.3 L958.0 698.5 L962.0 698.9 L965.9 699.7 L969.8 699.6 L973.8 699.8 L977.7 698.9 L981.6 698.5 L984.0 703.0 L986.1 707.5 L990.0 704.1 L992.8 699.7 L997.1 697.8 L1001.9 698.0 L1006.3 696.3 L1010.2 697.5 L1014.0 698.8 L1017.5 700.8 L1020.3 704.2 L1022.3 708.1 L1024.3 712.0 L1027.9 712.5 L1031.5 711.5 L1035.0 712.1 L1038.6 712.2 L1042.2 712.0 L1045.5 710.1 L1049.0 708.7 L1052.0 706.3 L1055.7 705.3 L1058.7 702.4 L1062.2 700.4 L1066.0 698.8 L1069.2 696.3 L1073.7 696.6 L1078.2 696.7 L1082.7 697.4 L1086.0 699.2 L1089.4 700.8 L1091.0 696.3 L1092.8 691.8 L1096.9 693.8 L1100.6 696.3 L1102.1 700.2 L1104.1 703.9 L1106.2 707.5 L1107.0 711.2 L1106.9 715.0 L1107.4 718.8 L1105.8 722.5 L1103.8 726.0 L1102.9 730.0 L1099.6 732.7 L1097.1 736.2 L1093.9 739.0 L1092.8 743.4 L1093.8 748.0 L1092.8 752.4 L1096.4 752.0 L1100.1 752.3 L1103.7 751.1 L1107.4 751.3 L1108.7 754.7 L1110.8 757.8 L1111.2 761.5 L1112.4 765.0 L1114.1 768.2 L1115.5 772.0 L1116.5 775.9 L1118.6 779.4 L1122.5 780.6 L1126.0 782.7 L1129.8 783.9 L1134.3 785.2 L1138.8 786.1 L1144.4 787.3 L1144.2 783.1 L1143.6 779.0 L1143.3 774.9 L1147.3 773.9 L1151.1 772.6 L1154.5 770.4 L1159.0 769.6 L1163.6 769.2 L1168.0 768.2 L1171.8 766.4 L1176.0 766.2 L1179.9 765.0 L1183.7 763.7 L1187.5 762.7 L1190.5 760.3 L1193.7 762.2 L1197.4 762.8 L1200.7 764.4 L1204.0 765.9 L1205.2 769.8 L1207.7 773.1 L1208.5 777.2 L1211.8 778.2 L1215.4 778.9 L1218.8 779.9 L1221.9 781.6 L1225.7 781.6 L1229.0 783.4 L1232.8 783.1 L1236.4 783.9 L1239.9 785.0 L1243.4 787.7 L1246.6 790.6 L1247.8 795.3 L1250.0 799.6 L1251.3 796.3 L1253.7 793.6 L1255.6 790.6 L1259.4 789.6 L1263.3 789.0 L1266.9 787.3 L1270.4 786.0 L1273.8 784.4 L1276.8 781.9 L1280.3 780.5 L1283.6 778.4 L1287.0 776.4 L1290.7 775.2 L1293.8 772.7 L1297.5 771.6 L1300.3 768.8 L1303.7 767.1 L1307.3 765.9 L1306.9 762.4 L1306.9 758.9 L1307.3 755.4 L1307.4 751.9 L1306.9 748.4 L1306.5 744.9 L1307.2 741.4 L1307.1 737.9 L1307.4 734.4 L1308.0 730.9 L1307.6 727.4 L1307.3 723.9 L1307.5 720.3 L1307.6 716.8 L1306.6 713.3 L1307.9 709.8 L1307.7 706.3 L1307.9 702.8 L1307.8 699.3 L1307.1 695.8 L1307.1 692.3 L1306.6 688.8 L1307.5 685.3 L1306.6 681.8 L1306.6 678.3 L1306.8 674.8 L1306.7 671.3 L1307.0 667.8 L1306.6 664.2 L1306.5 660.7 L1306.7 657.2 L1306.6 653.7 L1307.1 650.2 L1306.5 646.7 L1307.9 643.2 L1307.5 639.7 L1306.7 636.2 L1306.9 632.7 L1307.0 629.2 L1307.1 625.7 L1306.7 622.2 L1307.8 618.7 L1308.1 615.2 L1307.2 611.7 L1307.3 608.1 L1306.6 604.6 L1306.6 601.1 L1307.0 597.6 L1306.9 594.1 L1307.8 590.6 L1306.7 587.1 L1306.5 583.6 L1308.0 580.1 L1307.3 576.6 L1306.7 573.1 L1307.4 569.6 L1306.5 566.1 L1307.3 562.6 L1308.0 559.1 L1307.9 555.6 L1307.6 552.0 L1306.9 548.5 L1307.1 545.0 L1306.7 541.5 L1307.7 538.0 L1307.3 534.5 L1307.7 531.0 L1307.0 527.5 L1306.8 524.0 L1307.8 520.5 L1308.1 517.0 L1307.8 513.5 L1307.8 510.0 L1307.8 506.5 L1307.7 503.0 L1306.8 499.5 L1307.3 495.9 L1307.1 492.4 L1306.5 488.9 L1306.5 485.4 L1306.9 481.9 L1306.9 478.4 L1307.6 474.9 L1308.0 471.4 L1307.2 467.9 L1308.0 464.4 L1308.1 460.9 L1308.0 457.4 L1307.1 453.9 L1306.8 450.4 L1306.8 446.9 L1306.8 443.4 L1307.3 439.8 L1303.8 442.5 L1299.7 444.2 L1296.1 446.6 L1292.3 445.9 L1288.6 446.0 L1284.8 446.6 L1280.3 445.9 L1275.9 444.8 L1271.3 444.3 L1269.0 447.9 L1268.2 452.1 L1265.7 455.6 L1267.4 459.4 L1268.9 463.4 L1271.3 466.8 L1267.7 468.7 L1264.4 471.0 L1261.3 473.6 L1257.9 475.8 L1255.0 477.8 L1251.4 478.5 L1248.6 480.7 L1245.1 481.6 L1242.1 483.6 L1238.4 483.6 L1235.0 485.2 L1231.4 485.8 L1227.6 485.6 L1224.2 487.0 L1220.2 487.5 L1216.4 489.2 L1212.5 490.1 L1208.5 490.4 L1205.3 492.3 L1201.5 492.6 L1198.2 494.1 L1195.0 496.0 L1191.8 498.0 L1188.0 498.5 L1184.9 500.5 L1179.2 497.1 L1175.8 495.7 L1172.1 495.5 L1168.4 495.3 L1164.9 494.4 L1161.3 493.8 L1157.2 492.9 L1153.2 491.7 L1149.7 488.8 L1145.6 488.1 L1142.3 486.8 L1138.8 485.9 L1135.7 484.1 L1132.1 483.6 L1127.6 484.1 L1123.0 483.8 L1118.6 484.8 L1114.2 483.9 L1109.6 484.5 L1105.1 483.6 L1101.5 483.6 L1097.9 483.1 L1094.3 482.7 L1090.8 481.7 L1087.2 481.4 L1082.7 482.3 L1078.2 482.5 L1075.8 479.2 L1073.2 476.1 L1072.0 472.1 L1069.2 469.0 L1067.8 465.4 L1066.9 461.6 L1065.8 457.8 L1062.5 455.8 L1059.4 453.5 L1055.7 452.2 L1052.3 450.6 L1049.3 448.2 L1045.6 447.1 L1042.2 445.5 L1038.6 445.0 L1035.0 444.5 L1031.4 444.9 L1027.8 443.8 L1024.3 443.2 L1019.7 443.0 L1015.1 442.5 L1010.8 441.0 L1009.5 436.9 L1007.4 433.1 L1008.4 429.2 L1010.4 425.6 L1011.9 421.9 L1011.1 417.3 L1009.7 412.9 L1007.5 409.5 L1004.9 406.3 L1002.9 402.8 L1000.3 400.1 L997.7 397.5 L995.1 394.9 L991.6 392.3 L987.3 391.0 L983.8 388.2 L980.1 385.9 L976.1 384.0 L972.6 381.4 L971.7 377.0 L971.5 372.5 L965.9 372.5 L962.3 373.8 L959.1 375.8 L955.7 379.8 L952.4 383.7 L948.7 387.0 L945.2 390.4 L944.6 394.3 L944.2 398.3 L944.8 402.2 L944.5 406.2 L941.0 408.8 L937.8 411.8 L933.7 411.0 L929.6 410.3 L925.4 409.5 L921.0 408.5 L916.4 408.1 L912.0 407.3 L910.4 410.6 L909.0 414.0 L907.5 417.4 L905.7 421.1 L904.9 425.2 L903.5 429.0 L903.0 433.1 L904.0 437.3 L906.3 441.0 L902.4 440.8 L898.5 439.8 L894.0 440.5 L889.4 440.6 L885.0 442.1 L890.0 439.8 L885.9 441.0 L882.4 443.8 L878.5 445.5 L874.3 446.6 L876.6 449.5 L879.4 452.2 L881.1 455.6 L882.1 459.5 L883.1 463.5 L882.8 467.7 L883.3 471.8 L884.4 475.8 L882.3 478.6 L881.8 482.3 L879.4 485.1 L877.9 488.3 L876.6 491.5 L873.5 493.9 L869.5 494.7 L866.1 496.5 L863.3 499.4 L859.4 500.2 L856.3 502.7 L852.8 504.7 L849.2 506.4 L845.2 507.4 L841.7 509.5 L838.4 511.7 L835.7 514.4 L832.4 516.3 L829.4 518.5 L824.3 517.9 L819.3 517.3 L815.4 518.7 L811.4 519.6 L808.0 522.6 L804.1 525.1 L800.2 527.4 L798.0 530.3 L797.1 533.8 L794.6 536.4 L795.6 540.2 L796.9 543.9 L797.9 547.7 L802.6 548.0 L806.9 549.9 L808.6 553.2 L809.6 556.7 L811.1 560.0 L812.5 563.4 L810.2 566.7 L806.9 569.0 L809.5 571.5 L812.7 573.1 L815.9 574.6 L820.0 578.0 L824.9 580.0 L824.9 584.0 L828.5 585.1 L831.8 587.0 L835.3 588.4 L838.4 590.7 L842.0 592.6 L846.0 593.4 L849.6 595.2 L850.9 598.8 L851.2 602.7 L851.9 606.4 L856.0 609.3 L860.8 610.9 L858.7 614.1 L857.5 617.7 L860.4 620.4 L863.1 623.3 L865.3 626.7 L864.1 631.1 L864.2 635.6 L859.7 635.5 L855.2 635.6 L855.5 640.2 L856.3 644.6 L859.2 648.0 L861.4 651.8 L863.1 655.9 L866.7 657.6 L870.6 658.7 L874.3 660.4 L877.5 662.1 L879.5 665.4 L882.6 667.3 L885.5 669.3 L890.0 671.6Z" fill="#ebf2fb" opacity=".93"/>
<g clip-path="url(#cclip)"><g filter="url(#b4)">
<path d="M1188.2 505.0 L1221.9 493.8 L1266.9 475.8 L1307.3 451.1 L1307.3 581.4 L1154.5 581.4 L1165.8 552.2 L1177.0 525.2Z" fill="#d3ebda" opacity="1"/>
<path d="M1109.6 575.0 L1307.3 575.0 L1307.3 777.2 L1244.4 788.4 L1199.5 765.9 L1143.3 783.9 L1109.6 754.7 L1098.4 709.8 L1105.1 642.4Z" fill="#d3ebda" opacity="1"/>
<path d="M885.0 602.0 L952.4 593.0 L992.8 588.5 L1042.2 602.0 L1109.6 597.5 L1109.6 700.8 L1087.2 694.0 L1055.7 703.0 L1024.3 709.8 L986.1 703.0 L950.1 696.3 L920.9 680.6 L885.0 664.8Z" fill="#deefe6" opacity="1"/>
<path d="M885.0 444.3 L907.5 439.8 L952.4 446.6 L988.3 457.8 L1001.8 475.8 L979.3 484.8 L941.2 475.8 L907.5 475.8 L885.0 484.8Z" fill="#d5e8dd" opacity=".8"/>
<path d="M947.9 385.9 L970.4 374.7 L1001.8 403.9 L1009.7 424.1 L992.8 430.9 L970.4 412.9Z" fill="#dcebe4" opacity=".8"/>
<path d="M1078.2 534.2 L1109.6 529.7 L1132.1 547.7 L1120.8 565.6 L1087.2 558.9Z" fill="#dbeee4" opacity=".8"/>
</g>
<path d="M1199.5 663.4 L1203.5 662.5 L1207.2 660.4 L1211.1 659.2 L1215.2 658.2 L1218.9 656.3 L1223.3 655.7 L1227.6 654.8 L1232.0 654.0 L1236.4 653.9 L1240.3 652.7 L1243.9 650.7 L1247.3 648.6 L1251.0 646.9 L1255.1 645.0 L1259.2 643.1 L1263.1 640.9 L1267.5 639.8 L1271.3 637.3 L1275.3 635.9 L1278.9 633.9 L1282.7 632.1 L1286.8 631.0 L1291.8 630.8 L1296.8 630.5 L1301.8 630.8 L1306.8 630.3" fill="none" stroke="#f0b890" stroke-width="0.45" stroke-linejoin="round" opacity=".75"/>
<path d="M1271.0 535.2 L1275.0 536.5 L1279.1 537.5 L1283.3 538.1 L1287.4 539.2 L1291.3 540.7 L1295.5 542.8 L1299.6 545.0 L1303.6 547.5 L1309.0 549.2 L1314.6 550.0 L1318.4 551.9 L1322.2 553.9 L1325.8 556.2 L1329.9 557.6" fill="none" stroke="#f0b890" stroke-width="0.45" stroke-linejoin="round" opacity=".75"/>
<path d="M1289.9 540.3 L1290.1 545.0 L1289.6 549.7 L1290.0 554.5 L1289.4 559.1 L1291.2 563.7 L1294.1 567.7 L1295.6 572.4 L1298.7 575.7 L1302.1 578.7 L1305.8 581.4 L1310.6 582.0 L1315.3 581.2 L1320.1 581.6 L1324.8 582.2 L1329.5 582.1" fill="none" stroke="#f0b890" stroke-width="0.45" stroke-linejoin="round" opacity=".75"/>
<path d="M1185.0 702.0 L1180.1 702.9 L1175.1 702.9 L1170.2 703.4 L1165.6 704.9 L1160.9 705.8 L1156.5 707.7 L1151.8 708.9 L1147.4 710.7 L1144.5 714.1 L1141.0 717.0 L1138.2 720.5 L1137.8 725.0 L1136.7 729.5 L1136.7 734.1" fill="none" stroke="#f0b890" stroke-width="0.45" stroke-linejoin="round" opacity=".75"/>
<path d="M1219.6 634.4 L1222.0 637.9 L1223.1 641.9 L1225.7 645.2 L1227.3 649.1 L1226.8 653.5 L1226.4 658.0 L1226.4 662.5 L1225.1 667.0 L1225.1 671.5 L1222.3 674.8 L1219.4 678.0 L1216.7 681.4 L1213.6 684.4 L1210.5 687.5 L1210.1 691.5 L1209.3 695.5 L1209.3 699.6 L1208.5 703.6 L1208.7 707.7 L1207.8 711.7" fill="none" stroke="#f0b890" stroke-width="0.45" stroke-linejoin="round" opacity=".75"/>
<path d="M1227.7 667.9 L1232.5 666.8 L1237.4 665.9 L1242.3 664.9 L1247.2 664.0 L1251.8 662.3 L1256.4 660.4 L1259.3 657.6 L1261.6 654.1 L1264.6 651.5 L1267.5 648.6 L1270.5 645.7 L1272.9 642.1 L1276.0 639.3 L1278.7 636.1" fill="none" stroke="#f0b890" stroke-width="0.45" stroke-linejoin="round" opacity=".75"/>
<path d="M1295.1 643.8 L1290.6 643.7 L1286.2 644.0 L1281.8 643.3 L1277.7 640.7 L1273.2 638.8 L1268.7 637.0 L1264.4 634.9 L1260.5 631.9 L1256.2 629.8 L1252.1 627.1 L1251.2 622.3 L1250.6 617.5 L1249.5 612.7 L1249.0 607.9 L1247.2 602.2 L1245.9 596.5 L1247.1 591.7 L1248.9 587.0 L1249.8 582.1 L1251.5 577.4" fill="none" stroke="#f0b890" stroke-width="0.45" stroke-linejoin="round" opacity=".75"/>
<path d="M1162.6 731.6 L1158.5 729.0 L1155.1 725.6 L1151.0 723.1 L1147.6 719.7 L1143.4 717.2 L1139.0 716.6 L1134.7 715.8 L1130.2 715.8 L1125.9 715.0 L1122.0 713.4 L1117.8 713.0 L1114.1 711.2 L1110.3 709.3 L1106.8 707.1 L1103.7 704.2 L1100.0 702.1 L1096.6 699.2 L1092.6 697.1 L1089.1 694.2" fill="none" stroke="#f0b890" stroke-width="0.45" stroke-linejoin="round" opacity=".75"/>
<path d="M1167.3 656.0 L1171.6 654.2 L1176.1 652.9 L1180.4 650.9 L1184.5 648.6 L1189.0 647.3 L1193.0 646.4 L1197.1 645.8 L1201.2 645.2 L1205.3 644.9 L1209.3 644.5 L1213.7 640.6 L1218.7 637.6" fill="none" stroke="#f0b890" stroke-width="0.45" stroke-linejoin="round" opacity=".75"/>
<path d="M1285.8 699.9 L1290.0 700.0 L1294.0 699.0 L1298.0 698.7 L1302.1 697.3 L1306.2 696.0 L1310.2 694.4 L1315.3 693.0 L1320.2 691.4 L1325.0 689.4" fill="none" stroke="#f0b890" stroke-width="0.45" stroke-linejoin="round" opacity=".75"/>
<path d="M1290.8 709.3 L1294.2 711.8 L1297.6 714.4 L1300.9 717.2 L1304.6 719.5 L1307.6 722.6 L1309.1 726.5 L1310.3 730.6 L1311.4 734.6 L1313.1 738.5 L1314.8 742.3 L1314.3 747.2 L1314.1 752.1 L1314.5 757.1 L1313.6 761.9 L1314.3 766.8 L1314.8 771.6 L1314.9 776.5 L1315.6 781.3 L1318.5 784.8 L1320.7 788.8 L1323.1 792.7 L1325.4 796.7 L1328.2 800.3" fill="none" stroke="#f0b890" stroke-width="0.45" stroke-linejoin="round" opacity=".75"/>
<path d="M1280.1 706.9 L1275.9 708.8 L1272.1 711.2 L1268.4 713.9 L1264.2 715.7 L1260.5 718.2 L1256.9 720.7 L1253.6 723.8 L1249.3 726.9 L1245.2 730.1 L1240.8 733.0 L1237.3 735.2 L1234.0 737.7 L1230.2 739.2 L1226.5 741.0 L1223.4 743.7 L1220.7 747.3 L1217.9 750.9 L1215.5 754.7 L1211.3 756.7 L1207.8 759.8 L1203.7 761.9" fill="none" stroke="#f0b890" stroke-width="0.45" stroke-linejoin="round" opacity=".75"/>
<path d="M1285.0 689.3 L1280.6 690.8 L1276.6 693.2 L1272.7 695.6 L1268.4 697.3 L1265.4 700.7 L1261.9 703.6 L1258.3 706.4 L1254.8 709.3 L1251.6 712.5 L1247.6 713.6 L1243.4 713.7 L1239.5 715.2 L1235.4 715.8 L1231.5 718.4 L1227.8 721.2 L1223.6 723.3" fill="none" stroke="#f0b890" stroke-width="0.45" stroke-linejoin="round" opacity=".75"/>
<path d="M1272.1 738.1 L1273.3 733.9 L1272.9 729.4 L1274.5 725.2 L1274.6 720.9 L1278.7 718.1 L1282.7 715.2 L1286.8 712.4 L1290.7 709.5 L1293.5 706.4 L1297.1 704.2 L1300.1 701.4 L1303.0 698.4 L1305.7 695.3 L1310.5 694.4 L1315.1 692.9 L1320.0 692.7 L1324.7 691.3 L1329.6 692.3 L1334.3 694.3 L1339.4 695.1" fill="none" stroke="#f0b890" stroke-width="0.45" stroke-linejoin="round" opacity=".75"/>
<path d="M1242.1 591.4 L1238.1 594.7 L1233.7 597.4 L1229.5 600.5 L1224.7 602.6 L1220.4 605.7 L1215.6 607.8 L1211.5 607.6 L1207.4 608.0 L1203.3 607.9 L1199.3 607.6 L1195.2 606.5 L1191.1 606.9" fill="none" stroke="#f0b890" stroke-width="0.45" stroke-linejoin="round" opacity=".75"/>
<path d="M1134.7 657.1 L1134.9 652.5 L1134.2 647.9 L1133.6 643.2 L1132.8 637.6 L1132.4 631.9 L1131.8 627.4 L1131.0 622.8 L1129.8 618.4 L1128.0 613.8 L1126.5 609.0 L1125.0 604.3 L1123.0 599.7 L1120.9 596.0 L1119.5 592.0 L1118.2 588.0 L1116.3 584.2 L1115.1 580.1" fill="none" stroke="#f0b890" stroke-width="0.45" stroke-linejoin="round" opacity=".75"/>
<path d="M1188.4 723.4 L1191.8 721.1 L1195.4 719.2 L1198.7 716.6 L1202.4 714.8 L1205.9 712.6 L1208.1 708.3 L1210.9 704.4 L1213.1 700.2 L1215.7 696.2 L1216.2 692.2 L1215.8 688.1 L1216.9 684.2 L1216.7 680.2 L1217.4 676.2" fill="none" stroke="#f0b890" stroke-width="0.45" stroke-linejoin="round" opacity=".75"/>
<path d="M1209.0 730.5 L1206.0 733.9 L1203.9 737.8 L1201.5 741.5 L1199.0 745.2 L1194.3 747.0 L1189.5 748.4 L1184.8 750.0 L1180.1 751.9 L1176.5 755.0 L1173.0 758.3 L1169.7 761.7 L1165.8 764.6 L1162.8 768.3 L1158.1 768.2 L1153.5 768.5 L1148.9 769.4 L1144.3 769.6 L1139.9 771.1 L1135.4 772.4 L1130.8 773.4 L1126.4 775.2 L1122.0 776.7" fill="none" stroke="#f0b890" stroke-width="0.45" stroke-linejoin="round" opacity=".75"/>
<path d="M1179.9 540.2 L1175.4 540.2 L1171.0 540.3 L1166.5 539.7 L1162.1 540.2 L1158.3 537.3 L1154.4 534.4 L1151.1 530.9 L1145.8 530.8 L1140.6 530.8 L1135.4 531.4 L1131.4 534.2 L1127.7 537.4 L1123.9 540.5 L1119.4 541.1 L1115.1 542.5 L1110.7 543.0 L1106.4 544.5 L1101.9 544.9 L1097.5 542.8 L1093.6 540.1 L1089.6 537.6 L1085.5 535.2" fill="none" stroke="#f0b890" stroke-width="0.45" stroke-linejoin="round" opacity=".75"/>
<path d="M1130.3 576.0 L1126.5 574.2 L1122.5 572.6 L1119.1 569.9 L1115.1 568.1 L1111.4 566.3 L1107.5 564.9 L1103.8 563.0 L1100.1 561.1 L1096.5 559.2 L1093.2 555.9 L1090.0 552.4 L1087.7 548.2 L1084.7 544.6 L1081.3 541.4 L1078.9 537.5 L1076.5 533.6 L1073.5 530.1 L1071.8 526.1 L1070.5 521.9 L1068.2 518.2 L1066.9 514.0" fill="none" stroke="#f0b890" stroke-width="0.45" stroke-linejoin="round" opacity=".75"/>
<path d="M1191.7 548.4 L1195.7 546.5 L1199.6 544.1 L1203.7 542.4 L1207.1 539.4 L1211.3 537.6 L1214.7 535.3 L1217.3 532.1 L1220.8 529.8 L1224.3 527.6 L1227.1 524.6 L1230.5 521.9 L1234.3 520.0 L1237.9 517.9 L1241.7 516.0 L1244.0 512.7 L1246.3 509.3 L1249.6 506.7 L1252.0 503.4 L1254.3 500.0 L1259.1 499.1 L1264.0 498.2 L1269.0 497.6 L1272.4 494.3 L1275.4 490.4 L1278.7 487.0 L1282.5 484.0" fill="none" stroke="#f0b890" stroke-width="0.45" stroke-linejoin="round" opacity=".75"/>
<path d="M1284.0 641.9 L1282.4 646.5 L1281.9 651.4 L1280.5 656.0 L1277.1 658.4 L1273.4 660.4 L1270.0 662.8 L1266.9 665.7 L1266.5 670.7 L1266.4 675.7 L1265.6 680.7 L1264.4 684.8 L1262.2 688.7 L1260.7 692.8 L1259.7 697.0" fill="none" stroke="#f0b890" stroke-width="0.45" stroke-linejoin="round" opacity=".75"/>
<path d="M1208.4 669.2 L1211.5 666.2 L1215.3 664.1 L1218.3 661.0 L1221.8 658.4 L1225.1 655.7 L1225.8 651.3 L1227.7 647.2 L1228.9 642.9 L1229.1 638.4 L1230.5 634.2 L1232.2 630.1 L1233.3 625.7 L1235.6 621.9 L1236.2 617.4 L1238.3 613.4 L1240.1 609.1 L1243.0 605.2 L1244.9 600.9 L1248.1 597.1 L1251.9 593.8 L1254.8 589.8" fill="none" stroke="#f0b890" stroke-width="0.45" stroke-linejoin="round" opacity=".75"/>
<path d="M1286.7 681.0 L1285.2 685.4 L1284.3 689.9 L1283.9 694.5 L1282.2 698.7 L1281.3 703.2 L1281.0 707.9 L1281.8 712.5 L1282.5 717.1 L1282.5 721.8 L1282.3 726.4 L1284.5 730.8 L1285.9 735.4 L1288.4 739.7 L1289.9 744.3 L1292.7 747.6 L1295.1 751.2 L1297.1 755.0 L1299.7 758.4" fill="none" stroke="#f0b890" stroke-width="0.45" stroke-linejoin="round" opacity=".75"/>
<path d="M1193.7 722.9 L1196.5 725.7 L1200.0 727.9 L1202.9 730.8 L1206.1 733.2 L1207.2 737.3 L1209.1 741.1 L1211.0 744.8 L1212.5 748.8 L1213.8 752.8 L1216.1 756.1 L1219.0 759.0 L1222.0 761.7 L1224.3 765.0 L1227.1 767.9 L1231.3 770.3 L1234.6 773.9 L1238.9 776.1 L1242.8 778.9 L1246.7 781.6 L1249.5 785.0 L1252.7 788.1 L1255.1 791.8 L1255.4 796.5 L1256.3 801.1 L1256.8 805.7 L1256.6 810.5 L1257.5 815.1" fill="none" stroke="#f0b890" stroke-width="0.45" stroke-linejoin="round" opacity=".75"/>
<path d="M1204.9 567.8 L1207.2 572.0 L1208.7 576.6 L1210.0 581.2 L1212.4 585.4 L1213.9 589.9 L1216.5 593.3 L1218.7 597.0 L1221.5 600.3 L1223.6 604.1 L1227.9 606.7 L1232.4 608.9 L1237.4 610.0 L1241.6 612.7 L1245.6 614.8 L1249.3 617.2 L1253.5 619.0 L1257.3 621.3" fill="none" stroke="#f0b890" stroke-width="0.45" stroke-linejoin="round" opacity=".75"/>
<path d="M1227.5 522.3 L1224.9 518.1 L1221.5 514.6 L1218.3 510.9 L1215.6 506.8 L1212.0 504.0 L1208.5 501.1 L1204.8 498.4 L1202.5 494.7 L1200.6 490.8 L1198.6 487.0 L1196.1 483.4 L1194.3 479.3 L1192.5 475.2 L1191.1 470.9 L1189.1 466.8 L1187.1 462.8" fill="none" stroke="#f0b890" stroke-width="0.45" stroke-linejoin="round" opacity=".75"/>
<path d="M1232.9 623.3 L1231.4 619.2 L1230.4 615.0 L1228.1 611.2 L1227.3 606.9 L1225.6 602.9 L1224.4 598.6 L1224.1 594.2 L1222.9 589.9 L1222.4 585.5 L1221.7 581.1 L1220.6 576.6 L1219.2 572.2 L1217.8 567.8 L1215.7 563.6 L1214.6 559.1 L1214.4 554.8 L1213.9 550.5 L1214.2 546.2 L1214.0 541.9 L1213.8 537.6 L1212.1 533.7 L1211.5 529.5 L1210.3 525.5" fill="none" stroke="#f0b890" stroke-width="0.45" stroke-linejoin="round" opacity=".75"/>
<path d="M1178.6 640.0 L1182.7 642.2 L1187.1 644.1 L1191.2 646.5 L1195.7 648.1 L1200.1 649.0 L1204.5 650.3 L1209.0 651.4 L1213.2 653.2 L1217.6 654.5 L1221.8 654.6 L1225.9 654.7 L1230.1 654.6 L1234.3 655.0 L1238.3 653.0 L1241.7 649.9 L1246.1 648.4 L1249.7 645.6 L1252.3 641.1 L1254.7 636.6 L1257.1 632.1" fill="none" stroke="#f0b890" stroke-width="0.45" stroke-linejoin="round" opacity=".75"/>
<path d="M1222.6 548.5 L1226.4 549.8 L1230.5 550.2 L1234.5 551.0 L1238.3 552.4 L1242.3 551.9 L1246.4 551.3 L1250.4 551.4 L1254.5 551.3 L1258.8 549.9 L1263.0 548.2 L1267.2 546.3 L1271.5 545.1 L1275.7 543.4 L1280.0 541.4 L1284.7 540.7 L1288.9 538.4 L1293.3 536.9 L1297.8 535.6" fill="none" stroke="#f0b890" stroke-width="0.45" stroke-linejoin="round" opacity=".75"/>
<path d="M1301.9 683.7 L1303.2 679.1 L1305.5 675.0 L1307.4 670.7 L1309.1 666.3 L1310.5 661.8 L1311.7 657.7 L1313.7 653.9 L1315.3 649.9 L1317.1 646.1 L1320.6 643.6 L1324.8 642.2 L1327.9 639.0 L1331.8 637.3 L1335.5 635.1" fill="none" stroke="#f0b890" stroke-width="0.45" stroke-linejoin="round" opacity=".75"/>
<path d="M1226.7 629.8 L1221.8 629.5 L1217.0 629.2 L1212.2 630.2 L1207.4 629.8 L1202.6 631.2 L1197.7 632.3 L1193.2 634.5 L1188.2 635.3 L1184.0 637.7 L1179.4 639.2 L1175.5 642.2 L1171.0 643.9 L1169.7 647.7 L1168.5 651.6 L1166.8 655.2 L1168.0 659.3 L1169.4 663.2 L1170.4 667.2 L1170.9 671.4" fill="none" stroke="#f0b890" stroke-width="0.45" stroke-linejoin="round" opacity=".75"/>
<path d="M1283.5 712.2 L1288.1 711.8 L1292.5 710.6 L1297.0 709.6 L1301.4 708.0 L1306.0 707.4 L1310.5 706.2 L1315.2 705.7 L1319.8 704.4 L1324.5 703.8 L1329.1 702.9 L1333.8 702.3 L1338.3 700.5 L1342.8 699.3 L1347.6 698.9 L1352.1 697.1 L1356.0 696.1 L1359.6 694.2 L1363.6 693.5 L1367.5 692.6 L1371.2 690.7 L1375.2 690.0 L1379.3 688.7 L1383.6 687.9 L1387.8 686.5" fill="none" stroke="#f0b890" stroke-width="0.45" stroke-linejoin="round" opacity=".75"/>
<path d="M1200.1 571.5 L1204.4 570.9 L1208.5 569.6 L1212.8 568.9 L1216.9 567.5 L1221.7 565.8 L1226.4 564.0 L1231.2 562.5 L1235.4 561.6 L1239.3 559.7 L1243.4 558.8 L1247.3 556.8 L1251.4 555.8 L1256.0 557.0 L1260.7 558.1 L1265.1 559.9 L1269.8 560.8 L1274.3 562.5" fill="none" stroke="#f0b890" stroke-width="0.45" stroke-linejoin="round" opacity=".75"/>
<path d="M1159.1 548.3 L1160.9 544.6 L1163.1 541.0 L1165.4 537.7 L1167.4 534.1 L1169.7 530.7 L1173.2 527.4 L1177.1 524.6 L1180.2 520.9 L1183.2 517.0 L1186.2 513.2 L1188.4 508.8 L1191.5 505.0 L1193.7 501.0 L1195.6 497.0 L1198.5 493.5 L1200.5 489.5 L1203.3 486.2 L1206.2 483.1 L1209.3 480.1" fill="none" stroke="#f0b890" stroke-width="0.45" stroke-linejoin="round" opacity=".75"/>
<path d="M1119.2 528.7 L1121.8 532.0 L1123.8 535.8 L1125.9 539.5 L1127.8 543.3 L1131.1 546.3 L1133.8 549.8 L1137.2 552.8 L1140.6 555.7 L1143.9 559.4 L1146.9 563.5 L1149.9 567.5 L1153.1 571.0 L1155.2 575.4 L1158.5 578.8 L1162.1 581.1 L1165.3 583.8 L1168.9 586.2 L1172.3 588.7 L1176.1 590.7" fill="none" stroke="#f0b890" stroke-width="0.45" stroke-linejoin="round" opacity=".75"/>
<path d="M1259.2 573.9 L1255.9 577.0 L1252.1 579.3 L1248.4 581.7 L1243.7 582.5 L1239.0 583.4 L1234.1 583.1 L1229.4 584.2 L1225.0 583.8 L1220.7 582.7 L1216.3 582.5 L1211.8 582.5 L1207.5 581.4 L1203.1 579.7 L1198.7 578.1 L1194.2 576.6 L1190.1 574.3 L1185.5 574.0 L1181.0 572.7 L1176.3 572.7 L1171.8 571.4" fill="none" stroke="#f0b890" stroke-width="0.45" stroke-linejoin="round" opacity=".75"/>
<path d="M1221.3 729.4 L1219.1 733.3 L1216.6 736.9 L1214.0 740.5 L1211.7 744.2 L1211.6 748.4 L1210.5 752.5 L1210.5 756.7 L1209.5 760.8 L1209.2 765.0 L1207.0 768.9 L1205.4 773.1 L1202.9 776.9" fill="none" stroke="#f0b890" stroke-width="0.45" stroke-linejoin="round" opacity=".75"/>
<path d="M1181.6 706.4 L1180.0 710.8 L1177.9 715.0 L1175.4 719.1 L1173.7 723.4 L1169.3 725.4 L1164.9 727.3 L1160.2 728.7 L1155.9 731.0 L1151.7 732.9 L1147.3 734.4 L1142.9 736.0 L1138.6 737.8 L1134.2 739.1" fill="none" stroke="#f0b890" stroke-width="0.45" stroke-linejoin="round" opacity=".75"/>
<path d="M1155.8 768.8 L1151.9 767.1 L1148.2 764.9 L1145.0 762.1 L1141.2 760.1 L1139.6 756.1 L1138.1 752.1 L1136.6 748.1 L1134.2 744.5 L1132.7 740.4 L1132.4 736.3 L1132.1 732.2 L1130.8 728.2 L1130.6 724.1 L1127.1 720.2 L1123.4 716.5 L1119.6 712.9" fill="none" stroke="#f0b890" stroke-width="0.45" stroke-linejoin="round" opacity=".75"/>
<path d="M1131.0 636.2 L1132.6 632.0 L1133.6 627.7 L1134.2 623.3 L1133.8 618.8 L1134.3 614.3 L1133.6 609.8 L1133.9 605.3 L1133.9 600.7 L1133.0 595.7 L1131.8 590.7 L1131.5 585.5" fill="none" stroke="#f0b890" stroke-width="0.45" stroke-linejoin="round" opacity=".75"/>
<path d="M1217.0 605.3 L1215.1 609.1 L1213.2 612.9 L1211.0 616.5 L1209.0 620.3 L1208.4 624.3 L1207.6 628.2 L1206.5 632.1 L1205.5 635.9 L1204.6 639.8 L1205.4 644.1 L1205.2 648.4 L1206.2 652.6 L1206.8 656.8 L1206.7 661.2" fill="none" stroke="#f0b890" stroke-width="0.45" stroke-linejoin="round" opacity=".75"/>
<path d="M1212.5 716.4 L1207.5 717.6 L1202.3 718.5 L1197.2 719.4 L1193.0 720.4 L1188.7 720.5 L1184.4 721.0 L1180.1 721.8 L1175.8 722.5 L1169.9 723.1 L1164.0 724.3 L1159.4 722.7 L1155.2 720.2 L1150.8 718.0 L1147.0 715.7 L1143.0 713.6 L1139.5 710.8" fill="none" stroke="#f0b890" stroke-width="0.45" stroke-linejoin="round" opacity=".75"/>
<path d="M1216.3 525.1 L1212.5 527.1 L1208.8 529.3 L1204.8 530.6 L1201.0 532.4 L1198.4 536.3 L1196.0 540.4 L1193.7 544.4 L1191.2 548.4 L1188.5 552.3 L1187.0 556.7 L1184.7 560.7 L1182.5 564.8" fill="none" stroke="#f0b890" stroke-width="0.45" stroke-linejoin="round" opacity=".75"/>
<path d="M1194.3 594.3 L1198.5 594.0 L1202.5 592.9 L1206.5 591.9 L1210.7 591.6 L1214.8 590.7 L1218.1 587.4 L1221.9 584.5 L1225.6 581.6 L1229.4 578.8 L1232.6 575.3 L1236.1 573.1 L1239.8 571.2 L1243.4 569.1" fill="none" stroke="#f0b890" stroke-width="0.45" stroke-linejoin="round" opacity=".75"/>
<path d="M1265.1 599.6 L1267.1 603.8 L1269.6 607.6 L1272.2 611.4 L1274.7 615.2 L1277.2 619.1 L1280.1 622.7 L1282.6 626.6 L1285.4 629.9 L1288.2 633.1 L1290.3 636.9 L1293.3 639.9 L1297.3 642.6 L1301.9 644.2 L1305.9 647.0 L1310.3 648.8 L1314.1 650.4 L1317.4 652.7 L1320.6 655.2 L1324.0 657.4" fill="none" stroke="#f0b890" stroke-width="0.45" stroke-linejoin="round" opacity=".75"/>
<path d="M991.6 605.6 L988.8 602.2 L985.1 599.8 L981.9 596.8 L978.6 593.9 L975.8 590.6 L972.3 588.0 L969.3 584.7 L967.6 580.5 L966.1 576.2 L964.2 572.0 L962.5 567.8 L959.9 563.9 L959.1 559.3 L956.8 555.3 L954.5 551.1 L951.7 547.3 L948.6 543.6 L946.7 539.1 L943.6 535.5" fill="none" stroke="#f3d4a8" stroke-width="0.45" stroke-linejoin="round" opacity=".7"/>
<path d="M980.2 551.9 L978.0 548.3 L975.4 544.9 L973.2 541.3 L970.7 537.9 L968.4 534.4 L965.5 531.3 L963.5 527.5 L963.5 522.8 L964.5 518.2 L964.2 513.5 L965.4 508.9 L965.6 504.3 L965.5 499.6 L965.5 495.5 L965.6 491.3 L965.7 487.2 L966.0 483.1 L966.2 479.0 L966.6 474.9 L966.7 470.8" fill="none" stroke="#f3d4a8" stroke-width="0.45" stroke-linejoin="round" opacity=".7"/>
<path d="M1056.9 485.4 L1056.1 489.5 L1055.2 493.6 L1054.8 497.8 L1054.3 502.0 L1053.6 506.2 L1052.8 510.3 L1052.1 514.5 L1052.7 518.5 L1053.4 522.5 L1055.0 526.3 L1055.0 530.4 L1056.5 534.2 L1057.3 538.2 L1058.2 542.2 L1058.5 547.0 L1057.7 551.8 L1058.3 556.7 L1057.9 561.5 L1058.8 565.9 L1059.5 570.3 L1060.6 574.7 L1061.8 579.0 L1063.6 583.1 L1064.4 587.6" fill="none" stroke="#f3d4a8" stroke-width="0.45" stroke-linejoin="round" opacity=".7"/>
<path d="M1063.6 566.4 L1060.8 569.6 L1058.1 572.9 L1055.2 576.1 L1052.8 579.6 L1049.4 582.3 L1046.7 585.6 L1044.3 589.2 L1044.8 593.2 L1044.6 597.2 L1044.0 601.2 L1044.7 605.3 L1043.9 609.3 L1044.5 613.3 L1044.3 617.3 L1044.5 621.3 L1042.0 625.3 L1040.3 629.6 L1038.0 633.7 L1035.8 637.8 L1033.3 641.7" fill="none" stroke="#f3d4a8" stroke-width="0.45" stroke-linejoin="round" opacity=".7"/>
<path d="M1038.5 614.8 L1041.5 618.5 L1045.0 621.8 L1048.6 625.1 L1051.9 628.5 L1055.1 632.1 L1055.8 636.2 L1057.1 640.2 L1058.8 644.0 L1059.0 648.2 L1059.8 652.3 L1061.0 656.3 L1062.4 660.3 L1060.7 664.5 L1059.5 668.9 L1058.7 673.4 L1057.3 677.7 L1056.5 682.2 L1055.7 686.7 L1054.0 691.0 L1053.7 695.2 L1053.2 699.5 L1052.0 703.6 L1051.8 707.9 L1051.4 712.1 L1050.8 716.3 L1050.9 720.6 L1050.0 724.8" fill="none" stroke="#f3d4a8" stroke-width="0.45" stroke-linejoin="round" opacity=".7"/>
<path d="M1005.0 616.5 L1003.0 620.0 L1001.4 623.7 L999.8 627.5 L997.9 631.0 L995.7 634.5 L994.8 638.8 L994.1 643.1 L993.8 647.6 L992.4 651.8 L991.7 656.2 L990.4 660.4 L990.0 664.8 L990.6 669.1 L990.6 673.4 L989.8 677.8 L990.6 682.1 L990.2 686.4 L990.5 690.7 L990.8 695.0" fill="none" stroke="#f3d4a8" stroke-width="0.45" stroke-linejoin="round" opacity=".7"/>
<path d="M951.5 570.1 L955.2 572.5 L958.2 575.7 L961.8 578.2 L964.8 581.4 L968.8 583.4 L971.8 586.6 L974.9 589.3 L978.1 591.9 L981.5 594.2 L985.2 596.2 L988.2 599.0 L991.3 601.7 L994.8 603.9 L996.5 607.8 L997.4 611.9 L998.8 615.8 L1000.2 619.8 L1001.4 623.8 L1002.5 627.8 L1003.9 631.8 L1006.7 635.4 L1008.7 639.5 L1011.2 643.2 L1013.9 646.8 L1016.9 650.3 L1019.3 654.1 L1021.6 658.0 L1024.9 660.8 L1027.3 664.4 L1030.0 667.7 L1033.3 670.5 L1036.1 673.7" fill="none" stroke="#f3d4a8" stroke-width="0.45" stroke-linejoin="round" opacity=".7"/>
<path d="M980.2 605.9 L977.7 609.2 L975.1 612.5 L972.9 616.0 L970.8 619.6 L968.4 623.0 L966.6 626.8 L963.8 629.9 L961.9 633.6 L960.9 637.6 L960.0 641.7 L959.7 645.8 L959.6 649.9 L958.0 653.9 L958.0 658.0 L957.4 662.1 L956.3 666.1 L956.8 670.2 L957.5 674.3 L958.2 678.4 L959.3 682.4 L960.4 686.4 L961.8 690.3 L961.6 694.6 L962.9 698.6 L962.5 703.0 L961.7 707.4 L961.4 711.9 L960.9 716.3 L960.4 720.8 L959.6 725.2 L958.6 729.5" fill="none" stroke="#f3d4a8" stroke-width="0.45" stroke-linejoin="round" opacity=".7"/>
<path d="M973.2 562.6 L971.6 566.5 L969.8 570.3 L967.9 574.1 L966.0 577.8 L964.1 581.7 L962.8 585.7 L960.9 589.4 L958.7 592.8 L956.4 596.3 L954.2 599.7 L952.0 603.2 L949.3 606.3 L946.5 609.5 L943.2 612.0 L940.2 614.8 L936.6 617.0 L933.5 619.8 L930.1 622.2 L927.3 625.4 L923.0 626.3 L919.0 627.9 L914.9 629.1 L911.1 631.5 L907.0 632.7 L902.6 633.3 L898.7 635.2 L894.6 636.6" fill="none" stroke="#f3d4a8" stroke-width="0.45" stroke-linejoin="round" opacity=".7"/>
<path d="M931.4 630.6 L927.4 631.3 L923.4 631.2 L919.3 631.6 L915.3 631.8 L911.3 632.2 L907.2 632.1 L903.2 632.2 L899.2 632.7 L894.4 631.9 L889.6 631.6 L884.8 631.8 L880.1 630.7 L875.3 630.8 L871.5 628.4 L867.6 626.2 L863.4 624.5 L859.7 621.9 L855.7 619.8 L852.0 617.2 L848.1 615.0 L844.1 614.4 L840.0 614.5 L836.0 614.6 L832.0 614.7 L827.9 614.2 L823.8 616.1 L819.3 617.1 L815.5 619.8 L811.0 621.0 L806.9 622.8" fill="none" stroke="#f3d4a8" stroke-width="0.45" stroke-linejoin="round" opacity=".7"/>
<path d="M995.6 531.5 L998.2 535.5 L1000.5 539.6 L1002.6 544.0 L1005.2 547.9 L1007.4 552.1 L1010.6 554.8 L1013.7 557.6 L1017.4 559.8 L1020.1 563.0 L1023.7 565.1 L1026.8 567.9 L1029.8 570.8 L1032.8 574.4 L1035.9 577.9 L1039.4 580.9 L1043.1 583.8 L1046.1 587.4 L1049.2 590.7 L1052.4 593.9 L1055.0 597.7 L1058.6 600.5 L1061.5 604.1 L1064.6 606.7 L1067.0 610.0 L1069.8 612.9 L1072.7 615.8 L1075.6 618.6 L1078.0 621.9 L1081.2 624.4" fill="none" stroke="#f3d4a8" stroke-width="0.45" stroke-linejoin="round" opacity=".7"/>
<path d="M988.0 676.0 L986.1 679.7 L983.9 683.3 L981.1 686.5 L979.2 690.3 L976.6 693.6 L974.7 697.4 L972.3 700.8 L970.7 705.1 L969.0 709.2 L967.6 713.5 L966.0 717.7 L964.9 722.1 L963.0 726.3 L961.4 730.5 L959.5 734.4 L958.7 738.8 L956.8 742.8 L955.1 746.9 L953.9 751.1 L952.4 755.2 L950.5 759.2 L947.4 761.9 L944.7 765.0 L941.9 768.0 L939.2 771.1 L936.6 774.2 L933.4 776.8" fill="none" stroke="#f3d4a8" stroke-width="0.45" stroke-linejoin="round" opacity=".7"/>
<path d="M928.3 651.2 L924.0 651.7 L919.8 652.6 L915.6 653.7 L911.5 654.9 L907.4 656.3 L903.1 656.6 L899.0 657.7 L894.7 658.4 L891.6 660.8 L888.5 663.5 L884.7 665.0 L881.7 667.8 L878.5 670.1 L875.3 672.5 L870.6 672.6 L866.0 673.1 L861.4 674.1 L856.8 674.7 L852.1 674.9 L847.5 675.9 L844.0 677.9 L840.0 679.2 L836.9 682.0 L832.8 683.0 L829.3 685.2 L825.6 687.0 L822.1 689.0 L818.5 691.2 L816.0 694.6 L812.7 697.1 L809.2 699.5 L806.1 702.2 L803.2 705.1" fill="none" stroke="#f3d4a8" stroke-width="0.45" stroke-linejoin="round" opacity=".7"/>
<path d="M1002.8 635.7 L1001.0 631.4 L1000.4 626.7 L999.1 622.2 L997.9 617.8 L996.0 613.5 L992.2 610.4 L988.8 606.9 L985.5 603.4 L981.8 600.2 L980.9 596.2 L980.7 592.1 L980.2 588.1 L979.7 584.0 L979.1 580.0 L978.4 576.0 L977.5 572.0 L974.3 569.0 L971.7 565.5 L968.3 562.7 L965.0 559.7 L961.9 556.7 L959.3 553.1 L956.2 550.1" fill="none" stroke="#f3d4a8" stroke-width="0.45" stroke-linejoin="round" opacity=".7"/>
<path d="M1087.2 482.5 L1088.9 486.2 L1090.8 489.7 L1091.7 493.7 L1093.3 497.4 L1094.9 501.1 L1096.1 505.0 L1098.3 509.2 L1100.6 513.3 L1102.9 517.3 L1106.9 516.3 L1111.2 515.9 L1115.2 514.7 L1119.0 512.5 L1123.1 511.7 L1123.2 516.3 L1124.9 520.7 L1125.3 525.2 L1121.5 526.8 L1118.6 529.7 L1122.4 531.3 L1125.5 533.9 L1128.3 537.1 L1131.9 538.9 L1135.2 541.2 L1138.8 543.2 L1143.2 541.5 L1147.8 540.9 L1151.7 539.1 L1156.3 539.5 L1160.0 536.8 L1164.1 535.9 L1168.4 535.2 L1172.5 534.2 L1173.1 539.9 L1174.8 545.4 L1172.2 548.6 L1169.5 551.7 L1167.6 555.2 L1165.8 558.9 L1168.7 562.2 L1170.8 566.1 L1174.4 568.8 L1177.0 572.4 L1181.0 575.7 L1183.7 580.0" fill="none" stroke="#3c5c9c" stroke-width="0.6" stroke-linejoin="round" />
<path d="M1078.2 482.5 L1074.8 485.1 L1072.3 488.4 L1069.9 491.8 L1067.4 495.1 L1064.7 498.2 L1061.4 501.4 L1057.8 504.0 L1054.4 507.0 L1050.8 509.6 L1046.7 511.7 L1042.2 513.3 L1037.5 514.0 L1033.2 516.2 L1032.0 520.6 L1032.3 525.2 L1031.6 529.7 L1031.5 534.2 L1031.0 538.7 L1026.7 539.8 L1022.5 541.5 L1018.2 542.7 L1014.1 544.5 L1010.0 546.4 L1005.9 548.2 L1001.8 549.9 L1003.5 553.7 L1004.1 557.8 L1005.3 561.7 L1006.3 565.6 L1009.1 570.2 L1011.3 575.0 L1013.0 580.0" fill="none" stroke="#3c5c9c" stroke-width="0.6" stroke-linejoin="round" />
<path d="M1031.0 538.7 L1035.2 538.8 L1039.4 538.7 L1043.5 539.9 L1047.7 539.7 L1051.8 541.2 L1056.0 540.9 L1060.2 540.9 L1063.9 542.8 L1067.7 544.6 L1071.5 546.4 L1075.4 547.9 L1078.5 551.0 L1082.7 552.2 L1086.7 550.5 L1090.0 547.9 L1093.6 545.6 L1096.7 542.6 L1100.6 540.9 L1104.7 542.3 L1108.9 543.1 L1112.9 544.7 L1116.8 546.5 L1120.8 547.7 L1125.2 546.0 L1129.7 545.0 L1134.4 544.7 L1138.8 543.2" fill="none" stroke="#3c5c9c" stroke-width="0.6" stroke-linejoin="round" />
<path d="M1208.5 490.4 L1208.5 494.7 L1207.7 499.1 L1209.1 503.4 L1209.2 507.7 L1207.7 512.0 L1208.3 516.4 L1208.5 520.7 L1206.3 524.6 L1204.8 528.8 L1203.6 533.1 L1200.5 536.5 L1199.5 540.9 L1201.0 544.7 L1201.8 548.7 L1204.0 552.2 L1207.8 553.4 L1211.3 555.4 L1214.7 557.6 L1218.5 558.9 L1221.9 561.1 L1225.7 559.4 L1228.4 556.3 L1231.6 553.8 L1235.4 552.2 L1237.6 548.6 L1240.5 545.6 L1244.1 543.2 L1246.7 540.0 L1248.9 536.4 L1253.5 535.0 L1257.8 532.9 L1262.1 530.6 L1266.9 529.7 L1270.6 527.9 L1273.2 524.6 L1276.7 522.5 L1280.3 520.7 L1283.4 517.9 L1287.0 515.8 L1289.4 512.2 L1292.4 509.3 L1296.1 507.2 L1299.6 504.8 L1301.4 500.6 L1305.0 498.2" fill="none" stroke="#3c5c9c" stroke-width="0.6" stroke-linejoin="round" />
<path d="M1248.9 536.4 L1249.1 540.7 L1250.8 544.7 L1251.2 548.9 L1252.0 553.0 L1252.2 557.3 L1252.0 561.6 L1253.4 565.6 L1254.3 570.6 L1256.3 575.2 L1257.9 580.0" fill="none" stroke="#3c5c9c" stroke-width="0.6" stroke-linejoin="round" />
<path d="M885.0 596.3 L889.4 595.2 L893.9 595.0 L898.4 594.8 L903.0 595.4 L907.5 595.2 L912.0 594.1 L916.0 592.5 L920.2 592.2 L924.6 592.5 L928.5 590.3 L932.7 589.3 L936.9 588.9 L941.2 588.5 L945.4 587.8 L949.1 585.4 L953.4 584.8 L957.1 582.4 L961.4 581.7 L965.8 582.5 L970.4 582.1 L974.8 583.4 L979.3 584.1 L983.8 584.8 L988.3 584.5 L992.8 585.1 L997.4 585.7 L1001.8 584.4 L1006.3 585.1 L1010.8 584.0 L1011.5 579.5 L1010.8 575.0" fill="none" stroke="#3c5c9c" stroke-width="0.6" stroke-linejoin="round" />
<path d="M992.8 585.1 L992.6 589.6 L994.8 593.7 L995.1 598.0 L995.0 602.5 L995.3 606.9 L997.1 611.0 L997.3 615.4 L1000.8 618.1 L1004.8 619.9 L1009.0 621.4 L1012.7 623.8 L1016.5 625.9 L1019.8 628.9 L1023.9 629.2 L1027.6 631.2 L1031.7 631.5 L1035.6 632.5 L1039.6 633.4 L1043.8 633.2 L1047.7 634.5 L1051.7 635.2 L1055.7 635.6 L1059.6 638.2 L1064.2 639.5 L1067.5 643.0 L1072.2 644.1 L1075.9 646.9 L1079.8 644.0 L1084.0 641.5 L1088.0 638.8 L1091.6 635.6 L1092.0 631.6 L1090.9 627.6 L1090.6 623.5 L1091.2 619.5 L1090.5 615.4 L1095.4 613.5 L1100.6 613.2 L1102.3 616.9 L1105.4 619.7 L1107.5 623.2 L1109.6 626.7 L1114.2 627.7 L1118.5 629.7 L1123.3 630.1 L1127.8 631.4 L1132.1 633.4 L1136.1 629.4 L1141.1 626.7 L1138.2 623.3 L1136.8 619.1 L1134.3 615.4 L1138.5 615.9 L1142.3 613.6 L1146.4 614.0 L1150.5 613.4 L1154.5 613.2 L1158.0 615.8 L1161.1 618.8 L1164.6 621.3 L1167.5 624.6 L1170.9 627.3 L1174.3 629.9 L1177.0 633.4 L1181.4 632.3 L1186.1 633.3 L1190.5 632.4 L1195.1 632.5 L1199.5 631.2 L1203.1 633.3 L1207.0 634.8 L1211.2 635.5 L1215.1 636.9 L1218.4 640.0 L1222.4 641.1 L1226.4 642.4 L1229.8 645.4 L1234.0 647.3 L1236.9 650.9 L1240.8 653.2 L1244.4 655.9 L1242.8 659.6 L1240.3 662.9 L1237.0 665.5 L1235.4 669.3 L1239.8 670.7 L1244.6 670.9 L1249.1 672.0 L1253.4 673.8 L1257.4 674.3 L1261.5 673.6 L1265.5 673.8 L1269.5 673.2 L1273.6 673.3 L1277.6 673.8 L1281.7 673.7 L1285.7 673.3 L1289.8 673.2 L1293.8 673.8 L1298.4 677.1 L1302.8 680.6" fill="none" stroke="#3c5c9c" stroke-width="0.6" stroke-linejoin="round" />
<path d="M1091.6 635.6 L1095.3 638.3 L1098.5 641.4 L1101.1 645.0 L1104.8 647.7 L1107.4 651.4 L1107.4 655.5 L1107.8 659.5 L1108.4 663.5 L1108.4 667.6 L1110.2 671.5 L1110.2 675.6 L1110.7 679.7 L1111.7 683.6 L1110.8 687.8 L1111.9 691.8 L1111.2 696.0 L1108.2 699.4 L1107.4 703.5 L1106.2 707.5" fill="none" stroke="#3c5c9c" stroke-width="0.6" stroke-linejoin="round" />
<path d="M1111.9 691.8 L1115.6 694.4 L1120.3 694.7 L1123.7 697.8 L1127.7 699.8 L1132.1 700.8 L1133.9 704.8 L1136.4 708.3 L1138.6 712.2 L1141.1 715.7 L1142.8 719.8 L1145.6 723.2 L1149.8 722.1 L1153.9 720.8 L1158.0 719.2 L1162.3 718.3 L1166.5 717.0 L1170.8 716.3 L1174.8 714.3 L1171.8 709.5 L1168.0 705.3 L1170.0 701.7 L1172.8 698.8 L1174.4 694.9 L1177.0 691.8 L1181.5 690.6 L1186.0 689.6 L1190.6 688.8 L1195.0 687.3 L1195.1 682.7 L1196.1 678.2 L1197.1 673.7 L1198.8 669.4 L1199.5 664.8 L1202.5 661.6 L1206.3 659.3 L1210.0 657.0 L1212.9 653.5 L1216.0 650.4 L1219.8 648.1 L1222.9 645.1 L1226.4 642.4" fill="none" stroke="#3c5c9c" stroke-width="0.6" stroke-linejoin="round" />
<path d="M1174.8 714.3 L1176.0 718.7 L1177.6 723.1 L1177.8 727.8 L1179.5 732.2 L1179.5 736.9 L1181.5 741.2 L1185.1 743.0 L1188.5 745.1 L1191.9 747.3 L1195.5 749.2 L1199.5 750.2 L1201.4 753.9 L1201.0 758.3 L1203.5 761.8 L1204.0 765.9" fill="none" stroke="#3c5c9c" stroke-width="0.6" stroke-linejoin="round" />
<path d="M1199.5 750.2 L1203.4 749.1 L1206.9 747.1 L1210.1 744.4 L1214.0 743.4 L1217.5 741.3 L1221.0 739.3 L1224.7 737.8 L1228.2 735.8 L1231.9 734.3 L1235.4 732.2 L1239.3 731.1 L1242.6 728.4 L1246.7 728.0 L1250.5 726.6 L1254.4 725.4 L1257.9 723.2 L1259.3 727.0 L1260.8 730.8 L1263.0 734.2 L1264.4 738.0 L1264.7 742.2 L1266.9 745.7 L1265.9 750.0 L1262.8 753.3 L1262.4 757.8 L1260.3 761.5 L1258.2 765.3 L1257.5 769.6 L1255.1 773.3 L1253.4 777.2 L1250.6 781.4 L1249.1 786.2 L1246.6 790.6" fill="none" stroke="#3c5c9c" stroke-width="0.6" stroke-linejoin="round" />
<path d="M1235.4 732.2 L1235.2 728.1 L1235.4 723.9 L1237.3 720.0 L1236.2 715.7 L1237.6 711.7 L1237.9 707.5 L1237.6 703.4 L1238.5 699.3 L1239.1 695.2 L1238.6 691.0 L1239.1 686.9 L1239.9 682.8 L1243.7 681.2 L1246.3 677.9 L1250.0 676.1 L1253.4 673.8" fill="none" stroke="#3c5c9c" stroke-width="0.6" stroke-linejoin="round" />
<path d="M1266.9 745.7 L1270.5 744.0 L1274.4 742.8 L1278.1 741.2 L1281.6 739.4 L1285.2 737.5 L1288.8 735.7 L1292.1 733.2 L1296.1 732.2 L1296.6 728.1 L1296.7 724.0 L1297.6 719.9 L1297.3 715.7 L1297.2 711.6 L1298.1 707.5 L1299.3 703.5 L1299.0 699.3 L1299.7 695.2 L1299.0 691.0 L1299.7 686.9 L1300.5 682.8" fill="none" stroke="#3c5c9c" stroke-width="0.6" stroke-linejoin="round" />
<path d="M1199.5 575.0 L1199.1 579.6 L1198.0 584.0 L1197.9 588.6 L1195.7 592.8 L1196.0 597.5 L1195.0 602.0 L1196.5 606.0 L1196.7 610.2 L1196.9 614.5 L1197.3 618.7 L1197.6 622.9 L1199.6 626.9 L1199.5 631.2" fill="none" stroke="#3c5c9c" stroke-width="0.6" stroke-linejoin="round" />
<path d="M1253.4 575.0 L1252.5 579.5 L1252.7 584.0 L1253.3 588.5 L1253.1 593.0 L1253.7 597.5 L1254.0 602.0 L1253.4 606.4 L1252.3 610.6 L1248.9 613.6 L1247.1 617.4 L1246.0 621.5 L1243.9 625.1 L1242.1 628.9 L1242.6 633.4 L1242.6 637.9 L1244.0 642.3 L1243.2 646.9 L1244.6 651.3 L1244.4 655.9" fill="none" stroke="#3c5c9c" stroke-width="0.6" stroke-linejoin="round" />
<path d="M1253.4 606.4 L1257.4 605.9 L1261.4 605.3 L1265.4 605.0 L1269.3 603.9 L1273.1 602.4 L1277.3 602.9 L1281.2 601.4 L1285.2 601.0 L1289.2 600.8 L1293.3 600.4 L1297.0 598.1 L1301.0 598.1 L1305.0 597.5" fill="none" stroke="#3c5c9c" stroke-width="0.6" stroke-linejoin="round" />
</g>
<path d="M885.0 667.1 L889.5 666.3 L894.0 666.0 L898.0 668.1 L901.3 671.4 L905.2 673.8 L908.7 675.0 L911.5 677.5 L914.8 679.0 L918.1 680.4 L920.9 682.8 L924.3 685.1 L928.1 686.7 L931.1 689.5 L934.4 691.8 L938.6 692.9 L942.5 694.6 L946.3 696.7 L950.1 698.5 L954.0 699.3 L958.0 698.5 L962.0 698.9 L965.9 699.7 L969.8 699.6 L973.8 699.8 L977.7 698.9 L981.6 698.5 L984.0 703.0 L986.1 707.5 L990.0 704.1 L992.8 699.7 L997.1 697.8 L1001.9 698.0 L1006.3 696.3 L1010.2 697.5 L1014.0 698.8 L1017.5 700.8 L1020.3 704.2 L1022.3 708.1 L1024.3 712.0 L1027.9 712.5 L1031.5 711.5 L1035.0 712.1 L1038.6 712.2 L1042.2 712.0 L1045.5 710.1 L1049.0 708.7 L1052.0 706.3 L1055.7 705.3 L1058.7 702.4 L1062.2 700.4 L1066.0 698.8 L1069.2 696.3 L1073.7 696.6 L1078.2 696.7 L1082.7 697.4 L1086.0 699.2 L1089.4 700.8 L1091.0 696.3 L1092.8 691.8 L1096.9 693.8 L1100.6 696.3 L1102.1 700.2 L1104.1 703.9 L1106.2 707.5 L1107.0 711.2 L1106.9 715.0 L1107.4 718.8 L1105.8 722.5 L1103.8 726.0 L1102.9 730.0 L1099.6 732.7 L1097.1 736.2 L1093.9 739.0 L1092.8 743.4 L1093.8 748.0 L1092.8 752.4 L1096.4 752.0 L1100.1 752.3 L1103.7 751.1 L1107.4 751.3 L1108.7 754.7 L1110.8 757.8 L1111.2 761.5 L1112.4 765.0 L1114.1 768.2 L1115.5 772.0 L1116.5 775.9 L1118.6 779.4 L1122.5 780.6 L1126.0 782.7 L1129.8 783.9 L1134.3 785.2 L1138.8 786.1 L1144.4 787.3 L1144.2 783.1 L1143.6 779.0 L1143.3 774.9 L1147.3 773.9 L1151.1 772.6 L1154.5 770.4 L1159.0 769.6 L1163.6 769.2 L1168.0 768.2 L1171.8 766.4 L1176.0 766.2 L1179.9 765.0 L1183.7 763.7 L1187.5 762.7 L1190.5 760.3 L1193.7 762.2 L1197.4 762.8 L1200.7 764.4 L1204.0 765.9 L1205.2 769.8 L1207.7 773.1 L1208.5 777.2 L1211.8 778.2 L1215.4 778.9 L1218.8 779.9 L1221.9 781.6 L1225.7 781.6 L1229.0 783.4 L1232.8 783.1 L1236.4 783.9 L1239.9 785.0 L1243.4 787.7 L1246.6 790.6 L1247.8 795.3 L1250.0 799.6 L1251.3 796.3 L1253.7 793.6 L1255.6 790.6 L1259.4 789.6 L1263.3 789.0 L1266.9 787.3 L1270.4 786.0 L1273.8 784.4 L1276.8 781.9 L1280.3 780.5 L1283.6 778.4 L1287.0 776.4 L1290.7 775.2 L1293.8 772.7 L1297.5 771.6 L1300.3 768.8 L1303.7 767.1 L1307.3 765.9 L1306.9 762.4 L1306.9 758.9 L1307.3 755.4 L1307.4 751.9 L1306.9 748.4 L1306.5 744.9 L1307.2 741.4 L1307.1 737.9 L1307.4 734.4 L1308.0 730.9 L1307.6 727.4 L1307.3 723.9 L1307.5 720.3 L1307.6 716.8 L1306.6 713.3 L1307.9 709.8 L1307.7 706.3 L1307.9 702.8 L1307.8 699.3 L1307.1 695.8 L1307.1 692.3 L1306.6 688.8 L1307.5 685.3 L1306.6 681.8 L1306.6 678.3 L1306.8 674.8 L1306.7 671.3 L1307.0 667.8 L1306.6 664.2 L1306.5 660.7 L1306.7 657.2 L1306.6 653.7 L1307.1 650.2 L1306.5 646.7 L1307.9 643.2 L1307.5 639.7 L1306.7 636.2 L1306.9 632.7 L1307.0 629.2 L1307.1 625.7 L1306.7 622.2 L1307.8 618.7 L1308.1 615.2 L1307.2 611.7 L1307.3 608.1 L1306.6 604.6 L1306.6 601.1 L1307.0 597.6 L1306.9 594.1 L1307.8 590.6 L1306.7 587.1 L1306.5 583.6 L1308.0 580.1 L1307.3 576.6 L1306.7 573.1 L1307.4 569.6 L1306.5 566.1 L1307.3 562.6 L1308.0 559.1 L1307.9 555.6 L1307.6 552.0 L1306.9 548.5 L1307.1 545.0 L1306.7 541.5 L1307.7 538.0 L1307.3 534.5 L1307.7 531.0 L1307.0 527.5 L1306.8 524.0 L1307.8 520.5 L1308.1 517.0 L1307.8 513.5 L1307.8 510.0 L1307.8 506.5 L1307.7 503.0 L1306.8 499.5 L1307.3 495.9 L1307.1 492.4 L1306.5 488.9 L1306.5 485.4 L1306.9 481.9 L1306.9 478.4 L1307.6 474.9 L1308.0 471.4 L1307.2 467.9 L1308.0 464.4 L1308.1 460.9 L1308.0 457.4 L1307.1 453.9 L1306.8 450.4 L1306.8 446.9 L1306.8 443.4 L1307.3 439.8 L1303.8 442.5 L1299.7 444.2 L1296.1 446.6 L1292.3 445.9 L1288.6 446.0 L1284.8 446.6 L1280.3 445.9 L1275.9 444.8 L1271.3 444.3 L1269.0 447.9 L1268.2 452.1 L1265.7 455.6 L1267.4 459.4 L1268.9 463.4 L1271.3 466.8 L1267.7 468.7 L1264.4 471.0 L1261.3 473.6 L1257.9 475.8 L1255.0 477.8 L1251.4 478.5 L1248.6 480.7 L1245.1 481.6 L1242.1 483.6 L1238.4 483.6 L1235.0 485.2 L1231.4 485.8 L1227.6 485.6 L1224.2 487.0 L1220.2 487.5 L1216.4 489.2 L1212.5 490.1 L1208.5 490.4 L1205.3 492.3 L1201.5 492.6 L1198.2 494.1 L1195.0 496.0 L1191.8 498.0 L1188.0 498.5 L1184.9 500.5 L1179.2 497.1 L1175.8 495.7 L1172.1 495.5 L1168.4 495.3 L1164.9 494.4 L1161.3 493.8 L1157.2 492.9 L1153.2 491.7 L1149.7 488.8 L1145.6 488.1 L1142.3 486.8 L1138.8 485.9 L1135.7 484.1 L1132.1 483.6 L1127.6 484.1 L1123.0 483.8 L1118.6 484.8 L1114.2 483.9 L1109.6 484.5 L1105.1 483.6 L1101.5 483.6 L1097.9 483.1 L1094.3 482.7 L1090.8 481.7 L1087.2 481.4 L1082.7 482.3 L1078.2 482.5 L1075.8 479.2 L1073.2 476.1 L1072.0 472.1 L1069.2 469.0 L1067.8 465.4 L1066.9 461.6 L1065.8 457.8 L1062.5 455.8 L1059.4 453.5 L1055.7 452.2 L1052.3 450.6 L1049.3 448.2 L1045.6 447.1 L1042.2 445.5 L1038.6 445.0 L1035.0 444.5 L1031.4 444.9 L1027.8 443.8 L1024.3 443.2 L1019.7 443.0 L1015.1 442.5 L1010.8 441.0 L1009.5 436.9 L1007.4 433.1 L1008.4 429.2 L1010.4 425.6 L1011.9 421.9 L1011.1 417.3 L1009.7 412.9 L1007.5 409.5 L1004.9 406.3 L1002.9 402.8 L1000.3 400.1 L997.7 397.5 L995.1 394.9 L991.6 392.3 L987.3 391.0 L983.8 388.2 L980.1 385.9 L976.1 384.0 L972.6 381.4 L971.7 377.0 L971.5 372.5 L965.9 372.5 L962.3 373.8 L959.1 375.8 L955.7 379.8 L952.4 383.7 L948.7 387.0 L945.2 390.4 L944.6 394.3 L944.2 398.3 L944.8 402.2 L944.5 406.2 L941.0 408.8 L937.8 411.8 L933.7 411.0 L929.6 410.3 L925.4 409.5 L921.0 408.5 L916.4 408.1 L912.0 407.3 L910.4 410.6 L909.0 414.0 L907.5 417.4 L905.7 421.1 L904.9 425.2 L903.5 429.0 L903.0 433.1 L904.0 437.3 L906.3 441.0 L902.4 440.8 L898.5 439.8 L894.0 440.5 L889.4 440.6 L885.0 442.1 L890.0 439.8 L885.9 441.0 L882.4 443.8 L878.5 445.5 L874.3 446.6 L876.6 449.5 L879.4 452.2 L881.1 455.6 L882.1 459.5 L883.1 463.5 L882.8 467.7 L883.3 471.8 L884.4 475.8 L882.3 478.6 L881.8 482.3 L879.4 485.1 L877.9 488.3 L876.6 491.5 L873.5 493.9 L869.5 494.7 L866.1 496.5 L863.3 499.4 L859.4 500.2 L856.3 502.7 L852.8 504.7 L849.2 506.4 L845.2 507.4 L841.7 509.5 L838.4 511.7 L835.7 514.4 L832.4 516.3 L829.4 518.5 L824.3 517.9 L819.3 517.3 L815.4 518.7 L811.4 519.6 L808.0 522.6 L804.1 525.1 L800.2 527.4 L798.0 530.3 L797.1 533.8 L794.6 536.4 L795.6 540.2 L796.9 543.9 L797.9 547.7 L802.6 548.0 L806.9 549.9 L808.6 553.2 L809.6 556.7 L811.1 560.0 L812.5 563.4 L810.2 566.7 L806.9 569.0 L809.5 571.5 L812.7 573.1 L815.9 574.6 L820.0 578.0 L824.9 580.0 L824.9 584.0 L828.5 585.1 L831.8 587.0 L835.3 588.4 L838.4 590.7 L842.0 592.6 L846.0 593.4 L849.6 595.2 L850.9 598.8 L851.2 602.7 L851.9 606.4 L856.0 609.3 L860.8 610.9 L858.7 614.1 L857.5 617.7 L860.4 620.4 L863.1 623.3 L865.3 626.7 L864.1 631.1 L864.2 635.6 L859.7 635.5 L855.2 635.6 L855.5 640.2 L856.3 644.6 L859.2 648.0 L861.4 651.8 L863.1 655.9 L866.7 657.6 L870.6 658.7 L874.3 660.4 L877.5 662.1 L879.5 665.4 L882.6 667.3 L885.5 669.3 L890.0 671.6Z" fill="none" stroke="#2a62e8" stroke-width="1.3" stroke-linejoin="round"/>
<g font-family="Liberation Sans, Noto Sans CJK SC, sans-serif" stroke="#fff" stroke-width="0.6" paint-order="stroke" stroke-opacity=".7">
<text x="525.0" y="406.6" font-size="5.6" fill="#4a4a4a" font-weight="normal" text-anchor="middle" >阿特劳</text>
<text x="483.9" y="419.4" font-size="5.6" fill="#4a4a4a" font-weight="normal" text-anchor="middle" >特拉罕</text>
<text x="515.6" y="465.7" font-size="5.6" fill="#4a4a4a" font-weight="normal" text-anchor="middle" >阿克套</text>
<text x="508.2" y="526.3" font-size="5.6" fill="#4a4a4a" font-weight="normal" text-anchor="middle" >巴库</text>
<text x="496.5" y="565.4" font-size="5.6" fill="#4a4a4a" font-weight="normal" text-anchor="middle" >拉什特</text>
<text x="611.1" y="475.1" font-size="5.6" fill="#4a4a4a" font-weight="normal" text-anchor="middle" >昆格勒</text>
<text x="620.9" y="484.5" font-size="5.6" fill="#4a4a4a" font-weight="normal" text-anchor="middle" >努库斯</text>
<text x="625.0" y="494.4" font-size="5.6" fill="#4a4a4a" font-weight="normal" text-anchor="middle" >达沙古兹</text>
<text x="605.4" y="555.1" font-size="5.6" fill="#4a4a4a" font-weight="normal" text-anchor="middle" >阿什哈巴德</text>
<text x="648.6" y="560.5" font-size="5.6" fill="#4a4a4a" font-weight="normal" text-anchor="middle" >木鹿</text>
<text x="694.2" y="445.2" font-size="5.6" fill="#4a4a4a" font-weight="normal" text-anchor="middle" >克孜勒奥尔达</text>
<text x="744.5" y="486.9" font-size="6" fill="#333" font-weight="bold" text-anchor="middle" >希姆肯特</text>
<text x="740.7" y="513.0" font-size="6" fill="#333" font-weight="bold" text-anchor="middle" >塔什干</text>
<text x="779.1" y="511.5" font-size="5.6" fill="#4a4a4a" font-weight="normal" text-anchor="middle" >安集延</text>
<text x="680.0" y="527.2" font-size="5.6" fill="#4a4a4a" font-weight="normal" text-anchor="middle" >布哈拉</text>
<text x="712.1" y="529.0" font-size="5.6" fill="#4a4a4a" font-weight="normal" text-anchor="middle" >撒马尔罕</text>
<text x="735.0" y="544.9" font-size="6" fill="#333" font-weight="bold" text-anchor="middle" >杜尚别</text>
<text x="806.9" y="477.4" font-size="5.6" fill="#4a4a4a" font-weight="normal" text-anchor="middle" >比什凯克</text>
<text x="836.1" y="471.7" font-size="6" fill="#333" font-weight="bold" text-anchor="middle" >阿拉木图</text>
<text x="713.9" y="573.9" font-size="5.6" fill="#4a4a4a" font-weight="normal" text-anchor="middle" >马扎里沙里夫</text>
<text x="620.5" y="578.9" font-size="5.6" fill="#4a4a4a" font-weight="normal" text-anchor="middle" >马什哈德</text>
<text x="789.0" y="358.8" font-size="5.6" fill="#4a4a4a" font-weight="normal" text-anchor="middle" >阿斯塔纳</text>
<text x="877.0" y="505.6" font-size="5.4" fill="#8a949e" font-weight="normal" text-anchor="middle" >阿克苏市</text>
<text x="824.4" y="531.6" font-size="5.4" fill="#8a949e" font-weight="normal" text-anchor="middle" >喀什市</text>
<text x="1124.9" y="361.4" font-size="5.6" fill="#4a4a4a" font-weight="normal" text-anchor="middle" >木伦</text>
<text x="1196.1" y="363.7" font-size="5.6" fill="#4a4a4a" font-weight="normal" text-anchor="middle" >达尔汗</text>
<text x="1173.0" y="372.7" font-size="5.6" fill="#4a4a4a" font-weight="normal" text-anchor="middle" >额尔登特</text>
<text x="1209.1" y="391.7" font-size="6" fill="#333" font-weight="bold" text-anchor="middle" >乌兰巴托</text>
<text x="1018.9" y="390.7" font-size="5.6" fill="#4a4a4a" font-weight="normal" text-anchor="middle" >科布多</text>
<text x="1083.8" y="395.1" font-size="5.6" fill="#4a4a4a" font-weight="normal" text-anchor="middle" >乌里雅苏台</text>
<text x="1141.1" y="400.1" font-size="5.6" fill="#4a4a4a" font-weight="normal" text-anchor="middle" >车车尔勒格</text>
<text x="1255.6" y="402.8" font-size="5.6" fill="#4a4a4a" font-weight="normal" text-anchor="middle" >成吉思市</text>
<text x="1288.2" y="413.8" font-size="5.6" fill="#4a4a4a" font-weight="normal" text-anchor="middle" >西乌尔特</text>
<text x="1075.9" y="419.4" font-size="5.6" fill="#4a4a4a" font-weight="normal" text-anchor="middle" >阿尔泰</text>
<text x="1157.7" y="421.2" font-size="5.6" fill="#4a4a4a" font-weight="normal" text-anchor="middle" >阿尔拜赫雷</text>
<text x="1248.9" y="444.6" font-size="5.6" fill="#4a4a4a" font-weight="normal" text-anchor="middle" >赛音山达</text>
<text x="1178.1" y="466.6" font-size="5.6" fill="#4a4a4a" font-weight="normal" text-anchor="middle" >达兰扎达嘎德</text>
<text x="974.8" y="393.7" font-size="5.4" fill="#8a949e" font-weight="normal" text-anchor="middle" >阿勒泰市</text>
<text x="918.7" y="426.1" font-size="5.4" fill="#8a949e" font-weight="normal" text-anchor="middle" >托里县</text>
<text x="934.4" y="448.1" font-size="5.4" fill="#8a949e" font-weight="normal" text-anchor="middle" >胡杨河市</text>
<text x="968.6" y="462.2" font-size="5.8" fill="#78828c" font-weight="normal" text-anchor="middle" >乌鲁木齐市</text>
<text x="988.3" y="476.8" font-size="5.4" fill="#8a949e" font-weight="normal" text-anchor="middle" >吐鲁番市</text>
<text x="1042.2" y="479.1" font-size="5.4" fill="#8a949e" font-weight="normal" text-anchor="middle" >哈密市</text>
<text x="975.3" y="538.4" font-size="5.4" fill="#8a949e" font-weight="normal" text-anchor="middle" >若羌县</text>
<text x="1126.5" y="551.4" font-size="5.4" fill="#8a949e" font-weight="normal" text-anchor="middle" >德令哈</text>
<text x="1150.7" y="561.0" font-size="5.8" fill="#1f3a6e" font-weight="bold" text-anchor="middle" >甘肃省</text>
<text x="1276.3" y="562.8" font-size="5.8" fill="#1f3a6e" font-weight="bold" text-anchor="middle" >山西省</text>
<text x="976.0" y="493.6" font-size="5.8" fill="#1f3a6e" font-weight="bold" text-anchor="middle" >新疆维吾尔自治区</text>
<text x="518.3" y="587.9" font-size="6" fill="#333" font-weight="bold" text-anchor="middle" >德黑兰</text>
<text x="512.2" y="603.5" font-size="5.6" fill="#4a4a4a" font-weight="normal" text-anchor="middle" >库姆</text>
<text x="497.0" y="611.8" font-size="5.6" fill="#4a4a4a" font-weight="normal" text-anchor="middle" >阿拉克</text>
<text x="522.1" y="631.6" font-size="5.6" fill="#4a4a4a" font-weight="normal" text-anchor="middle" >伊斯法罕</text>
<text x="555.4" y="642.8" font-size="5.6" fill="#4a4a4a" font-weight="normal" text-anchor="middle" >亚兹德</text>
<text x="589.0" y="665.3" font-size="5.6" fill="#4a4a4a" font-weight="normal" text-anchor="middle" >克尔曼</text>
<text x="532.9" y="674.3" font-size="5.6" fill="#4a4a4a" font-weight="normal" text-anchor="middle" >设拉子</text>
<text x="491.3" y="678.1" font-size="5.6" fill="#4a4a4a" font-weight="normal" text-anchor="middle" >科威特市</text>
<text x="485.3" y="650.7" font-size="5.6" fill="#4a4a4a" font-weight="normal" text-anchor="middle" >阿瓦士</text>
<text x="578.9" y="707.3" font-size="5.6" fill="#4a4a4a" font-weight="normal" text-anchor="middle" >阿巴斯港</text>
<text x="636.2" y="676.5" font-size="5.6" fill="#4a4a4a" font-weight="normal" text-anchor="middle" >扎黑丹</text>
<text x="616.0" y="629.4" font-size="5.6" fill="#4a4a4a" font-weight="normal" text-anchor="middle" >比尔詹德</text>
<text x="653.1" y="608.0" font-size="5.6" fill="#4a4a4a" font-weight="normal" text-anchor="middle" >赫拉特</text>
<text x="685.2" y="585.6" font-size="5.6" fill="#4a4a4a" font-weight="normal" text-anchor="middle" >迈马纳</text>
<text x="691.2" y="605.8" font-size="5.6" fill="#4a4a4a" font-weight="normal" text-anchor="middle" >恰赫恰兰</text>
<text x="698.7" y="632.7" font-size="5.6" fill="#4a4a4a" font-weight="normal" text-anchor="middle" >塔林库特</text>
<text x="696.4" y="647.1" font-size="5.6" fill="#4a4a4a" font-weight="normal" text-anchor="middle" >坎大哈</text>
<text x="712.6" y="666.4" font-size="5.6" fill="#4a4a4a" font-weight="normal" text-anchor="middle" >奎达</text>
<text x="739.5" y="604.8" font-size="6" fill="#333" font-weight="bold" text-anchor="middle" >喀布尔</text>
<text x="769.9" y="612.5" font-size="5.6" fill="#4a4a4a" font-weight="normal" text-anchor="middle" >白沙瓦</text>
<text x="748.5" y="622.6" font-size="5.6" fill="#4a4a4a" font-weight="normal" text-anchor="middle" >霍斯特</text>
<text x="809.2" y="611.4" font-size="5.6" fill="#4a4a4a" font-weight="normal" text-anchor="middle" >斯利那加</text>
<text x="803.6" y="585.6" font-size="5.6" fill="#4a4a4a" font-weight="normal" text-anchor="middle" >吉尔吉特</text>
<text x="802.4" y="638.8" font-size="5.6" fill="#4a4a4a" font-weight="normal" text-anchor="middle" >古吉兰瓦拉</text>
<text x="790.8" y="648.7" font-size="6.4" fill="#333" font-weight="bold" text-anchor="middle" >拉合尔</text>
<text x="822.7" y="656.1" font-size="5.6" fill="#4a4a4a" font-weight="normal" text-anchor="middle" >卢迪亚纳</text>
<text x="768.7" y="666.4" font-size="5.6" fill="#4a4a4a" font-weight="normal" text-anchor="middle" >木尔坦</text>
<text x="826.7" y="697.7" font-size="6.4" fill="#333" font-weight="bold" text-anchor="middle" >新德里</text>
<text x="822.2" y="710.9" font-size="5.6" fill="#4a4a4a" font-weight="normal" text-anchor="middle" >斋浦尔</text>
<text x="849.6" y="707.3" font-size="5.6" fill="#4a4a4a" font-weight="normal" text-anchor="middle" >阿格拉</text>
<text x="822.7" y="733.8" font-size="5.6" fill="#4a4a4a" font-weight="normal" text-anchor="middle" >科塔</text>
<text x="823.1" y="766.1" font-size="5.6" fill="#4a4a4a" font-weight="normal" text-anchor="middle" >印多尔</text>
<text x="785.6" y="785.5" font-size="5.6" fill="#4a4a4a" font-weight="normal" text-anchor="middle" >苏拉特</text>
<text x="863.1" y="785.9" font-size="5.6" fill="#4a4a4a" font-weight="normal" text-anchor="middle" >那格浦尔</text>
<text x="796.8" y="800.5" font-size="5.6" fill="#4a4a4a" font-weight="normal" text-anchor="middle" >纳西克</text>
<text x="700.2" y="747.6" font-size="6.4" fill="#333" font-weight="bold" text-anchor="middle" >卡拉奇</text>
<text x="623.9" y="763.4" font-size="5.6" fill="#4a4a4a" font-weight="normal" text-anchor="middle" >马斯喀特</text>
<text x="502.1" y="717.4" font-size="5.6" fill="#4a4a4a" font-weight="normal" text-anchor="middle" >达曼</text>
<text x="529.5" y="733.1" font-size="5.6" fill="#4a4a4a" font-weight="normal" text-anchor="middle" >多哈</text>
<text x="557.2" y="734.1" font-size="6.4" fill="#333" font-weight="bold" text-anchor="middle" >迪拜</text>
<text x="539.6" y="744.4" font-size="5.6" fill="#4a4a4a" font-weight="normal" text-anchor="middle" >阿布达比</text>
<text x="578.9" y="720.8" font-size="5.6" fill="#4a4a4a" font-weight="normal" text-anchor="middle" >加萨</text>
<text x="766.5" y="759.7" font-size="5.2" fill="#8a8a8a" font-weight="normal" text-anchor="middle" >古吉拉特邦</text>
<text x="790.1" y="714.6" font-size="5.2" fill="#8a8a8a" font-weight="normal" text-anchor="middle" >拉贾斯坦邦</text>
<text x="1074.8" y="595.7" font-size="5.8" fill="#1f3a6e" font-weight="bold" text-anchor="middle" >青海省</text>
<text x="1241.7" y="592.4" font-size="5.8" fill="#1f3a6e" font-weight="bold" text-anchor="middle" >陕西省</text>
<text x="1285.9" y="618.9" font-size="5.8" fill="#1f3a6e" font-weight="bold" text-anchor="middle" >河南省</text>
<text x="1282.6" y="657.5" font-size="5.8" fill="#1f3a6e" font-weight="bold" text-anchor="middle" >湖北省</text>
<text x="1275.8" y="664.6" font-size="5.6" fill="#8a949e" font-weight="normal" text-anchor="middle" >沙市区</text>
<text x="1151.2" y="670.3" font-size="5.8" fill="#1f3a6e" font-weight="bold" text-anchor="middle" >四川省</text>
<text x="1265.1" y="708.7" font-size="5.8" fill="#1f3a6e" font-weight="bold" text-anchor="middle" >湖南省</text>
<text x="1205.8" y="715.5" font-size="5.8" fill="#1f3a6e" font-weight="bold" text-anchor="middle" >贵州省</text>
<text x="1139.9" y="737.9" font-size="5.8" fill="#1f3a6e" font-weight="bold" text-anchor="middle" >云南省</text>
<text x="1234.3" y="755.9" font-size="5.8" fill="#1f3a6e" font-weight="bold" text-anchor="middle" >广西壮族自治区</text>
<text x="1295.6" y="768.9" font-size="5.8" fill="#1f3a6e" font-weight="bold" text-anchor="middle" >广东省</text>
<text x="962.0" y="649.4" font-size="5.8" fill="#1f3a6e" font-weight="bold" text-anchor="middle" >西藏自治区</text>
<text x="1012.6" y="674.0" font-size="5.4" fill="#8a949e" font-weight="normal" text-anchor="middle" >拉萨市</text>
<text x="940.0" y="699.8" font-size="6" fill="#333" font-weight="bold" text-anchor="middle" >加德满都</text>
<text x="912.0" y="731.6" font-size="5.6" fill="#4a4a4a" font-weight="normal" text-anchor="middle" >瓦拉纳西</text>
<text x="981.1" y="744.6" font-size="5.6" fill="#4a4a4a" font-weight="normal" text-anchor="middle" >拉杰沙希</text>
<text x="1047.8" y="738.7" font-size="5.6" fill="#4a4a4a" font-weight="normal" text-anchor="middle" >英帕尔</text>
<text x="1003.6" y="766.1" font-size="5.6" fill="#4a4a4a" font-weight="normal" text-anchor="middle" >库尔纳</text>
<text x="978.2" y="777.6" font-size="6.2" fill="#333" font-weight="bold" text-anchor="middle" >加尔各答</text>
<text x="1074.8" y="775.7" font-size="6" fill="#333" font-weight="bold" text-anchor="middle" >曼德勒</text>
<text x="1196.1" y="787.3" font-size="5.8" fill="#666" font-weight="normal" text-anchor="middle" >河内市</text>
<text x="1086.0" y="790.9" font-size="5.6" fill="#4a4a4a" font-weight="normal" text-anchor="middle" >东枝</text>
<text x="1128.7" y="797.6" font-size="5.6" fill="#4a4a4a" font-weight="normal" text-anchor="middle" >会晒</text>
</g>
<g font-family="Liberation Sans, Noto Sans CJK SC, sans-serif" font-size="8.6" fill="#fff" text-anchor="middle">
<text x="943.8" y="487.3">新疆</text>
<text x="922.1" y="639.1">西藏</text>
</g>
<path d="M943.8 507.9 C941.6 503.7 936.4 500.5 936.4 497.1 A7.4 7.1 0 1 1 951.2 497.1 C951.2 500.5 946.0 503.7 943.8 507.9Z" fill="#3d5ef2"/><circle cx="943.8" cy="497.3" r="3.3" fill="#fff"/>
<path d="M922.1 659.9 C919.9 655.7 914.7 652.5 914.7 649.1 A7.4 7.1 0 1 1 929.5 649.1 C929.5 652.5 924.3 655.7 922.1 659.9Z" fill="#3d5ef2"/><circle cx="922.1" cy="649.3" r="3.3" fill="#fff"/>
<rect x="481.5" y="791.2" width="28" height="4.6" fill="#fff" stroke="#9a9a9a" stroke-width="0.4"/><text x="495.5" y="795" font-size="3.4" fill="#555" text-anchor="middle" font-family="Liberation Sans, sans-serif">300 km</text>
</g>
<rect x="477.6" y="354.7" width="826.0" height="446.7" fill="none" stroke="#0a5fc4" stroke-width="0.8"/>
<circle cx="477.6" cy="354.7" r="1.5" fill="#fff" stroke="#0a84ff" stroke-width="1"/>
<circle cx="1303.6" cy="354.7" r="1.5" fill="#fff" stroke="#0a84ff" stroke-width="1"/>
<circle cx="477.6" cy="801.4" r="1.5" fill="#fff" stroke="#0a84ff" stroke-width="1"/>
<circle cx="1303.6" cy="801.4" r="1.5" fill="#fff" stroke="#0a84ff" stroke-width="1"/>
<circle cx="890.6" cy="354.7" r="2.1" fill="#fff" stroke="#0a84ff" stroke-width="1"/>
<circle cx="890.6" cy="801.4" r="2.1" fill="#fff" stroke="#0a84ff" stroke-width="1"/>
<circle cx="477.6" cy="578.0" r="1.5" fill="#fff" stroke="#0a84ff" stroke-width="1"/>
<circle cx="1303.6" cy="578.0" r="1.5" fill="#fff" stroke="#0a84ff" stroke-width="1"/>
<rect x="885.0" y="348.3" width="0.9" height="0.9" fill="#d8d8d8" opacity="0.9"/>
<rect x="885.0" y="350.1" width="0.9" height="0.9" fill="#d8d8d8" opacity="0.9"/>
<rect x="886.9" y="348.3" width="0.9" height="0.9" fill="#d8d8d8" opacity="0.9"/>
<rect x="886.9" y="350.1" width="0.9" height="0.9" fill="#d8d8d8" opacity="0.9"/>
<rect x="888.8" y="348.3" width="0.9" height="0.9" fill="#d8d8d8" opacity="0.4"/>
<rect x="888.8" y="350.1" width="0.9" height="0.9" fill="#d8d8d8" opacity="0.4"/>
<rect x="891.8" y="348.3" width="0.9" height="0.9" fill="#d8d8d8" opacity="0.9"/>
<rect x="891.8" y="350.1" width="0.9" height="0.9" fill="#d8d8d8" opacity="0.9"/>
<rect x="893.7" y="348.3" width="0.9" height="0.9" fill="#d8d8d8" opacity="0.9"/>
<rect x="893.7" y="350.1" width="0.9" height="0.9" fill="#d8d8d8" opacity="0.9"/>
<rect x="895.6" y="348.3" width="0.9" height="0.9" fill="#d8d8d8" opacity="0.4"/>
<rect x="895.6" y="350.1" width="0.9" height="0.9" fill="#d8d8d8" opacity="0.4"/>
</svg>
<div class="abs" style="left:461.9px;top:307.7px;width:842.1px;height:22.9px;background:rgba(12,13,14,.74);"></div>
<div class="t" style="left:477.6px;top:316.2px;font-size:12px;color:#a4a4a4;transform:scale(0.6534,0.597);transform-origin:0 0;">温馨提示：双击组件进入编辑状态</div>
<div class="abs" style="left:1162px;top:312px;width:56.8px;height:15px;border:0.8px solid #0a6fd8;border-radius:2px"></div>
<div class="t" style="left:1175.5px;top:316.4px;font-size:12px;color:#0a7ae8;transform:scale(0.6135,0.597);transform-origin:0 0;">不再提示</div>
<div class="abs" style="left:1231px;top:312px;width:56.8px;height:15px;border:0.8px solid #b0b0b0;border-radius:2px"></div>
<div class="t" style="left:1244.6px;top:316.4px;font-size:12px;color:#e0e0e0;transform:scale(0.6135,0.597);transform-origin:0 0;">关闭提示</div>
<div class="abs" style="left:1304.0px;top:307.7px;width:182.0px;height:564.3px;background:#131417;"></div>
<div class="abs" style="left:1304.0px;top:330.2px;width:182.0px;height:0.7px;background:#26282c;"></div>
<svg style="left:1312.0px;top:314.8px" width="6.6" height="8.4" viewBox="0 0 11 14"><rect x="0.5" y="0.5" width="9.5" height="12.5" rx="1" stroke="#9c9c9c" stroke-width="1.2" fill="none"/><path d="M2.5 3.8H8M2.5 6.8H8M2.5 9.8H8M4 3.8V9.8" stroke="#9c9c9c" stroke-width="1.1"/></svg>
<div class="t" style="left:1320.0px;top:315.6px;font-size:12px;color:#bcbcbc;transform:scale(0.6135,0.597);transform-origin:0 0;">子看板2</div>
<svg style="left:1348.3px;top:316.6px" width="3.4" height="5.4" viewBox="0 0 6 9"><path d="M0.8 0.6L5 4.5L0.8 8.4" stroke="#9a9a9a" stroke-width="1.2" fill="none"/></svg>
<div class="t" style="left:1353.0px;top:315.6px;font-size:12px;color:#fff;font-weight:bold;transform:scale(0.5890,0.597);transform-origin:0 0;">GIS电子地图（基础）</div>
<div class="t" style="left:1314.7px;top:338.1px;font-size:12px;color:#f2f2f2;transform:scale(0.6135,0.597);transform-origin:0 0;">样式</div>
<div class="t" style="left:1339.5px;top:338.1px;font-size:12px;color:#f2f2f2;transform:scale(0.6135,0.597);transform-origin:0 0;">交互</div>
<div class="t" style="left:1364.2px;top:338.1px;font-size:12px;color:#f2f2f2;transform:scale(0.6135,0.597);transform-origin:0 0;">数据</div>
<div class="t" style="left:1388.8px;top:338.1px;font-size:12px;color:#f2f2f2;transform:scale(0.6135,0.597);transform-origin:0 0;">代码</div>
<div class="abs" style="left:1335.0px;top:350.6px;width:25.0px;height:1.6px;background:#0a84ff;"></div>
<div class="abs" style="left:1430.0px;top:334.3px;width:48.8px;height:14.3px;background:#222324;border-radius:2px"></div>
<div class="t" style="left:1434.8px;top:338.1px;font-size:12px;color:#fff;transform:scale(0.6135,0.597);transform-origin:0 0;">默认状态</div>
<svg style="left:1468.0px;top:339.8px" width="7.2" height="4.2" viewBox="0 0 12 7"><path d="M0.8 0.8L6 6L11.2 0.8" stroke="#e8e8e8" stroke-width="1.6" fill="none"/></svg>
<div class="abs" style="left:1304.0px;top:353.0px;width:182.0px;height:20.8px;background:#1e1e1e;"></div>
<div class="t" style="left:1314.0px;top:359.6px;font-size:12px;color:#f0f0f0;transform:scale(0.6135,0.597);transform-origin:0 0;">交互设置</div>
<svg style="left:1476.5px;top:358.6px" width="3.0" height="9.4" viewBox="0 0 5 16"><circle cx="2.6" cy="2.7" r="1.7" fill="#e0e0e0"/><circle cx="2.6" cy="8" r="1.7" fill="#e0e0e0"/><circle cx="2.6" cy="13.3" r="1.7" fill="#e0e0e0"/></svg>
<div class="abs" style="left:1316.0px;top:382.0px;width:158.0px;height:18.5px;background:#0a84ff;border-radius:2px"></div>
<svg style="left:1374.2px;top:387.7px" width="6.4" height="6.4" viewBox="0 0 10 10"><path d="M5 0V10M0 5H10" stroke="#fff" stroke-width="1.1"/></svg>
<div class="t" style="left:1382.5px;top:387.4px;font-size:13px;color:#fff;transform:scale(0.6135,0.597);transform-origin:0 0;">添加交互</div>
<div class="abs" style="left:462.0px;top:849.2px;width:1024.0px;height:22.8px;background:#1e1e1e;"></div>
<div class="abs" style="left:501.0px;top:849.2px;width:0.7px;height:22.8px;background:#28292b;"></div>
<div class="abs" style="left:580.8px;top:849.2px;width:0.7px;height:22.8px;background:#28292b;"></div>
<div class="abs" style="left:659.5px;top:849.2px;width:0.7px;height:22.8px;background:#28292b;"></div>
<div class="abs" style="left:680.0px;top:849.2px;width:0.7px;height:22.8px;background:#28292b;"></div>
<div class="abs" style="left:718.8px;top:849.2px;width:0.7px;height:22.8px;background:#28292b;"></div>
<div class="abs" style="left:580.8px;top:849.2px;width:79.0px;height:1.3px;background:#0a84ff;"></div>
<div class="t" style="left:468.7px;top:858.1px;font-size:12px;color:#f4f4f4;transform:scale(0.6135,0.597);transform-origin:0 0;">前景</div>
<svg style="left:488.9px;top:853.0px" width="8.6" height="8.6" viewBox="0 0 14 14"><circle cx="7" cy="7" r="6" stroke="#d8d8d8" stroke-width="1.3" fill="none"/><path d="M7 3.8V10.2M3.8 7H10.2" stroke="#d8d8d8" stroke-width="1.3"/></svg>
<svg style="left:508.6px;top:858.0px" width="8.0" height="7.4" viewBox="0 0 14 13"><path d="M0.5 0.8H13.5M2 0.8V8.6H12V0.8M4.8 8.6L3.2 12.2M9.2 8.6L10.8 12.2" stroke="#b8b8b8" stroke-width="1.5" fill="none"/></svg>
<div class="t" style="left:519.0px;top:858.4px;font-size:12px;color:#f4f4f4;transform:scale(0.6135,0.597);transform-origin:0 0;">子看板1</div>
<svg style="left:587.0px;top:858.0px" width="8.0" height="7.4" viewBox="0 0 14 13"><path d="M0.5 0.8H13.5M2 0.8V8.6H12V0.8M4.8 8.6L3.2 12.2M9.2 8.6L10.8 12.2" stroke="#0a84ff" stroke-width="1.5" fill="none"/></svg>
<div class="t" style="left:597.6px;top:858.4px;font-size:12px;color:#0a84ff;transform:scale(0.6135,0.597);transform-origin:0 0;">子看板2</div>
<svg style="left:665.3px;top:857.0px" width="8.6" height="8.6" viewBox="0 0 14 14"><path d="M7 0.5V13.5M0.5 7H13.5" stroke="#fff" stroke-width="2.4"/></svg>
<div class="t" style="left:686.0px;top:858.1px;font-size:12px;color:#f4f4f4;transform:scale(0.6135,0.597);transform-origin:0 0;">背景</div>
<svg style="left:705.7px;top:853.0px" width="8.6" height="8.6" viewBox="0 0 14 14"><circle cx="7" cy="7" r="6" stroke="#d8d8d8" stroke-width="1.3" fill="none"/><path d="M7 3.8V10.2M3.8 7H10.2" stroke="#d8d8d8" stroke-width="1.3"/></svg>
<div class="t" style="left:1233.0px;top:857.9px;font-size:12px;color:#c8c8c8;font-weight:bold;transform:scale(0.5429,0.597);transform-origin:0 0;">69.84%</div>
<svg style="left:1261.7px;top:857.0px" width="9.6" height="9.2" viewBox="0 0 16 15"><rect x="0.7" y="0.7" width="14.6" height="13.6" stroke="#e8e8e8" stroke-width="1.5" fill="#1b2a3a"/><path d="M8 2V13M2.2 7.5H13.8" stroke="#e8e8e8" stroke-width="1.3"/><circle cx="8" cy="7.5" r="2" fill="#e8e8e8"/></svg>
<svg style="left:1276.0px;top:858.0px" width="11.4" height="7.4" viewBox="0 0 19 12"><rect x="0.7" y="0.7" width="17.6" height="10.6" rx="2" stroke="#e8e8e8" stroke-width="1.6" fill="none"/><path d="M3.5 4H15.5M3.5 7.8H15.5" stroke="#e8e8e8" stroke-width="1.5" stroke-dasharray="1.5 1.2"/></svg>
<svg style="left:1291.0px;top:856.4px" width="10.0" height="10.0" viewBox="0 0 16 16"><rect x="0.7" y="0.7" width="14.6" height="14.6" stroke="#e0e0e0" stroke-width="1.5" fill="#2a2a2a"/><path d="M3.5 4.5L7 8L3.5 11.5M8 11.5H12" stroke="#e8e8e8" stroke-width="1.5" fill="none"/></svg>
<div class="abs" style="left:1304.0px;top:849.2px;width:0.7px;height:22.8px;background:#2a2b2d;"></div>
<div class="t" style="left:1306.0px;top:851.0px;font-size:12px;color:#c8c8c8;transform:scale(0.6135,0.597);transform-origin:0 0;">内存:</div>
<div class="t" style="left:1328.0px;top:851.0px;font-size:12px;color:#c8c8c8;transform:scale(0.5442,0.597);transform-origin:0 0;-webkit-text-stroke:.3px #c8c8c8">551 / 7686 / 8240 MB&nbsp;&nbsp;206 / 757 MB</div>
<div class="t" style="left:1460.5px;top:851.0px;font-size:12px;color:#c8c8c8;transform:scale(0.5442,0.597);transform-origin:0 0;-webkit-text-stroke:.3px #c8c8c8">FPS:</div>
<div class="t" style="left:1480.0px;top:851.0px;font-size:12px;color:#c8c8c8;transform:scale(0.5442,0.597);transform-origin:0 0;-webkit-text-stroke:.3px #c8c8c8">59</div>
<div class="t" style="left:1306.0px;top:863.6px;font-size:12px;color:#c8c8c8;transform:scale(0.6135,0.597);transform-origin:0 0;">组件数:</div>
<div class="t" style="left:1331.6px;top:863.6px;font-size:12px;color:#c8c8c8;transform:scale(0.5442,0.597);transform-origin:0 0;-webkit-text-stroke:.3px #c8c8c8">1 / 10</div>
<div class="t" style="left:1353.0px;top:863.6px;font-size:12px;color:#c8c8c8;transform:scale(0.6135,0.597);transform-origin:0 0;">子组件数:</div>
<div class="t" style="left:1384.0px;top:863.6px;font-size:12px;color:#c8c8c8;transform:scale(0.5442,0.597);transform-origin:0 0;-webkit-text-stroke:.3px #c8c8c8">537</div>
<div class="t" style="left:1473.8px;top:863.6px;font-size:12px;color:#c8c8c8;transform:scale(0.5442,0.597);transform-origin:0 0;-webkit-text-stroke:.3px #c8c8c8">4.7.0</div>
</div>
<!-- selection outline of picture component -->
<svg style="left:0;top:0" width="1917" height="1024"><rect x="309.1" y="263.4" width="1177.8" height="609.1" fill="none" stroke="#0a80f0" stroke-width="1.8"/></svg>
</body>
</html>
